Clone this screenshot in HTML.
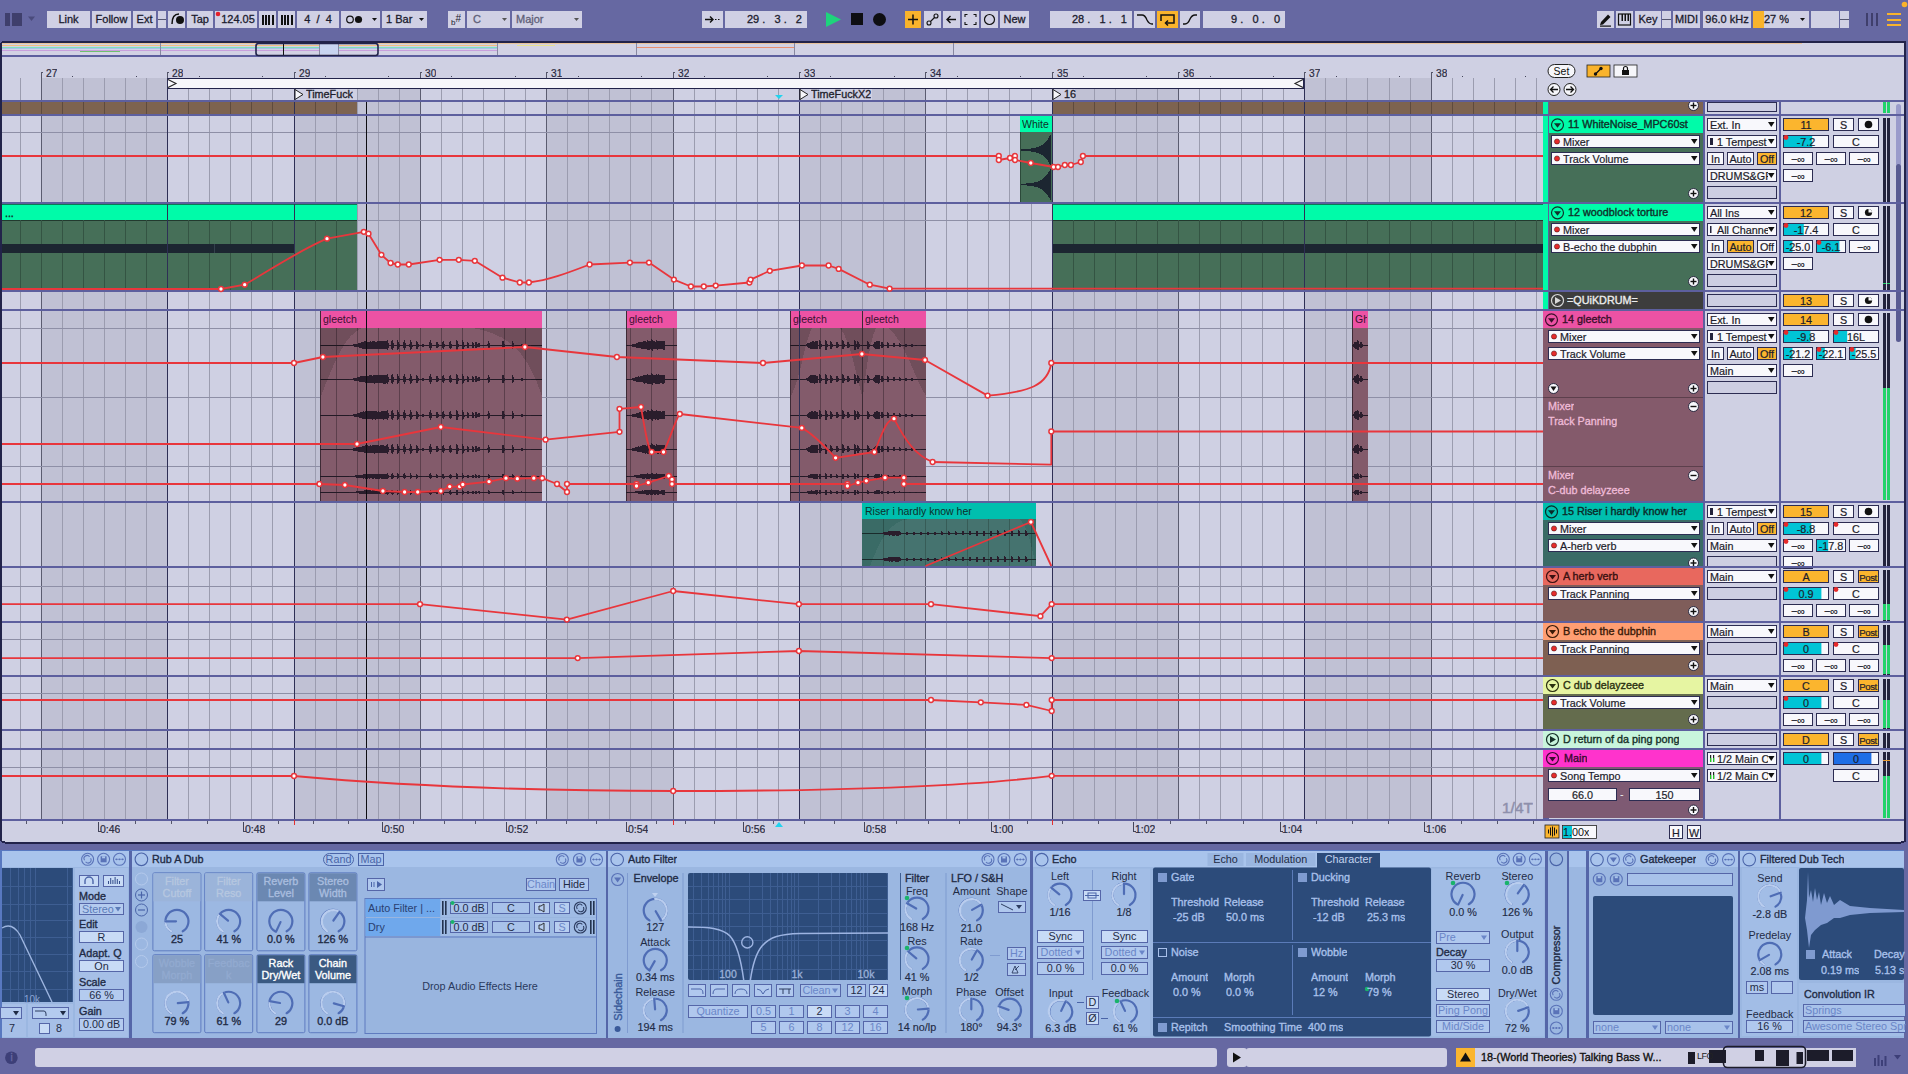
<!DOCTYPE html>
<html><head><meta charset="utf-8"><style>
html,body{margin:0;padding:0;}
body{width:1908px;height:1074px;overflow:hidden;position:relative;background:#6668a2;font-family:"Liberation Sans",sans-serif;}
.a{position:absolute;}
.t{white-space:nowrap;overflow:hidden;}
svg{position:absolute;left:0;top:0;}
</style></head><body>
<svg width="1908" height="1074" viewBox="0 0 1908 1074" shape-rendering="crispEdges">
<rect x="1" y="41.5" width="1904" height="801" rx="4" ry="4" fill="#cfd0e3" stroke="#22234a" stroke-width="2"/>
<rect x="2" y="43" width="1902" height="12" fill="#d2d2e4" />
<rect x="2" y="43" width="1800" height="1" fill="#e8c29a" />
<rect x="2" y="45" width="495" height="1" fill="#f0c080" />
<rect x="2" y="46.5" width="495" height="1" fill="#82e0b8" />
<rect x="2" y="48" width="495" height="1" fill="#a8c0ee" />
<rect x="2" y="50" width="495" height="1" fill="#c8a0dc" />
<rect x="80" y="50.5" width="40" height="1" fill="#70c070" />
<rect x="636" y="47" width="158" height="1" fill="#e89070" />
<rect x="517" y="45" width="38" height="1" fill="#e8e090" />
<rect x="2" y="55" width="1902" height="2" fill="#5d5f9e" />
<rect x="160" y="43" width="1" height="12" fill="#8888a0" />
<rect x="319" y="43" width="1" height="12" fill="#8888a0" />
<rect x="338" y="43" width="1" height="12" fill="#8888a0" />
<rect x="497" y="43" width="1" height="12" fill="#8888a0" />
<rect x="636" y="43" width="1" height="12" fill="#8888a0" />
<rect x="794" y="43" width="1" height="12" fill="#8888a0" />
<rect x="953" y="43" width="1" height="12" fill="#8888a0" />
<rect x="283" y="43" width="1.3" height="12" fill="#111" />
<rect x="320" y="44" width="18" height="10" fill="#c8d4f0" />
<rect x="2" y="57" width="1541" height="21" fill="#cfd0e3" />
<rect x="2" y="78" width="1541" height="741" fill="#cfd0e3" />
<rect x="42" y="78" width="126" height="741" fill="#c0c1d4" />
<rect x="295" y="78" width="126" height="741" fill="#c0c1d4" />
<rect x="547" y="78" width="127" height="741" fill="#c0c1d4" />
<rect x="800" y="78" width="126" height="741" fill="#c0c1d4" />
<rect x="1053" y="78" width="126" height="741" fill="#c0c1d4" />
<rect x="1305" y="78" width="127" height="741" fill="#c0c1d4" />
<rect x="20" y="78" width="1" height="741" fill="#9b9caf" />
<rect x="41" y="78" width="1" height="741" fill="#5b5c70" />
<rect x="62" y="78" width="1" height="741" fill="#9b9caf" />
<rect x="83" y="78" width="1" height="741" fill="#9b9caf" />
<rect x="104" y="78" width="1" height="741" fill="#9b9caf" />
<rect x="125" y="78" width="1" height="741" fill="#9b9caf" />
<rect x="146" y="78" width="1" height="741" fill="#9b9caf" />
<rect x="167" y="78" width="1" height="741" fill="#5b5c70" />
<rect x="188" y="78" width="1" height="741" fill="#9b9caf" />
<rect x="209" y="78" width="1" height="741" fill="#9b9caf" />
<rect x="230" y="78" width="1" height="741" fill="#9b9caf" />
<rect x="251" y="78" width="1" height="741" fill="#9b9caf" />
<rect x="272" y="78" width="1" height="741" fill="#9b9caf" />
<rect x="294" y="78" width="1" height="741" fill="#5b5c70" />
<rect x="315" y="78" width="1" height="741" fill="#9b9caf" />
<rect x="336" y="78" width="1" height="741" fill="#9b9caf" />
<rect x="357" y="78" width="1" height="741" fill="#9b9caf" />
<rect x="378" y="78" width="1" height="741" fill="#9b9caf" />
<rect x="399" y="78" width="1" height="741" fill="#9b9caf" />
<rect x="420" y="78" width="1" height="741" fill="#5b5c70" />
<rect x="441" y="78" width="1" height="741" fill="#9b9caf" />
<rect x="462" y="78" width="1" height="741" fill="#9b9caf" />
<rect x="483" y="78" width="1" height="741" fill="#9b9caf" />
<rect x="504" y="78" width="1" height="741" fill="#9b9caf" />
<rect x="525" y="78" width="1" height="741" fill="#9b9caf" />
<rect x="546" y="78" width="1" height="741" fill="#5b5c70" />
<rect x="567" y="78" width="1" height="741" fill="#9b9caf" />
<rect x="588" y="78" width="1" height="741" fill="#9b9caf" />
<rect x="609" y="78" width="1" height="741" fill="#9b9caf" />
<rect x="630" y="78" width="1" height="741" fill="#9b9caf" />
<rect x="651" y="78" width="1" height="741" fill="#9b9caf" />
<rect x="673" y="78" width="1" height="741" fill="#5b5c70" />
<rect x="694" y="78" width="1" height="741" fill="#9b9caf" />
<rect x="715" y="78" width="1" height="741" fill="#9b9caf" />
<rect x="736" y="78" width="1" height="741" fill="#9b9caf" />
<rect x="757" y="78" width="1" height="741" fill="#9b9caf" />
<rect x="778" y="78" width="1" height="741" fill="#9b9caf" />
<rect x="799" y="78" width="1" height="741" fill="#5b5c70" />
<rect x="820" y="78" width="1" height="741" fill="#9b9caf" />
<rect x="841" y="78" width="1" height="741" fill="#9b9caf" />
<rect x="862" y="78" width="1" height="741" fill="#9b9caf" />
<rect x="883" y="78" width="1" height="741" fill="#9b9caf" />
<rect x="904" y="78" width="1" height="741" fill="#9b9caf" />
<rect x="925" y="78" width="1" height="741" fill="#5b5c70" />
<rect x="946" y="78" width="1" height="741" fill="#9b9caf" />
<rect x="967" y="78" width="1" height="741" fill="#9b9caf" />
<rect x="988" y="78" width="1" height="741" fill="#9b9caf" />
<rect x="1009" y="78" width="1" height="741" fill="#9b9caf" />
<rect x="1031" y="78" width="1" height="741" fill="#9b9caf" />
<rect x="1052" y="78" width="1" height="741" fill="#5b5c70" />
<rect x="1073" y="78" width="1" height="741" fill="#9b9caf" />
<rect x="1094" y="78" width="1" height="741" fill="#9b9caf" />
<rect x="1115" y="78" width="1" height="741" fill="#9b9caf" />
<rect x="1136" y="78" width="1" height="741" fill="#9b9caf" />
<rect x="1157" y="78" width="1" height="741" fill="#9b9caf" />
<rect x="1178" y="78" width="1" height="741" fill="#5b5c70" />
<rect x="1199" y="78" width="1" height="741" fill="#9b9caf" />
<rect x="1220" y="78" width="1" height="741" fill="#9b9caf" />
<rect x="1241" y="78" width="1" height="741" fill="#9b9caf" />
<rect x="1262" y="78" width="1" height="741" fill="#9b9caf" />
<rect x="1283" y="78" width="1" height="741" fill="#9b9caf" />
<rect x="1304" y="78" width="1" height="741" fill="#5b5c70" />
<rect x="1325" y="78" width="1" height="741" fill="#9b9caf" />
<rect x="1346" y="78" width="1" height="741" fill="#9b9caf" />
<rect x="1367" y="78" width="1" height="741" fill="#9b9caf" />
<rect x="1389" y="78" width="1" height="741" fill="#9b9caf" />
<rect x="1410" y="78" width="1" height="741" fill="#9b9caf" />
<rect x="1431" y="78" width="1" height="741" fill="#5b5c70" />
<rect x="1452" y="78" width="1" height="741" fill="#9b9caf" />
<rect x="1473" y="78" width="1" height="741" fill="#9b9caf" />
<rect x="1494" y="78" width="1" height="741" fill="#9b9caf" />
<rect x="1515" y="78" width="1" height="741" fill="#9b9caf" />
<rect x="1536" y="78" width="1" height="741" fill="#9b9caf" />
<rect x="41" y="72" width="1" height="6" fill="#55566a" />
<rect x="41" y="72" width="2" height="1" fill="#55566a" />
<rect x="72" y="76" width="1" height="1" fill="#44455a" />
<rect x="136" y="76" width="1" height="1" fill="#44455a" />
<rect x="167" y="72" width="1" height="6" fill="#55566a" />
<rect x="167" y="72" width="2" height="1" fill="#55566a" />
<rect x="199" y="76" width="1" height="1" fill="#44455a" />
<rect x="262" y="76" width="1" height="1" fill="#44455a" />
<rect x="294" y="72" width="1" height="6" fill="#55566a" />
<rect x="294" y="72" width="2" height="1" fill="#55566a" />
<rect x="325" y="76" width="1" height="1" fill="#44455a" />
<rect x="388" y="76" width="1" height="1" fill="#44455a" />
<rect x="420" y="72" width="1" height="6" fill="#55566a" />
<rect x="420" y="72" width="2" height="1" fill="#55566a" />
<rect x="451" y="76" width="1" height="1" fill="#44455a" />
<rect x="515" y="76" width="1" height="1" fill="#44455a" />
<rect x="546" y="72" width="1" height="6" fill="#55566a" />
<rect x="546" y="72" width="2" height="1" fill="#55566a" />
<rect x="578" y="76" width="1" height="1" fill="#44455a" />
<rect x="641" y="76" width="1" height="1" fill="#44455a" />
<rect x="673" y="72" width="1" height="6" fill="#55566a" />
<rect x="673" y="72" width="2" height="1" fill="#55566a" />
<rect x="704" y="76" width="1" height="1" fill="#44455a" />
<rect x="767" y="76" width="1" height="1" fill="#44455a" />
<rect x="799" y="72" width="1" height="6" fill="#55566a" />
<rect x="799" y="72" width="2" height="1" fill="#55566a" />
<rect x="830" y="76" width="1" height="1" fill="#44455a" />
<rect x="894" y="76" width="1" height="1" fill="#44455a" />
<rect x="925" y="72" width="1" height="6" fill="#55566a" />
<rect x="925" y="72" width="2" height="1" fill="#55566a" />
<rect x="957" y="76" width="1" height="1" fill="#44455a" />
<rect x="1020" y="76" width="1" height="1" fill="#44455a" />
<rect x="1052" y="72" width="1" height="6" fill="#55566a" />
<rect x="1052" y="72" width="2" height="1" fill="#55566a" />
<rect x="1083" y="76" width="1" height="1" fill="#44455a" />
<rect x="1146" y="76" width="1" height="1" fill="#44455a" />
<rect x="1178" y="72" width="1" height="6" fill="#55566a" />
<rect x="1178" y="72" width="2" height="1" fill="#55566a" />
<rect x="1210" y="76" width="1" height="1" fill="#44455a" />
<rect x="1273" y="76" width="1" height="1" fill="#44455a" />
<rect x="1304" y="72" width="1" height="6" fill="#55566a" />
<rect x="1304" y="72" width="2" height="1" fill="#55566a" />
<rect x="1336" y="76" width="1" height="1" fill="#44455a" />
<rect x="1399" y="76" width="1" height="1" fill="#44455a" />
<rect x="1431" y="72" width="1" height="6" fill="#55566a" />
<rect x="1431" y="72" width="2" height="1" fill="#55566a" />
<rect x="1462" y="76" width="1" height="1" fill="#44455a" />
<rect x="1525" y="76" width="1" height="1" fill="#44455a" />
<rect x="167.5" y="78.5" width="1136" height="10" fill="#f6f6fa" stroke="#22234a" stroke-width="1"/>
<rect x="295" y="89" width="62" height="11" fill="#cfd0e3" />
<rect x="800" y="89" width="72" height="11" fill="#cfd0e3" />
<rect x="1053" y="89" width="22" height="11" fill="#cfd0e3" />
<rect x="2" y="132" width="1541" height="1" fill="#8e8fa6" />
<rect x="2" y="220" width="1541" height="1" fill="#8e8fa6" />
<rect x="2" y="328" width="1541" height="1" fill="#8e8fa6" />
<rect x="2" y="586" width="1541" height="1" fill="#8e8fa6" />
<rect x="2" y="639" width="1541" height="1" fill="#8e8fa6" />
<rect x="2" y="693" width="1541" height="1" fill="#8e8fa6" />
<rect x="2" y="767" width="1541" height="1" fill="#8e8fa6" />
<rect x="2" y="397" width="1541" height="1" fill="#8e8fa6" />
<rect x="2" y="466" width="1541" height="1" fill="#8e8fa6" />
<rect x="2" y="102" width="355" height="12" fill="#7d6350" />
<rect x="20" y="102" width="1" height="12" fill="#5e4a3d" />
<rect x="41" y="102" width="1" height="12" fill="#5e4a3d" />
<rect x="62" y="102" width="1" height="12" fill="#5e4a3d" />
<rect x="83" y="102" width="1" height="12" fill="#5e4a3d" />
<rect x="104" y="102" width="1" height="12" fill="#5e4a3d" />
<rect x="125" y="102" width="1" height="12" fill="#5e4a3d" />
<rect x="146" y="102" width="1" height="12" fill="#5e4a3d" />
<rect x="167" y="102" width="1" height="12" fill="#5e4a3d" />
<rect x="188" y="102" width="1" height="12" fill="#5e4a3d" />
<rect x="209" y="102" width="1" height="12" fill="#5e4a3d" />
<rect x="230" y="102" width="1" height="12" fill="#5e4a3d" />
<rect x="251" y="102" width="1" height="12" fill="#5e4a3d" />
<rect x="272" y="102" width="1" height="12" fill="#5e4a3d" />
<rect x="294" y="102" width="1" height="12" fill="#5e4a3d" />
<rect x="315" y="102" width="1" height="12" fill="#5e4a3d" />
<rect x="336" y="102" width="1" height="12" fill="#5e4a3d" />
<rect x="1052" y="102" width="491" height="12" fill="#7d6350" />
<rect x="1073" y="102" width="1" height="12" fill="#5e4a3d" />
<rect x="1094" y="102" width="1" height="12" fill="#5e4a3d" />
<rect x="1115" y="102" width="1" height="12" fill="#5e4a3d" />
<rect x="1136" y="102" width="1" height="12" fill="#5e4a3d" />
<rect x="1157" y="102" width="1" height="12" fill="#5e4a3d" />
<rect x="1178" y="102" width="1" height="12" fill="#5e4a3d" />
<rect x="1199" y="102" width="1" height="12" fill="#5e4a3d" />
<rect x="1220" y="102" width="1" height="12" fill="#5e4a3d" />
<rect x="1241" y="102" width="1" height="12" fill="#5e4a3d" />
<rect x="1262" y="102" width="1" height="12" fill="#5e4a3d" />
<rect x="1283" y="102" width="1" height="12" fill="#5e4a3d" />
<rect x="1304" y="102" width="1" height="12" fill="#5e4a3d" />
<rect x="1325" y="102" width="1" height="12" fill="#5e4a3d" />
<rect x="1346" y="102" width="1" height="12" fill="#5e4a3d" />
<rect x="1367" y="102" width="1" height="12" fill="#5e4a3d" />
<rect x="1389" y="102" width="1" height="12" fill="#5e4a3d" />
<rect x="1410" y="102" width="1" height="12" fill="#5e4a3d" />
<rect x="1431" y="102" width="1" height="12" fill="#5e4a3d" />
<rect x="1452" y="102" width="1" height="12" fill="#5e4a3d" />
<rect x="1473" y="102" width="1" height="12" fill="#5e4a3d" />
<rect x="1494" y="102" width="1" height="12" fill="#5e4a3d" />
<rect x="1515" y="102" width="1" height="12" fill="#5e4a3d" />
<rect x="1536" y="102" width="1" height="12" fill="#5e4a3d" />
<rect x="1020" y="116" width="32" height="16" fill="#00fba9" />
<rect x="1020" y="132" width="32" height="70" fill="#466f58" />
<rect x="1020" y="132" width="1" height="70" fill="#2c4a3a" />
<path d="M1021 149.3 L1030 148.8 C1040 147.5 1046 144 1051 134 L1051 166 C1046 156 1040 152.5 1030 151.2 L1021 150.7 Z" fill="#1c2631"/>
<path d="M1021 183.8 L1030 183.3 C1040 182.0 1046 178.5 1051 168.5 L1051 200.5 C1046 190.5 1040 187.0 1030 185.7 L1021 185.2 Z" fill="#1c2631"/>
<rect x="2" y="204" width="355" height="16" fill="#00fba9" />
<rect x="2" y="204" width="355" height="1" fill="#0b7a52" />
<rect x="2" y="220" width="355" height="70" fill="#466f58" />
<rect x="2" y="220" width="355" height="1" fill="#223a2e" />
<rect x="20" y="220" width="1" height="70" fill="#345443" />
<rect x="41" y="220" width="1" height="70" fill="#345443" />
<rect x="62" y="220" width="1" height="70" fill="#345443" />
<rect x="83" y="220" width="1" height="70" fill="#345443" />
<rect x="104" y="220" width="1" height="70" fill="#345443" />
<rect x="125" y="220" width="1" height="70" fill="#345443" />
<rect x="146" y="220" width="1" height="70" fill="#345443" />
<rect x="167" y="220" width="1" height="70" fill="#345443" />
<rect x="188" y="220" width="1" height="70" fill="#345443" />
<rect x="209" y="220" width="1" height="70" fill="#345443" />
<rect x="230" y="220" width="1" height="70" fill="#345443" />
<rect x="251" y="220" width="1" height="70" fill="#345443" />
<rect x="272" y="220" width="1" height="70" fill="#345443" />
<rect x="294" y="220" width="1" height="70" fill="#345443" />
<rect x="315" y="220" width="1" height="70" fill="#345443" />
<rect x="336" y="220" width="1" height="70" fill="#345443" />
<rect x="1052" y="204" width="491" height="16" fill="#00fba9" />
<rect x="1052" y="204" width="491" height="1" fill="#0b7a52" />
<rect x="1052" y="220" width="491" height="70" fill="#466f58" />
<rect x="1052" y="220" width="491" height="1" fill="#223a2e" />
<rect x="1073" y="220" width="1" height="70" fill="#345443" />
<rect x="1094" y="220" width="1" height="70" fill="#345443" />
<rect x="1115" y="220" width="1" height="70" fill="#345443" />
<rect x="1136" y="220" width="1" height="70" fill="#345443" />
<rect x="1157" y="220" width="1" height="70" fill="#345443" />
<rect x="1178" y="220" width="1" height="70" fill="#345443" />
<rect x="1199" y="220" width="1" height="70" fill="#345443" />
<rect x="1220" y="220" width="1" height="70" fill="#345443" />
<rect x="1241" y="220" width="1" height="70" fill="#345443" />
<rect x="1262" y="220" width="1" height="70" fill="#345443" />
<rect x="1283" y="220" width="1" height="70" fill="#345443" />
<rect x="1304" y="220" width="1" height="70" fill="#345443" />
<rect x="1325" y="220" width="1" height="70" fill="#345443" />
<rect x="1346" y="220" width="1" height="70" fill="#345443" />
<rect x="1367" y="220" width="1" height="70" fill="#345443" />
<rect x="1389" y="220" width="1" height="70" fill="#345443" />
<rect x="1410" y="220" width="1" height="70" fill="#345443" />
<rect x="1431" y="220" width="1" height="70" fill="#345443" />
<rect x="1452" y="220" width="1" height="70" fill="#345443" />
<rect x="1473" y="220" width="1" height="70" fill="#345443" />
<rect x="1494" y="220" width="1" height="70" fill="#345443" />
<rect x="1515" y="220" width="1" height="70" fill="#345443" />
<rect x="1536" y="220" width="1" height="70" fill="#345443" />
<rect x="2" y="244" width="292" height="9" fill="#1c2631" />
<rect x="214" y="244" width="1" height="9" fill="#33404c" />
<rect x="1052" y="244" width="491" height="9" fill="#1c2631" />
<rect x="320" y="311" width="222" height="17" fill="#ec52a4" />
<rect x="320" y="328" width="222" height="173" fill="#835b6b" />
<rect x="336" y="328" width="1" height="173" fill="#5c3f4c" />
<rect x="357" y="328" width="1" height="173" fill="#5c3f4c" />
<rect x="378" y="328" width="1" height="173" fill="#5c3f4c" />
<rect x="399" y="328" width="1" height="173" fill="#5c3f4c" />
<rect x="420" y="328" width="1" height="173" fill="#5c3f4c" />
<rect x="441" y="328" width="1" height="173" fill="#5c3f4c" />
<rect x="462" y="328" width="1" height="173" fill="#5c3f4c" />
<rect x="483" y="328" width="1" height="173" fill="#5c3f4c" />
<rect x="504" y="328" width="1" height="173" fill="#5c3f4c" />
<rect x="525" y="328" width="1" height="173" fill="#5c3f4c" />
<rect x="320" y="311" width="1" height="190" fill="#3d2a35" />
<rect x="320" y="345" width="222" height="1" fill="#231a26" />
<rect x="320" y="379" width="222" height="1" fill="#231a26" />
<rect x="320" y="415" width="222" height="1" fill="#231a26" />
<rect x="320" y="449" width="222" height="1" fill="#231a26" />
<rect x="320" y="476" width="222" height="1" fill="#231a26" />
<rect x="320" y="492" width="222" height="1" fill="#231a26" />
<rect x="626" y="311" width="51" height="17" fill="#ec52a4" />
<rect x="626" y="328" width="51" height="173" fill="#835b6b" />
<rect x="630" y="328" width="1" height="173" fill="#5c3f4c" />
<rect x="651" y="328" width="1" height="173" fill="#5c3f4c" />
<rect x="673" y="328" width="1" height="173" fill="#5c3f4c" />
<rect x="626" y="311" width="1" height="190" fill="#3d2a35" />
<rect x="626" y="345" width="51" height="1" fill="#231a26" />
<rect x="626" y="379" width="51" height="1" fill="#231a26" />
<rect x="626" y="415" width="51" height="1" fill="#231a26" />
<rect x="626" y="449" width="51" height="1" fill="#231a26" />
<rect x="626" y="476" width="51" height="1" fill="#231a26" />
<rect x="626" y="492" width="51" height="1" fill="#231a26" />
<rect x="790" y="311" width="72" height="17" fill="#ec52a4" />
<rect x="790" y="328" width="72" height="173" fill="#835b6b" />
<rect x="799" y="328" width="1" height="173" fill="#5c3f4c" />
<rect x="820" y="328" width="1" height="173" fill="#5c3f4c" />
<rect x="841" y="328" width="1" height="173" fill="#5c3f4c" />
<rect x="790" y="311" width="1" height="190" fill="#3d2a35" />
<rect x="790" y="345" width="72" height="1" fill="#231a26" />
<rect x="790" y="379" width="72" height="1" fill="#231a26" />
<rect x="790" y="415" width="72" height="1" fill="#231a26" />
<rect x="790" y="449" width="72" height="1" fill="#231a26" />
<rect x="790" y="476" width="72" height="1" fill="#231a26" />
<rect x="790" y="492" width="72" height="1" fill="#231a26" />
<rect x="862" y="311" width="64" height="17" fill="#ec52a4" />
<rect x="862" y="328" width="64" height="173" fill="#835b6b" />
<rect x="883" y="328" width="1" height="173" fill="#5c3f4c" />
<rect x="904" y="328" width="1" height="173" fill="#5c3f4c" />
<rect x="862" y="311" width="1" height="190" fill="#3d2a35" />
<rect x="862" y="345" width="64" height="1" fill="#231a26" />
<rect x="862" y="379" width="64" height="1" fill="#231a26" />
<rect x="862" y="415" width="64" height="1" fill="#231a26" />
<rect x="862" y="449" width="64" height="1" fill="#231a26" />
<rect x="862" y="476" width="64" height="1" fill="#231a26" />
<rect x="862" y="492" width="64" height="1" fill="#231a26" />
<rect x="1352" y="311" width="16" height="17" fill="#ec52a4" />
<rect x="1352" y="328" width="16" height="173" fill="#835b6b" />
<rect x="1352" y="311" width="1" height="190" fill="#3d2a35" />
<rect x="1352" y="345" width="16" height="1" fill="#231a26" />
<rect x="1352" y="379" width="16" height="1" fill="#231a26" />
<rect x="1352" y="415" width="16" height="1" fill="#231a26" />
<rect x="1352" y="449" width="16" height="1" fill="#231a26" />
<rect x="1352" y="476" width="16" height="1" fill="#231a26" />
<rect x="1352" y="492" width="16" height="1" fill="#231a26" />
<path d="M321 328 L321 396 C335 360 345 335 362 328 Z M542 328 L542 396 C530 360 515 335 473 328 Z" fill="#000" fill-opacity="0.14"/>
<path d="M791 328 L791 396 C800 380 805 340 812 328 Z M862 328 L862 396 C855 370 850 340 840 328 Z M863 328 L863 396 C866 370 870 340 876 328 Z M926 328 L926 396 C915 380 905 340 888 328 Z" fill="#000" fill-opacity="0.14"/>
<path d="M349.0 345.5 L349.8 345.3 L350.6 345.1 L351.4 345.0 L352.2 344.7 L353.0 344.5 L353.8 344.4 L354.6 344.1 L355.4 344.1 L356.2 343.7 L357.0 343.7 L357.8 343.5 L358.7 343.1 L359.5 342.6 L360.3 342.9 L361.1 342.7 L361.9 342.1 L362.7 341.6 L363.5 341.7 L364.3 341.7 L365.1 340.8 L365.9 341.8 L366.7 340.8 L367.5 341.5 L368.3 341.6 L369.1 341.7 L369.9 341.4 L370.7 340.8 L371.5 341.6 L372.3 341.1 L373.1 341.0 L373.9 341.4 L374.7 341.2 L375.5 341.7 L376.3 341.8 L377.2 341.6 L378.0 341.0 L378.8 341.3 L379.6 341.4 L380.4 341.1 L381.2 341.3 L382.0 341.5 L382.8 340.9 L383.6 341.0 L384.4 341.5 L385.2 341.1 L386.0 341.2 L386.0 349.2 L385.2 349.2 L384.4 348.9 L383.6 349.4 L382.8 349.5 L382.0 348.9 L381.2 349.1 L380.4 349.2 L379.6 349.0 L378.8 349.1 L378.0 349.3 L377.2 348.8 L376.3 348.7 L375.5 348.7 L374.7 349.2 L373.9 349.0 L373.1 349.3 L372.3 349.2 L371.5 348.8 L370.7 349.5 L369.9 348.9 L369.1 348.7 L368.3 348.8 L367.5 348.9 L366.7 349.5 L365.9 348.7 L365.1 349.5 L364.3 348.7 L363.5 348.7 L362.7 348.8 L361.9 348.4 L361.1 347.9 L360.3 347.7 L359.5 348.0 L358.7 347.5 L357.8 347.2 L357.0 347.0 L356.2 347.0 L355.4 346.7 L354.6 346.7 L353.8 346.4 L353.0 346.3 L352.2 346.2 L351.4 346.0 L350.6 345.9 L349.8 345.7 L349.0 345.5 Z M385.9 345.5 L386.8 338.5 L387.7 340.2 L388.6 343.8 L389.8 345.5 L388.6 347.6 L387.7 350.4 L386.8 350.8 Z M390.9 345.5 L391.8 338.5 L392.7 340.2 L393.6 343.8 L394.8 345.5 L393.6 347.6 L392.7 350.4 L391.8 350.8 Z M396.5 345.5 L397.4 339.9 L398.3 341.3 L399.2 344.1 L400.4 345.5 L399.2 347.2 L398.3 349.4 L397.4 349.7 Z M403.0 345.5 L403.9 339.2 L404.8 340.8 L405.7 343.9 L406.9 345.5 L405.7 347.4 L404.8 349.9 L403.9 350.2 Z M409.3 345.5 L410.2 339.2 L411.1 340.8 L412.0 343.9 L413.2 345.5 L412.0 347.4 L411.1 349.9 L410.2 350.2 Z M415.6 345.5 L416.5 340.6 L417.4 341.8 L418.3 344.3 L419.5 345.5 L418.3 347.0 L417.4 348.9 L416.5 349.2 Z M421.9 345.5 L422.8 343.4 L423.7 343.9 L424.6 345.0 L425.8 345.5 L424.6 346.1 L423.7 347.0 L422.8 347.1 Z M429.0 345.5 L429.9 339.2 L430.8 340.8 L431.7 343.9 L432.9 345.5 L431.7 347.4 L430.8 349.9 L429.9 350.2 Z M435.7 345.5 L436.6 341.3 L437.5 342.4 L438.4 344.4 L439.6 345.5 L438.4 346.8 L437.5 348.4 L436.6 348.6 Z M441.9 345.5 L442.8 339.9 L443.7 341.3 L444.6 344.1 L445.8 345.5 L444.6 347.2 L443.7 349.4 L442.8 349.7 Z M449.0 345.5 L449.9 339.9 L450.8 341.3 L451.7 344.1 L452.9 345.5 L451.7 347.2 L450.8 349.4 L449.9 349.7 Z M455.7 345.5 L456.6 339.2 L457.5 340.8 L458.4 343.9 L459.6 345.5 L458.4 347.4 L457.5 349.9 L456.6 350.2 Z M461.4 345.5 L462.3 339.9 L463.2 341.3 L464.1 344.1 L465.3 345.5 L464.1 347.2 L463.2 349.4 L462.3 349.7 Z M466.7 345.5 L467.6 342.0 L468.5 342.9 L469.4 344.6 L470.6 345.5 L469.4 346.6 L468.5 347.9 L467.6 348.1 Z M471.7 345.5 L472.6 342.0 L473.5 342.9 L474.4 344.6 L475.6 345.5 L474.4 346.6 L473.5 347.9 L472.6 348.1 Z M474.7 345.5 L475.6 341.3 L476.5 342.4 L477.4 344.4 L478.6 345.5 L477.4 346.8 L476.5 348.4 L475.6 348.6 Z M477.7 345.5 L478.6 342.7 L479.5 343.4 L480.4 344.8 L481.6 345.5 L480.4 346.3 L479.5 347.5 L478.6 347.6 Z M487.3 345.5 L488.2 340.6 L489.1 341.8 L490.0 344.3 L491.2 345.5 L490.0 347.0 L489.1 348.9 L488.2 349.2 Z M501.8 345.5 L502.7 339.9 L503.6 341.3 L504.5 344.1 L505.7 345.5 L504.5 347.2 L503.6 349.4 L502.7 349.7 Z M511.5 345.5 L512.4 341.3 L513.3 342.4 L514.2 344.4 L515.4 345.5 L514.2 346.8 L513.3 348.4 L512.4 348.6 Z M520.3 345.5 L521.2 343.4 L522.1 343.9 L523.0 345.0 L524.2 345.5 L523.0 346.1 L522.1 347.0 L521.2 347.1 Z M526.7 345.5 L527.6 344.4 L528.5 344.7 L529.4 345.2 L530.6 345.5 L529.4 345.8 L528.5 346.2 L527.6 346.3 Z" fill="#2a1d2c"/>
<path d="M628.0 345.5 L628.8 345.3 L629.6 345.1 L630.4 344.8 L631.2 344.7 L632.0 344.4 L632.8 344.1 L633.6 344.1 L634.4 343.8 L635.2 343.8 L636.0 343.2 L636.8 343.0 L637.7 342.9 L638.5 342.4 L639.3 342.6 L640.1 342.1 L640.9 342.0 L641.7 341.8 L642.5 341.7 L643.3 341.0 L644.1 340.6 L644.9 341.0 L645.7 340.8 L646.5 341.6 L647.3 340.7 L648.1 340.8 L648.9 340.4 L649.7 340.6 L650.5 341.3 L651.3 341.1 L652.1 340.8 L652.9 341.6 L653.7 341.0 L654.5 341.4 L655.3 341.5 L656.2 341.6 L657.0 340.7 L657.8 341.5 L658.6 341.3 L659.4 341.1 L660.2 340.5 L661.0 341.5 L661.8 341.1 L662.6 340.9 L663.4 340.5 L664.2 340.6 L665.0 340.5 L665.0 349.7 L664.2 349.7 L663.4 349.7 L662.6 349.4 L661.8 349.3 L661.0 348.9 L660.2 349.7 L659.4 349.2 L658.6 349.1 L657.8 348.9 L657.0 349.6 L656.2 348.8 L655.3 348.9 L654.5 349.0 L653.7 349.3 L652.9 348.8 L652.1 349.5 L651.3 349.2 L650.5 349.1 L649.7 349.7 L648.9 349.9 L648.1 349.5 L647.3 349.5 L646.5 348.8 L645.7 349.5 L644.9 349.3 L644.1 349.6 L643.3 349.3 L642.5 348.8 L641.7 348.7 L640.9 348.5 L640.1 348.4 L639.3 347.9 L638.5 348.1 L637.7 347.7 L636.8 347.7 L636.0 347.4 L635.2 346.9 L634.4 347.0 L633.6 346.7 L632.8 346.7 L632.0 346.4 L631.2 346.2 L630.4 346.1 L629.6 345.8 L628.8 345.7 L628.0 345.5 Z M646.7 345.5 L647.6 338.9 L648.5 340.5 L649.4 343.8 L650.6 345.5 L649.4 347.5 L648.5 350.1 L647.6 350.5 Z M650.7 345.5 L651.6 338.1 L652.5 340.0 L653.4 343.7 L654.6 345.5 L653.4 347.7 L652.5 350.6 L651.6 351.0 Z M655.7 345.5 L656.6 339.6 L657.5 341.1 L658.4 344.0 L659.6 345.5 L658.4 347.3 L657.5 349.6 L656.6 349.9 Z M659.7 345.5 L660.6 341.8 L661.5 342.7 L662.4 344.6 L663.6 345.5 L662.4 346.6 L661.5 348.1 L660.6 348.3 Z" fill="#2a1d2c"/>
<path d="M805.0 345.5 L805.8 344.9 L806.6 344.4 L807.4 343.5 L808.2 342.8 L809.1 342.8 L809.9 342.3 L810.7 341.7 L811.5 341.5 L812.3 341.2 L813.1 341.1 L813.9 341.5 L814.8 341.8 L815.6 341.3 L816.4 341.4 L817.2 341.1 L818.0 340.7 L818.0 349.6 L817.2 349.2 L816.4 349.0 L815.6 349.1 L814.8 348.6 L813.9 348.9 L813.1 349.2 L812.3 349.1 L811.5 348.9 L810.7 348.7 L809.9 348.2 L809.1 347.8 L808.2 347.8 L807.4 347.2 L806.6 346.5 L805.8 346.0 L805.0 345.5 Z M813.7 345.5 L814.6 342.0 L815.5 342.9 L816.4 344.6 L817.6 345.5 L816.4 346.6 L815.5 347.9 L814.6 348.1 Z M818.7 345.5 L819.6 339.9 L820.5 341.3 L821.4 344.1 L822.6 345.5 L821.4 347.2 L820.5 349.4 L819.6 349.7 Z M824.7 345.5 L825.6 339.2 L826.5 340.8 L827.4 343.9 L828.6 345.5 L827.4 347.4 L826.5 349.9 L825.6 350.2 Z M829.7 345.5 L830.6 340.6 L831.5 341.8 L832.4 344.3 L833.6 345.5 L832.4 347.0 L831.5 348.9 L830.6 349.2 Z M835.7 345.5 L836.6 341.3 L837.5 342.4 L838.4 344.4 L839.6 345.5 L838.4 346.8 L837.5 348.4 L836.6 348.6 Z M841.7 345.5 L842.6 339.9 L843.5 341.3 L844.4 344.1 L845.6 345.5 L844.4 347.2 L843.5 349.4 L842.6 349.7 Z M846.7 345.5 L847.6 341.3 L848.5 342.4 L849.4 344.4 L850.6 345.5 L849.4 346.8 L848.5 348.4 L847.6 348.6 Z M853.7 345.5 L854.6 339.2 L855.5 340.8 L856.4 343.9 L857.6 345.5 L856.4 347.4 L855.5 349.9 L854.6 350.2 Z M856.7 345.5 L857.6 340.6 L858.5 341.8 L859.4 344.3 L860.6 345.5 L859.4 347.0 L858.5 348.9 L857.6 349.2 Z" fill="#2a1d2c"/>
<path d="M872.0 345.5 L872.8 344.6 L873.6 343.6 L874.4 342.5 L875.2 342.2 L876.0 340.7 L876.8 340.9 L877.6 340.8 L878.4 340.8 L879.2 341.3 L880.0 341.3 L880.0 349.0 L879.2 349.0 L878.4 349.5 L877.6 349.5 L876.8 349.4 L876.0 349.6 L875.2 348.3 L874.4 348.0 L873.6 347.2 L872.8 346.3 L872.0 345.5 Z M866.7 345.5 L867.6 340.6 L868.5 341.8 L869.4 344.3 L870.6 345.5 L869.4 347.0 L868.5 348.9 L867.6 349.2 Z M874.7 345.5 L875.6 342.0 L876.5 342.9 L877.4 344.6 L878.6 345.5 L877.4 346.6 L876.5 347.9 L875.6 348.1 Z M880.7 345.5 L881.6 341.3 L882.5 342.4 L883.4 344.4 L884.6 345.5 L883.4 346.8 L882.5 348.4 L881.6 348.6 Z M886.7 345.5 L887.6 342.0 L888.5 342.9 L889.4 344.6 L890.6 345.5 L889.4 346.6 L888.5 347.9 L887.6 348.1 Z M892.7 345.5 L893.6 342.7 L894.5 343.4 L895.4 344.8 L896.6 345.5 L895.4 346.3 L894.5 347.5 L893.6 347.6 Z M898.7 345.5 L899.6 343.1 L900.5 343.7 L901.4 344.9 L902.6 345.5 L901.4 346.2 L900.5 347.2 L899.6 347.3 Z M904.7 345.5 L905.6 343.4 L906.5 343.9 L907.4 345.0 L908.6 345.5 L907.4 346.1 L906.5 347.0 L905.6 347.1 Z M910.7 345.5 L911.6 343.8 L912.5 344.2 L913.4 345.1 L914.6 345.5 L913.4 346.0 L912.5 346.7 L911.6 346.8 Z M916.7 345.5 L917.6 344.4 L918.5 344.7 L919.4 345.2 L920.6 345.5 L919.4 345.8 L918.5 346.2 L917.6 346.3 Z" fill="#2a1d2c"/>
<path d="M1353.0 345.5 L1353.8 343.5 L1354.6 342.2 L1355.4 341.7 L1356.2 341.6 L1357.0 341.6 L1357.0 348.8 L1356.2 348.8 L1355.4 348.7 L1354.6 348.3 L1353.8 347.2 L1353.0 345.5 Z M1356.7 345.5 L1357.6 339.2 L1358.5 340.8 L1359.4 343.9 L1360.6 345.5 L1359.4 347.4 L1358.5 349.9 L1357.6 350.2 Z M1359.7 345.5 L1360.6 341.3 L1361.5 342.4 L1362.4 344.4 L1363.6 345.5 L1362.4 346.8 L1361.5 348.4 L1360.6 348.6 Z" fill="#2a1d2c"/>
<path d="M349.0 379.5 L349.8 379.3 L350.6 379.1 L351.4 378.9 L352.2 378.8 L353.0 378.5 L353.8 378.4 L354.6 377.9 L355.4 377.8 L356.2 377.8 L357.0 377.6 L357.8 377.3 L358.7 377.1 L359.5 377.1 L360.3 376.3 L361.1 376.0 L361.9 376.3 L362.7 376.0 L363.5 376.2 L364.3 376.0 L365.1 375.6 L365.9 375.5 L366.7 374.8 L367.5 375.6 L368.3 375.8 L369.1 374.7 L369.9 375.2 L370.7 375.6 L371.5 375.2 L372.3 375.8 L373.1 375.2 L373.9 374.6 L374.7 374.8 L375.5 375.0 L376.3 375.5 L377.2 375.4 L378.0 375.6 L378.8 374.9 L379.6 375.2 L380.4 374.9 L381.2 375.4 L382.0 375.6 L382.8 374.8 L383.6 374.6 L384.4 374.8 L385.2 374.8 L386.0 374.8 L386.0 383.5 L385.2 383.5 L384.4 383.5 L383.6 383.6 L382.8 383.5 L382.0 382.9 L381.2 383.0 L380.4 383.4 L379.6 383.2 L378.8 383.4 L378.0 382.8 L377.2 383.0 L376.3 382.9 L375.5 383.3 L374.7 383.5 L373.9 383.6 L373.1 383.2 L372.3 382.7 L371.5 383.2 L370.7 382.8 L369.9 383.2 L369.1 383.6 L368.3 382.6 L367.5 382.8 L366.7 383.5 L365.9 382.9 L365.1 382.8 L364.3 382.4 L363.5 382.3 L362.7 382.4 L361.9 382.3 L361.1 382.5 L360.3 382.2 L359.5 381.5 L358.7 381.5 L357.8 381.3 L357.0 381.1 L356.2 380.9 L355.4 380.9 L354.6 380.9 L353.8 380.4 L353.0 380.3 L352.2 380.1 L351.4 380.0 L350.6 379.8 L349.8 379.7 L349.0 379.5 Z M385.9 379.5 L386.8 372.5 L387.7 374.2 L388.6 377.8 L389.8 379.5 L388.6 381.6 L387.7 384.4 L386.8 384.8 Z M390.9 379.5 L391.8 372.5 L392.7 374.2 L393.6 377.8 L394.8 379.5 L393.6 381.6 L392.7 384.4 L391.8 384.8 Z M396.5 379.5 L397.4 373.9 L398.3 375.3 L399.2 378.1 L400.4 379.5 L399.2 381.2 L398.3 383.4 L397.4 383.7 Z M403.0 379.5 L403.9 373.2 L404.8 374.8 L405.7 377.9 L406.9 379.5 L405.7 381.4 L404.8 383.9 L403.9 384.2 Z M409.3 379.5 L410.2 373.2 L411.1 374.8 L412.0 377.9 L413.2 379.5 L412.0 381.4 L411.1 383.9 L410.2 384.2 Z M415.6 379.5 L416.5 374.6 L417.4 375.8 L418.3 378.3 L419.5 379.5 L418.3 381.0 L417.4 382.9 L416.5 383.2 Z M421.9 379.5 L422.8 377.4 L423.7 377.9 L424.6 379.0 L425.8 379.5 L424.6 380.1 L423.7 381.0 L422.8 381.1 Z M429.0 379.5 L429.9 373.2 L430.8 374.8 L431.7 377.9 L432.9 379.5 L431.7 381.4 L430.8 383.9 L429.9 384.2 Z M435.7 379.5 L436.6 375.3 L437.5 376.4 L438.4 378.4 L439.6 379.5 L438.4 380.8 L437.5 382.4 L436.6 382.6 Z M441.9 379.5 L442.8 373.9 L443.7 375.3 L444.6 378.1 L445.8 379.5 L444.6 381.2 L443.7 383.4 L442.8 383.7 Z M449.0 379.5 L449.9 373.9 L450.8 375.3 L451.7 378.1 L452.9 379.5 L451.7 381.2 L450.8 383.4 L449.9 383.7 Z M455.7 379.5 L456.6 373.2 L457.5 374.8 L458.4 377.9 L459.6 379.5 L458.4 381.4 L457.5 383.9 L456.6 384.2 Z M461.4 379.5 L462.3 373.9 L463.2 375.3 L464.1 378.1 L465.3 379.5 L464.1 381.2 L463.2 383.4 L462.3 383.7 Z M466.7 379.5 L467.6 376.0 L468.5 376.9 L469.4 378.6 L470.6 379.5 L469.4 380.6 L468.5 381.9 L467.6 382.1 Z M471.7 379.5 L472.6 376.0 L473.5 376.9 L474.4 378.6 L475.6 379.5 L474.4 380.6 L473.5 381.9 L472.6 382.1 Z M474.7 379.5 L475.6 375.3 L476.5 376.4 L477.4 378.4 L478.6 379.5 L477.4 380.8 L476.5 382.4 L475.6 382.6 Z M477.7 379.5 L478.6 376.7 L479.5 377.4 L480.4 378.8 L481.6 379.5 L480.4 380.3 L479.5 381.5 L478.6 381.6 Z M487.3 379.5 L488.2 374.6 L489.1 375.8 L490.0 378.3 L491.2 379.5 L490.0 381.0 L489.1 382.9 L488.2 383.2 Z M501.8 379.5 L502.7 373.9 L503.6 375.3 L504.5 378.1 L505.7 379.5 L504.5 381.2 L503.6 383.4 L502.7 383.7 Z M511.5 379.5 L512.4 375.3 L513.3 376.4 L514.2 378.4 L515.4 379.5 L514.2 380.8 L513.3 382.4 L512.4 382.6 Z M520.3 379.5 L521.2 377.4 L522.1 377.9 L523.0 379.0 L524.2 379.5 L523.0 380.1 L522.1 381.0 L521.2 381.1 Z M526.7 379.5 L527.6 378.4 L528.5 378.7 L529.4 379.2 L530.6 379.5 L529.4 379.8 L528.5 380.2 L527.6 380.3 Z" fill="#2a1d2c"/>
<path d="M628.0 379.5 L628.8 379.3 L629.6 379.1 L630.4 378.9 L631.2 378.8 L632.0 378.6 L632.8 378.3 L633.6 378.1 L634.4 377.7 L635.2 377.3 L636.0 377.4 L636.8 376.8 L637.7 376.6 L638.5 376.3 L639.3 376.6 L640.1 376.5 L640.9 376.3 L641.7 376.2 L642.5 376.0 L643.3 375.3 L644.1 374.7 L644.9 374.6 L645.7 375.0 L646.5 374.8 L647.3 374.6 L648.1 375.5 L648.9 374.8 L649.7 374.5 L650.5 374.6 L651.3 374.7 L652.1 375.0 L652.9 375.4 L653.7 374.6 L654.5 375.2 L655.3 374.6 L656.2 374.4 L657.0 375.1 L657.8 375.1 L658.6 374.4 L659.4 374.7 L660.2 375.4 L661.0 375.5 L661.8 375.4 L662.6 374.5 L663.4 374.6 L664.2 375.5 L665.0 374.6 L665.0 383.7 L664.2 382.9 L663.4 383.7 L662.6 383.8 L661.8 382.9 L661.0 382.9 L660.2 383.0 L659.4 383.6 L658.6 383.8 L657.8 383.2 L657.0 383.2 L656.2 383.8 L655.3 383.7 L654.5 383.1 L653.7 383.6 L652.9 383.0 L652.1 383.3 L651.3 383.6 L650.5 383.6 L649.7 383.8 L648.9 383.5 L648.1 382.9 L647.3 383.7 L646.5 383.5 L645.7 383.3 L644.9 383.7 L644.1 383.6 L643.3 383.1 L642.5 382.5 L641.7 382.3 L640.9 382.2 L640.1 382.0 L639.3 382.0 L638.5 382.2 L637.7 382.0 L636.8 381.8 L636.0 381.3 L635.2 381.4 L634.4 381.0 L633.6 380.7 L632.8 380.5 L632.0 380.3 L631.2 380.1 L630.4 380.0 L629.6 379.9 L628.8 379.7 L628.0 379.5 Z M646.7 379.5 L647.6 372.9 L648.5 374.5 L649.4 377.8 L650.6 379.5 L649.4 381.5 L648.5 384.1 L647.6 384.5 Z M650.7 379.5 L651.6 372.1 L652.5 374.0 L653.4 377.7 L654.6 379.5 L653.4 381.7 L652.5 384.6 L651.6 385.0 Z M655.7 379.5 L656.6 373.6 L657.5 375.1 L658.4 378.0 L659.6 379.5 L658.4 381.3 L657.5 383.6 L656.6 383.9 Z M659.7 379.5 L660.6 375.8 L661.5 376.7 L662.4 378.6 L663.6 379.5 L662.4 380.6 L661.5 382.1 L660.6 382.3 Z" fill="#2a1d2c"/>
<path d="M805.0 379.5 L805.8 378.9 L806.6 378.4 L807.4 377.7 L808.2 377.4 L809.1 377.0 L809.9 375.5 L810.7 375.2 L811.5 375.2 L812.3 374.7 L813.1 375.3 L813.9 374.8 L814.8 374.8 L815.6 375.6 L816.4 375.5 L817.2 375.5 L818.0 375.5 L818.0 382.9 L817.2 382.9 L816.4 382.9 L815.6 382.8 L814.8 383.5 L813.9 383.5 L813.1 383.1 L812.3 383.6 L811.5 383.2 L810.7 383.2 L809.9 382.9 L809.1 381.7 L808.2 381.3 L807.4 381.0 L806.6 380.5 L805.8 380.0 L805.0 379.5 Z M813.7 379.5 L814.6 376.0 L815.5 376.9 L816.4 378.6 L817.6 379.5 L816.4 380.6 L815.5 381.9 L814.6 382.1 Z M818.7 379.5 L819.6 373.9 L820.5 375.3 L821.4 378.1 L822.6 379.5 L821.4 381.2 L820.5 383.4 L819.6 383.7 Z M824.7 379.5 L825.6 373.2 L826.5 374.8 L827.4 377.9 L828.6 379.5 L827.4 381.4 L826.5 383.9 L825.6 384.2 Z M829.7 379.5 L830.6 374.6 L831.5 375.8 L832.4 378.3 L833.6 379.5 L832.4 381.0 L831.5 382.9 L830.6 383.2 Z M835.7 379.5 L836.6 375.3 L837.5 376.4 L838.4 378.4 L839.6 379.5 L838.4 380.8 L837.5 382.4 L836.6 382.6 Z M841.7 379.5 L842.6 373.9 L843.5 375.3 L844.4 378.1 L845.6 379.5 L844.4 381.2 L843.5 383.4 L842.6 383.7 Z M846.7 379.5 L847.6 375.3 L848.5 376.4 L849.4 378.4 L850.6 379.5 L849.4 380.8 L848.5 382.4 L847.6 382.6 Z M853.7 379.5 L854.6 373.2 L855.5 374.8 L856.4 377.9 L857.6 379.5 L856.4 381.4 L855.5 383.9 L854.6 384.2 Z M856.7 379.5 L857.6 374.6 L858.5 375.8 L859.4 378.3 L860.6 379.5 L859.4 381.0 L858.5 382.9 L857.6 383.2 Z" fill="#2a1d2c"/>
<path d="M872.0 379.5 L872.8 378.6 L873.6 377.7 L874.4 377.0 L875.2 375.3 L876.0 375.4 L876.8 375.3 L877.6 375.1 L878.4 374.7 L879.2 375.3 L880.0 374.7 L880.0 383.6 L879.2 383.1 L878.4 383.6 L877.6 383.2 L876.8 383.1 L876.0 383.0 L875.2 383.1 L874.4 381.7 L873.6 381.1 L872.8 380.2 L872.0 379.5 Z M866.7 379.5 L867.6 374.6 L868.5 375.8 L869.4 378.3 L870.6 379.5 L869.4 381.0 L868.5 382.9 L867.6 383.2 Z M874.7 379.5 L875.6 376.0 L876.5 376.9 L877.4 378.6 L878.6 379.5 L877.4 380.6 L876.5 381.9 L875.6 382.1 Z M880.7 379.5 L881.6 375.3 L882.5 376.4 L883.4 378.4 L884.6 379.5 L883.4 380.8 L882.5 382.4 L881.6 382.6 Z M886.7 379.5 L887.6 376.0 L888.5 376.9 L889.4 378.6 L890.6 379.5 L889.4 380.6 L888.5 381.9 L887.6 382.1 Z M892.7 379.5 L893.6 376.7 L894.5 377.4 L895.4 378.8 L896.6 379.5 L895.4 380.3 L894.5 381.5 L893.6 381.6 Z M898.7 379.5 L899.6 377.1 L900.5 377.7 L901.4 378.9 L902.6 379.5 L901.4 380.2 L900.5 381.2 L899.6 381.3 Z M904.7 379.5 L905.6 377.4 L906.5 377.9 L907.4 379.0 L908.6 379.5 L907.4 380.1 L906.5 381.0 L905.6 381.1 Z M910.7 379.5 L911.6 377.8 L912.5 378.2 L913.4 379.1 L914.6 379.5 L913.4 380.0 L912.5 380.7 L911.6 380.8 Z M916.7 379.5 L917.6 378.4 L918.5 378.7 L919.4 379.2 L920.6 379.5 L919.4 379.8 L918.5 380.2 L917.6 380.3 Z" fill="#2a1d2c"/>
<path d="M1353.0 379.5 L1353.8 377.6 L1354.6 375.7 L1355.4 375.8 L1356.2 375.3 L1357.0 375.6 L1357.0 382.8 L1356.2 383.1 L1355.4 382.6 L1354.6 382.7 L1353.8 381.1 L1353.0 379.5 Z M1356.7 379.5 L1357.6 373.2 L1358.5 374.8 L1359.4 377.9 L1360.6 379.5 L1359.4 381.4 L1358.5 383.9 L1357.6 384.2 Z M1359.7 379.5 L1360.6 375.3 L1361.5 376.4 L1362.4 378.4 L1363.6 379.5 L1362.4 380.8 L1361.5 382.4 L1360.6 382.6 Z" fill="#2a1d2c"/>
<path d="M349.0 415.5 L349.8 415.3 L350.6 415.1 L351.4 414.9 L352.2 414.6 L353.0 414.5 L353.8 414.3 L354.6 414.1 L355.4 413.8 L356.2 413.5 L357.0 413.7 L357.8 413.2 L358.7 413.2 L359.5 413.0 L360.3 412.4 L361.1 412.4 L361.9 412.2 L362.7 411.8 L363.5 411.4 L364.3 411.7 L365.1 411.3 L365.9 411.2 L366.7 411.2 L367.5 411.0 L368.3 411.3 L369.1 411.2 L369.9 411.2 L370.7 410.7 L371.5 411.0 L372.3 410.8 L373.1 410.7 L373.9 411.5 L374.7 411.1 L375.5 410.7 L376.3 410.8 L377.2 411.7 L378.0 411.7 L378.8 411.3 L379.6 411.7 L380.4 411.5 L381.2 411.7 L382.0 411.0 L382.8 410.9 L383.6 410.7 L384.4 411.6 L385.2 410.9 L386.0 411.0 L386.0 419.3 L385.2 419.4 L384.4 418.8 L383.6 419.6 L382.8 419.4 L382.0 419.3 L381.2 418.7 L380.4 418.9 L379.6 418.7 L378.8 419.1 L378.0 418.8 L377.2 418.8 L376.3 419.5 L375.5 419.6 L374.7 419.2 L373.9 418.9 L373.1 419.6 L372.3 419.5 L371.5 419.4 L370.7 419.6 L369.9 419.1 L369.1 419.2 L368.3 419.1 L367.5 419.3 L366.7 419.2 L365.9 419.2 L365.1 419.1 L364.3 418.8 L363.5 419.0 L362.7 418.7 L361.9 418.3 L361.1 418.1 L360.3 418.1 L359.5 417.6 L358.7 417.4 L357.8 417.5 L357.0 417.0 L356.2 417.2 L355.4 416.9 L354.6 416.7 L353.8 416.5 L353.0 416.4 L352.2 416.2 L351.4 416.0 L350.6 415.8 L349.8 415.7 L349.0 415.5 Z M385.9 415.5 L386.8 408.5 L387.7 410.2 L388.6 413.8 L389.8 415.5 L388.6 417.6 L387.7 420.4 L386.8 420.8 Z M390.9 415.5 L391.8 408.5 L392.7 410.2 L393.6 413.8 L394.8 415.5 L393.6 417.6 L392.7 420.4 L391.8 420.8 Z M396.5 415.5 L397.4 409.9 L398.3 411.3 L399.2 414.1 L400.4 415.5 L399.2 417.2 L398.3 419.4 L397.4 419.7 Z M403.0 415.5 L403.9 409.2 L404.8 410.8 L405.7 413.9 L406.9 415.5 L405.7 417.4 L404.8 419.9 L403.9 420.2 Z M409.3 415.5 L410.2 409.2 L411.1 410.8 L412.0 413.9 L413.2 415.5 L412.0 417.4 L411.1 419.9 L410.2 420.2 Z M415.6 415.5 L416.5 410.6 L417.4 411.8 L418.3 414.3 L419.5 415.5 L418.3 417.0 L417.4 418.9 L416.5 419.2 Z M421.9 415.5 L422.8 413.4 L423.7 413.9 L424.6 415.0 L425.8 415.5 L424.6 416.1 L423.7 417.0 L422.8 417.1 Z M429.0 415.5 L429.9 409.2 L430.8 410.8 L431.7 413.9 L432.9 415.5 L431.7 417.4 L430.8 419.9 L429.9 420.2 Z M435.7 415.5 L436.6 411.3 L437.5 412.4 L438.4 414.4 L439.6 415.5 L438.4 416.8 L437.5 418.4 L436.6 418.6 Z M441.9 415.5 L442.8 409.9 L443.7 411.3 L444.6 414.1 L445.8 415.5 L444.6 417.2 L443.7 419.4 L442.8 419.7 Z M449.0 415.5 L449.9 409.9 L450.8 411.3 L451.7 414.1 L452.9 415.5 L451.7 417.2 L450.8 419.4 L449.9 419.7 Z M455.7 415.5 L456.6 409.2 L457.5 410.8 L458.4 413.9 L459.6 415.5 L458.4 417.4 L457.5 419.9 L456.6 420.2 Z M461.4 415.5 L462.3 409.9 L463.2 411.3 L464.1 414.1 L465.3 415.5 L464.1 417.2 L463.2 419.4 L462.3 419.7 Z M466.7 415.5 L467.6 412.0 L468.5 412.9 L469.4 414.6 L470.6 415.5 L469.4 416.6 L468.5 417.9 L467.6 418.1 Z M471.7 415.5 L472.6 412.0 L473.5 412.9 L474.4 414.6 L475.6 415.5 L474.4 416.6 L473.5 417.9 L472.6 418.1 Z M474.7 415.5 L475.6 411.3 L476.5 412.4 L477.4 414.4 L478.6 415.5 L477.4 416.8 L476.5 418.4 L475.6 418.6 Z M477.7 415.5 L478.6 412.7 L479.5 413.4 L480.4 414.8 L481.6 415.5 L480.4 416.3 L479.5 417.5 L478.6 417.6 Z M487.3 415.5 L488.2 410.6 L489.1 411.8 L490.0 414.3 L491.2 415.5 L490.0 417.0 L489.1 418.9 L488.2 419.2 Z M501.8 415.5 L502.7 409.9 L503.6 411.3 L504.5 414.1 L505.7 415.5 L504.5 417.2 L503.6 419.4 L502.7 419.7 Z M511.5 415.5 L512.4 411.3 L513.3 412.4 L514.2 414.4 L515.4 415.5 L514.2 416.8 L513.3 418.4 L512.4 418.6 Z M520.3 415.5 L521.2 413.4 L522.1 413.9 L523.0 415.0 L524.2 415.5 L523.0 416.1 L522.1 417.0 L521.2 417.1 Z M526.7 415.5 L527.6 414.4 L528.5 414.7 L529.4 415.2 L530.6 415.5 L529.4 415.8 L528.5 416.2 L527.6 416.3 Z" fill="#2a1d2c"/>
<path d="M628.0 415.5 L628.8 415.3 L629.6 415.0 L630.4 414.9 L631.2 414.5 L632.0 414.5 L632.8 414.2 L633.6 413.8 L634.4 413.6 L635.2 413.7 L636.0 413.4 L636.8 413.1 L637.7 413.0 L638.5 412.9 L639.3 412.6 L640.1 412.1 L640.9 412.5 L641.7 411.8 L642.5 411.7 L643.3 412.0 L644.1 411.4 L644.9 410.8 L645.7 411.0 L646.5 411.6 L647.3 410.4 L648.1 410.6 L648.9 410.4 L649.7 411.5 L650.5 411.3 L651.3 411.6 L652.1 410.6 L652.9 411.3 L653.7 411.5 L654.5 411.1 L655.3 410.5 L656.2 410.6 L657.0 411.3 L657.8 411.4 L658.6 410.5 L659.4 410.9 L660.2 410.7 L661.0 411.5 L661.8 411.6 L662.6 410.8 L663.4 411.1 L664.2 411.5 L665.0 410.4 L665.0 419.8 L664.2 418.9 L663.4 419.2 L662.6 419.5 L661.8 418.8 L661.0 418.9 L660.2 419.5 L659.4 419.4 L658.6 419.8 L657.8 418.9 L657.0 419.1 L656.2 419.7 L655.3 419.8 L654.5 419.2 L653.7 418.9 L652.9 419.1 L652.1 419.6 L651.3 418.8 L650.5 419.1 L649.7 418.9 L648.9 419.8 L648.1 419.6 L647.3 419.9 L646.5 418.9 L645.7 419.3 L644.9 419.5 L644.1 419.0 L643.3 418.5 L642.5 418.7 L641.7 418.7 L640.9 418.0 L640.1 418.4 L639.3 417.9 L638.5 417.7 L637.7 417.6 L636.8 417.5 L636.0 417.3 L635.2 417.0 L634.4 417.1 L633.6 417.0 L632.8 416.6 L632.0 416.4 L631.2 416.3 L630.4 416.0 L629.6 415.9 L628.8 415.7 L628.0 415.5 Z M646.7 415.5 L647.6 408.9 L648.5 410.5 L649.4 413.8 L650.6 415.5 L649.4 417.5 L648.5 420.1 L647.6 420.5 Z M650.7 415.5 L651.6 408.1 L652.5 410.0 L653.4 413.7 L654.6 415.5 L653.4 417.7 L652.5 420.6 L651.6 421.0 Z M655.7 415.5 L656.6 409.6 L657.5 411.1 L658.4 414.0 L659.6 415.5 L658.4 417.3 L657.5 419.6 L656.6 419.9 Z M659.7 415.5 L660.6 411.8 L661.5 412.7 L662.4 414.6 L663.6 415.5 L662.4 416.6 L661.5 418.1 L660.6 418.3 Z" fill="#2a1d2c"/>
<path d="M805.0 415.5 L805.8 414.9 L806.6 414.5 L807.4 413.6 L808.2 413.4 L809.1 412.2 L809.9 412.0 L810.7 411.6 L811.5 411.1 L812.3 410.7 L813.1 411.5 L813.9 411.7 L814.8 411.2 L815.6 411.5 L816.4 411.7 L817.2 411.6 L818.0 411.8 L818.0 418.7 L817.2 418.8 L816.4 418.7 L815.6 418.9 L814.8 419.2 L813.9 418.8 L813.1 418.9 L812.3 419.6 L811.5 419.2 L810.7 418.8 L809.9 418.5 L809.1 418.3 L808.2 417.3 L807.4 417.2 L806.6 416.4 L805.8 416.0 L805.0 415.5 Z M813.7 415.5 L814.6 412.0 L815.5 412.9 L816.4 414.6 L817.6 415.5 L816.4 416.6 L815.5 417.9 L814.6 418.1 Z M818.7 415.5 L819.6 409.9 L820.5 411.3 L821.4 414.1 L822.6 415.5 L821.4 417.2 L820.5 419.4 L819.6 419.7 Z M824.7 415.5 L825.6 409.2 L826.5 410.8 L827.4 413.9 L828.6 415.5 L827.4 417.4 L826.5 419.9 L825.6 420.2 Z M829.7 415.5 L830.6 410.6 L831.5 411.8 L832.4 414.3 L833.6 415.5 L832.4 417.0 L831.5 418.9 L830.6 419.2 Z M835.7 415.5 L836.6 411.3 L837.5 412.4 L838.4 414.4 L839.6 415.5 L838.4 416.8 L837.5 418.4 L836.6 418.6 Z M841.7 415.5 L842.6 409.9 L843.5 411.3 L844.4 414.1 L845.6 415.5 L844.4 417.2 L843.5 419.4 L842.6 419.7 Z M846.7 415.5 L847.6 411.3 L848.5 412.4 L849.4 414.4 L850.6 415.5 L849.4 416.8 L848.5 418.4 L847.6 418.6 Z M853.7 415.5 L854.6 409.2 L855.5 410.8 L856.4 413.9 L857.6 415.5 L856.4 417.4 L855.5 419.9 L854.6 420.2 Z M856.7 415.5 L857.6 410.6 L858.5 411.8 L859.4 414.3 L860.6 415.5 L859.4 417.0 L858.5 418.9 L857.6 419.2 Z" fill="#2a1d2c"/>
<path d="M872.0 415.5 L872.8 414.6 L873.6 413.7 L874.4 412.5 L875.2 412.0 L876.0 411.2 L876.8 411.6 L877.6 411.4 L878.4 411.8 L879.2 411.5 L880.0 411.8 L880.0 418.6 L879.2 418.9 L878.4 418.6 L877.6 419.0 L876.8 418.8 L876.0 419.1 L875.2 418.5 L874.4 418.1 L873.6 417.0 L872.8 416.3 L872.0 415.5 Z M866.7 415.5 L867.6 410.6 L868.5 411.8 L869.4 414.3 L870.6 415.5 L869.4 417.0 L868.5 418.9 L867.6 419.2 Z M874.7 415.5 L875.6 412.0 L876.5 412.9 L877.4 414.6 L878.6 415.5 L877.4 416.6 L876.5 417.9 L875.6 418.1 Z M880.7 415.5 L881.6 411.3 L882.5 412.4 L883.4 414.4 L884.6 415.5 L883.4 416.8 L882.5 418.4 L881.6 418.6 Z M886.7 415.5 L887.6 412.0 L888.5 412.9 L889.4 414.6 L890.6 415.5 L889.4 416.6 L888.5 417.9 L887.6 418.1 Z M892.7 415.5 L893.6 412.7 L894.5 413.4 L895.4 414.8 L896.6 415.5 L895.4 416.3 L894.5 417.5 L893.6 417.6 Z M898.7 415.5 L899.6 413.1 L900.5 413.7 L901.4 414.9 L902.6 415.5 L901.4 416.2 L900.5 417.2 L899.6 417.3 Z M904.7 415.5 L905.6 413.4 L906.5 413.9 L907.4 415.0 L908.6 415.5 L907.4 416.1 L906.5 417.0 L905.6 417.1 Z M910.7 415.5 L911.6 413.8 L912.5 414.2 L913.4 415.1 L914.6 415.5 L913.4 416.0 L912.5 416.7 L911.6 416.8 Z M916.7 415.5 L917.6 414.4 L918.5 414.7 L919.4 415.2 L920.6 415.5 L919.4 415.8 L918.5 416.2 L917.6 416.3 Z" fill="#2a1d2c"/>
<path d="M1353.0 415.5 L1353.8 413.6 L1354.6 412.1 L1355.4 411.2 L1356.2 410.7 L1357.0 411.7 L1357.0 418.7 L1356.2 419.6 L1355.4 419.1 L1354.6 418.4 L1353.8 417.1 L1353.0 415.5 Z M1356.7 415.5 L1357.6 409.2 L1358.5 410.8 L1359.4 413.9 L1360.6 415.5 L1359.4 417.4 L1358.5 419.9 L1357.6 420.2 Z M1359.7 415.5 L1360.6 411.3 L1361.5 412.4 L1362.4 414.4 L1363.6 415.5 L1362.4 416.8 L1361.5 418.4 L1360.6 418.6 Z" fill="#2a1d2c"/>
<path d="M349.0 449.5 L349.8 449.3 L350.6 449.1 L351.4 448.8 L352.2 448.7 L353.0 448.5 L353.8 448.2 L354.6 447.9 L355.4 447.9 L356.2 447.5 L357.0 447.3 L357.8 447.2 L358.7 447.1 L359.5 447.0 L360.3 447.0 L361.1 446.7 L361.9 446.6 L362.7 445.8 L363.5 446.1 L364.3 446.0 L365.1 445.9 L365.9 444.8 L366.7 444.8 L367.5 445.0 L368.3 445.5 L369.1 445.5 L369.9 445.5 L370.7 445.3 L371.5 445.6 L372.3 445.3 L373.1 445.5 L373.9 444.6 L374.7 444.6 L375.5 445.2 L376.3 445.5 L377.2 444.6 L378.0 445.4 L378.8 445.4 L379.6 445.8 L380.4 445.4 L381.2 445.2 L382.0 445.2 L382.8 445.6 L383.6 445.2 L384.4 445.8 L385.2 445.5 L386.0 445.7 L386.0 452.7 L385.2 452.9 L384.4 452.6 L383.6 453.1 L382.8 452.8 L382.0 453.1 L381.2 453.1 L380.4 453.0 L379.6 452.6 L378.8 453.0 L378.0 452.9 L377.2 453.6 L376.3 452.9 L375.5 453.2 L374.7 453.6 L373.9 453.6 L373.1 452.9 L372.3 453.1 L371.5 452.8 L370.7 453.1 L369.9 452.9 L369.1 452.9 L368.3 452.9 L367.5 453.3 L366.7 453.5 L365.9 453.5 L365.1 452.6 L364.3 452.5 L363.5 452.4 L362.7 452.7 L361.9 451.9 L361.1 451.8 L360.3 451.6 L359.5 451.7 L358.7 451.5 L357.8 451.5 L357.0 451.3 L356.2 451.2 L355.4 450.8 L354.6 450.9 L353.8 450.6 L353.0 450.4 L352.2 450.2 L351.4 450.1 L350.6 449.8 L349.8 449.7 L349.0 449.5 Z M385.9 449.5 L386.8 442.5 L387.7 444.2 L388.6 447.8 L389.8 449.5 L388.6 451.6 L387.7 454.4 L386.8 454.8 Z M390.9 449.5 L391.8 442.5 L392.7 444.2 L393.6 447.8 L394.8 449.5 L393.6 451.6 L392.7 454.4 L391.8 454.8 Z M396.5 449.5 L397.4 443.9 L398.3 445.3 L399.2 448.1 L400.4 449.5 L399.2 451.2 L398.3 453.4 L397.4 453.7 Z M403.0 449.5 L403.9 443.2 L404.8 444.8 L405.7 447.9 L406.9 449.5 L405.7 451.4 L404.8 453.9 L403.9 454.2 Z M409.3 449.5 L410.2 443.2 L411.1 444.8 L412.0 447.9 L413.2 449.5 L412.0 451.4 L411.1 453.9 L410.2 454.2 Z M415.6 449.5 L416.5 444.6 L417.4 445.8 L418.3 448.3 L419.5 449.5 L418.3 451.0 L417.4 452.9 L416.5 453.2 Z M421.9 449.5 L422.8 447.4 L423.7 447.9 L424.6 449.0 L425.8 449.5 L424.6 450.1 L423.7 451.0 L422.8 451.1 Z M429.0 449.5 L429.9 443.2 L430.8 444.8 L431.7 447.9 L432.9 449.5 L431.7 451.4 L430.8 453.9 L429.9 454.2 Z M435.7 449.5 L436.6 445.3 L437.5 446.4 L438.4 448.4 L439.6 449.5 L438.4 450.8 L437.5 452.4 L436.6 452.6 Z M441.9 449.5 L442.8 443.9 L443.7 445.3 L444.6 448.1 L445.8 449.5 L444.6 451.2 L443.7 453.4 L442.8 453.7 Z M449.0 449.5 L449.9 443.9 L450.8 445.3 L451.7 448.1 L452.9 449.5 L451.7 451.2 L450.8 453.4 L449.9 453.7 Z M455.7 449.5 L456.6 443.2 L457.5 444.8 L458.4 447.9 L459.6 449.5 L458.4 451.4 L457.5 453.9 L456.6 454.2 Z M461.4 449.5 L462.3 443.9 L463.2 445.3 L464.1 448.1 L465.3 449.5 L464.1 451.2 L463.2 453.4 L462.3 453.7 Z M466.7 449.5 L467.6 446.0 L468.5 446.9 L469.4 448.6 L470.6 449.5 L469.4 450.6 L468.5 451.9 L467.6 452.1 Z M471.7 449.5 L472.6 446.0 L473.5 446.9 L474.4 448.6 L475.6 449.5 L474.4 450.6 L473.5 451.9 L472.6 452.1 Z M474.7 449.5 L475.6 445.3 L476.5 446.4 L477.4 448.4 L478.6 449.5 L477.4 450.8 L476.5 452.4 L475.6 452.6 Z M477.7 449.5 L478.6 446.7 L479.5 447.4 L480.4 448.8 L481.6 449.5 L480.4 450.3 L479.5 451.5 L478.6 451.6 Z M487.3 449.5 L488.2 444.6 L489.1 445.8 L490.0 448.3 L491.2 449.5 L490.0 451.0 L489.1 452.9 L488.2 453.2 Z M501.8 449.5 L502.7 443.9 L503.6 445.3 L504.5 448.1 L505.7 449.5 L504.5 451.2 L503.6 453.4 L502.7 453.7 Z M511.5 449.5 L512.4 445.3 L513.3 446.4 L514.2 448.4 L515.4 449.5 L514.2 450.8 L513.3 452.4 L512.4 452.6 Z M520.3 449.5 L521.2 447.4 L522.1 447.9 L523.0 449.0 L524.2 449.5 L523.0 450.1 L522.1 451.0 L521.2 451.1 Z M526.7 449.5 L527.6 448.4 L528.5 448.7 L529.4 449.2 L530.6 449.5 L529.4 449.8 L528.5 450.2 L527.6 450.3 Z" fill="#2a1d2c"/>
<path d="M628.0 449.5 L628.8 449.3 L629.6 449.1 L630.4 448.9 L631.2 448.7 L632.0 448.4 L632.8 448.2 L633.6 447.9 L634.4 447.7 L635.2 447.4 L636.0 447.1 L636.8 447.2 L637.7 447.0 L638.5 446.3 L639.3 446.8 L640.1 446.1 L640.9 445.9 L641.7 446.3 L642.5 445.3 L643.3 445.0 L644.1 445.0 L644.9 444.7 L645.7 444.6 L646.5 445.5 L647.3 445.0 L648.1 445.0 L648.9 444.6 L649.7 444.6 L650.5 444.6 L651.3 444.9 L652.1 444.5 L652.9 444.8 L653.7 444.7 L654.5 445.3 L655.3 445.6 L656.2 445.5 L657.0 445.2 L657.8 445.5 L658.6 444.6 L659.4 444.9 L660.2 444.8 L661.0 444.8 L661.8 444.8 L662.6 445.0 L663.4 445.6 L664.2 444.6 L665.0 444.7 L665.0 453.6 L664.2 453.7 L663.4 452.8 L662.6 453.3 L661.8 453.5 L661.0 453.5 L660.2 453.5 L659.4 453.4 L658.6 453.7 L657.8 452.9 L657.0 453.2 L656.2 452.9 L655.3 452.8 L654.5 453.0 L653.7 453.5 L652.9 453.5 L652.1 453.8 L651.3 453.4 L650.5 453.7 L649.7 453.7 L648.9 453.7 L648.1 453.3 L647.3 453.4 L646.5 452.9 L645.7 453.7 L644.9 453.6 L644.1 453.3 L643.3 453.4 L642.5 453.1 L641.7 452.2 L640.9 452.5 L640.1 452.4 L639.3 451.8 L638.5 452.2 L637.7 451.6 L636.8 451.4 L636.0 451.5 L635.2 451.2 L634.4 451.0 L633.6 450.9 L632.8 450.6 L632.0 450.4 L631.2 450.2 L630.4 450.0 L629.6 449.8 L628.8 449.7 L628.0 449.5 Z M646.7 449.5 L647.6 442.9 L648.5 444.5 L649.4 447.8 L650.6 449.5 L649.4 451.5 L648.5 454.1 L647.6 454.5 Z M650.7 449.5 L651.6 442.1 L652.5 444.0 L653.4 447.7 L654.6 449.5 L653.4 451.7 L652.5 454.6 L651.6 455.0 Z M655.7 449.5 L656.6 443.6 L657.5 445.1 L658.4 448.0 L659.6 449.5 L658.4 451.3 L657.5 453.6 L656.6 453.9 Z M659.7 449.5 L660.6 445.8 L661.5 446.7 L662.4 448.6 L663.6 449.5 L662.4 450.6 L661.5 452.1 L660.6 452.3 Z" fill="#2a1d2c"/>
<path d="M805.0 449.5 L805.8 448.9 L806.6 448.3 L807.4 448.0 L808.2 447.0 L809.1 446.8 L809.9 446.4 L810.7 445.6 L811.5 444.9 L812.3 445.6 L813.1 444.9 L813.9 444.6 L814.8 445.2 L815.6 445.4 L816.4 445.2 L817.2 445.0 L818.0 444.9 L818.0 453.4 L817.2 453.3 L816.4 453.1 L815.6 453.0 L814.8 453.1 L813.9 453.6 L813.1 453.4 L812.3 452.8 L811.5 453.4 L810.7 452.8 L809.9 452.1 L809.1 451.8 L808.2 451.6 L807.4 450.8 L806.6 450.5 L805.8 450.0 L805.0 449.5 Z M813.7 449.5 L814.6 446.0 L815.5 446.9 L816.4 448.6 L817.6 449.5 L816.4 450.6 L815.5 451.9 L814.6 452.1 Z M818.7 449.5 L819.6 443.9 L820.5 445.3 L821.4 448.1 L822.6 449.5 L821.4 451.2 L820.5 453.4 L819.6 453.7 Z M824.7 449.5 L825.6 443.2 L826.5 444.8 L827.4 447.9 L828.6 449.5 L827.4 451.4 L826.5 453.9 L825.6 454.2 Z M829.7 449.5 L830.6 444.6 L831.5 445.8 L832.4 448.3 L833.6 449.5 L832.4 451.0 L831.5 452.9 L830.6 453.2 Z M835.7 449.5 L836.6 445.3 L837.5 446.4 L838.4 448.4 L839.6 449.5 L838.4 450.8 L837.5 452.4 L836.6 452.6 Z M841.7 449.5 L842.6 443.9 L843.5 445.3 L844.4 448.1 L845.6 449.5 L844.4 451.2 L843.5 453.4 L842.6 453.7 Z M846.7 449.5 L847.6 445.3 L848.5 446.4 L849.4 448.4 L850.6 449.5 L849.4 450.8 L848.5 452.4 L847.6 452.6 Z M853.7 449.5 L854.6 443.2 L855.5 444.8 L856.4 447.9 L857.6 449.5 L856.4 451.4 L855.5 453.9 L854.6 454.2 Z M856.7 449.5 L857.6 444.6 L858.5 445.8 L859.4 448.3 L860.6 449.5 L859.4 451.0 L858.5 452.9 L857.6 453.2 Z" fill="#2a1d2c"/>
<path d="M872.0 449.5 L872.8 448.5 L873.6 447.8 L874.4 447.0 L875.2 446.0 L876.0 444.9 L876.8 445.5 L877.6 445.1 L878.4 445.8 L879.2 445.8 L880.0 445.5 L880.0 452.9 L879.2 452.7 L878.4 452.6 L877.6 453.2 L876.8 452.9 L876.0 453.4 L875.2 452.5 L874.4 451.7 L873.6 450.9 L872.8 450.3 L872.0 449.5 Z M866.7 449.5 L867.6 444.6 L868.5 445.8 L869.4 448.3 L870.6 449.5 L869.4 451.0 L868.5 452.9 L867.6 453.2 Z M874.7 449.5 L875.6 446.0 L876.5 446.9 L877.4 448.6 L878.6 449.5 L877.4 450.6 L876.5 451.9 L875.6 452.1 Z M880.7 449.5 L881.6 445.3 L882.5 446.4 L883.4 448.4 L884.6 449.5 L883.4 450.8 L882.5 452.4 L881.6 452.6 Z M886.7 449.5 L887.6 446.0 L888.5 446.9 L889.4 448.6 L890.6 449.5 L889.4 450.6 L888.5 451.9 L887.6 452.1 Z M892.7 449.5 L893.6 446.7 L894.5 447.4 L895.4 448.8 L896.6 449.5 L895.4 450.3 L894.5 451.5 L893.6 451.6 Z M898.7 449.5 L899.6 447.1 L900.5 447.7 L901.4 448.9 L902.6 449.5 L901.4 450.2 L900.5 451.2 L899.6 451.3 Z M904.7 449.5 L905.6 447.4 L906.5 447.9 L907.4 449.0 L908.6 449.5 L907.4 450.1 L906.5 451.0 L905.6 451.1 Z M910.7 449.5 L911.6 447.8 L912.5 448.2 L913.4 449.1 L914.6 449.5 L913.4 450.0 L912.5 450.7 L911.6 450.8 Z M916.7 449.5 L917.6 448.4 L918.5 448.7 L919.4 449.2 L920.6 449.5 L919.4 449.8 L918.5 450.2 L917.6 450.3 Z" fill="#2a1d2c"/>
<path d="M1353.0 449.5 L1353.8 447.5 L1354.6 445.5 L1355.4 445.5 L1356.2 445.2 L1357.0 445.3 L1357.0 453.1 L1356.2 453.2 L1355.4 452.9 L1354.6 452.9 L1353.8 451.2 L1353.0 449.5 Z M1356.7 449.5 L1357.6 443.2 L1358.5 444.8 L1359.4 447.9 L1360.6 449.5 L1359.4 451.4 L1358.5 453.9 L1357.6 454.2 Z M1359.7 449.5 L1360.6 445.3 L1361.5 446.4 L1362.4 448.4 L1363.6 449.5 L1362.4 450.8 L1361.5 452.4 L1360.6 452.6 Z" fill="#2a1d2c"/>
<path d="M349.0 476.5 L349.8 476.4 L350.6 476.2 L351.4 476.2 L352.2 476.0 L353.0 475.8 L353.8 475.9 L354.6 475.7 L355.4 475.5 L356.2 475.3 L357.0 475.3 L357.8 475.3 L358.7 475.2 L359.5 474.8 L360.3 475.0 L361.1 474.7 L361.9 474.8 L362.7 474.5 L363.5 474.1 L364.3 474.5 L365.1 473.9 L365.9 474.0 L366.7 473.8 L367.5 473.9 L368.3 474.2 L369.1 473.8 L369.9 474.1 L370.7 474.4 L371.5 474.4 L372.3 474.1 L373.1 474.1 L373.9 474.2 L374.7 474.3 L375.5 474.2 L376.3 474.2 L377.2 473.8 L378.0 474.4 L378.8 473.9 L379.6 473.8 L380.4 474.3 L381.2 473.8 L382.0 473.9 L382.8 473.8 L383.6 474.2 L384.4 474.1 L385.2 474.1 L386.0 473.7 L386.0 478.9 L385.2 478.5 L384.4 478.5 L383.6 478.5 L382.8 478.8 L382.0 478.7 L381.2 478.8 L380.4 478.4 L379.6 478.8 L378.8 478.7 L378.0 478.3 L377.2 478.8 L376.3 478.5 L375.5 478.5 L374.7 478.4 L373.9 478.5 L373.1 478.6 L372.3 478.6 L371.5 478.3 L370.7 478.3 L369.9 478.6 L369.1 478.8 L368.3 478.4 L367.5 478.7 L366.7 478.8 L365.9 478.6 L365.1 478.7 L364.3 478.2 L363.5 478.5 L362.7 478.2 L361.9 477.9 L361.1 478.0 L360.3 477.8 L359.5 478.0 L358.7 477.6 L357.8 477.5 L357.0 477.5 L356.2 477.5 L355.4 477.4 L354.6 477.2 L353.8 477.0 L353.0 477.1 L352.2 477.0 L351.4 476.8 L350.6 476.7 L349.8 476.6 L349.0 476.5 Z M385.9 476.5 L386.8 472.5 L387.7 473.5 L388.6 475.5 L389.8 476.5 L388.6 477.7 L387.7 479.3 L386.8 479.5 Z M390.9 476.5 L391.8 472.5 L392.7 473.5 L393.6 475.5 L394.8 476.5 L393.6 477.7 L392.7 479.3 L391.8 479.5 Z M396.5 476.5 L397.4 473.3 L398.3 474.1 L399.2 475.7 L400.4 476.5 L399.2 477.5 L398.3 478.7 L397.4 478.9 Z M403.0 476.5 L403.9 472.9 L404.8 473.8 L405.7 475.6 L406.9 476.5 L405.7 477.6 L404.8 479.0 L403.9 479.2 Z M409.3 476.5 L410.2 472.9 L411.1 473.8 L412.0 475.6 L413.2 476.5 L412.0 477.6 L411.1 479.0 L410.2 479.2 Z M415.6 476.5 L416.5 473.7 L417.4 474.4 L418.3 475.8 L419.5 476.5 L418.3 477.3 L417.4 478.5 L416.5 478.6 Z M421.9 476.5 L422.8 475.3 L423.7 475.6 L424.6 476.2 L425.8 476.5 L424.6 476.9 L423.7 477.3 L422.8 477.4 Z M429.0 476.5 L429.9 472.9 L430.8 473.8 L431.7 475.6 L432.9 476.5 L431.7 477.6 L430.8 479.0 L429.9 479.2 Z M435.7 476.5 L436.6 474.1 L437.5 474.7 L438.4 475.9 L439.6 476.5 L438.4 477.2 L437.5 478.2 L436.6 478.3 Z M441.9 476.5 L442.8 473.3 L443.7 474.1 L444.6 475.7 L445.8 476.5 L444.6 477.5 L443.7 478.7 L442.8 478.9 Z M449.0 476.5 L449.9 473.3 L450.8 474.1 L451.7 475.7 L452.9 476.5 L451.7 477.5 L450.8 478.7 L449.9 478.9 Z M455.7 476.5 L456.6 472.9 L457.5 473.8 L458.4 475.6 L459.6 476.5 L458.4 477.6 L457.5 479.0 L456.6 479.2 Z M461.4 476.5 L462.3 473.3 L463.2 474.1 L464.1 475.7 L465.3 476.5 L464.1 477.5 L463.2 478.7 L462.3 478.9 Z M466.7 476.5 L467.6 474.5 L468.5 475.0 L469.4 476.0 L470.6 476.5 L469.4 477.1 L468.5 477.9 L467.6 478.0 Z M471.7 476.5 L472.6 474.5 L473.5 475.0 L474.4 476.0 L475.6 476.5 L474.4 477.1 L473.5 477.9 L472.6 478.0 Z M474.7 476.5 L475.6 474.1 L476.5 474.7 L477.4 475.9 L478.6 476.5 L477.4 477.2 L476.5 478.2 L475.6 478.3 Z M477.7 476.5 L478.6 474.9 L479.5 475.3 L480.4 476.1 L481.6 476.5 L480.4 477.0 L479.5 477.6 L478.6 477.7 Z M487.3 476.5 L488.2 473.7 L489.1 474.4 L490.0 475.8 L491.2 476.5 L490.0 477.3 L489.1 478.5 L488.2 478.6 Z M501.8 476.5 L502.7 473.3 L503.6 474.1 L504.5 475.7 L505.7 476.5 L504.5 477.5 L503.6 478.7 L502.7 478.9 Z M511.5 476.5 L512.4 474.1 L513.3 474.7 L514.2 475.9 L515.4 476.5 L514.2 477.2 L513.3 478.2 L512.4 478.3 Z M520.3 476.5 L521.2 475.3 L522.1 475.6 L523.0 476.2 L524.2 476.5 L523.0 476.9 L522.1 477.3 L521.2 477.4 Z M526.7 476.5 L527.6 475.9 L528.5 476.1 L529.4 476.4 L530.6 476.5 L529.4 476.7 L528.5 476.9 L527.6 476.9 Z" fill="#2a1d2c"/>
<path d="M628.0 476.5 L628.8 476.4 L629.6 476.3 L630.4 476.2 L631.2 476.1 L632.0 476.0 L632.8 475.7 L633.6 475.7 L634.4 475.4 L635.2 475.5 L636.0 475.4 L636.8 475.1 L637.7 475.2 L638.5 475.0 L639.3 474.6 L640.1 474.5 L640.9 474.4 L641.7 474.3 L642.5 474.0 L643.3 473.9 L644.1 474.0 L644.9 473.8 L645.7 474.3 L646.5 473.8 L647.3 474.0 L648.1 473.7 L648.9 473.8 L649.7 474.1 L650.5 474.3 L651.3 473.6 L652.1 474.2 L652.9 473.9 L653.7 474.0 L654.5 474.1 L655.3 473.8 L656.2 473.6 L657.0 474.1 L657.8 473.8 L658.6 474.1 L659.4 473.9 L660.2 474.0 L661.0 474.2 L661.8 474.2 L662.6 474.1 L663.4 473.6 L664.2 473.9 L665.0 474.1 L665.0 478.5 L664.2 478.7 L663.4 478.9 L662.6 478.5 L661.8 478.5 L661.0 478.5 L660.2 478.6 L659.4 478.7 L658.6 478.6 L657.8 478.8 L657.0 478.5 L656.2 479.0 L655.3 478.8 L654.5 478.6 L653.7 478.6 L652.9 478.7 L652.1 478.5 L651.3 479.0 L650.5 478.4 L649.7 478.6 L648.9 478.8 L648.1 478.8 L647.3 478.7 L646.5 478.8 L645.7 478.4 L644.9 478.8 L644.1 478.6 L643.3 478.7 L642.5 478.6 L641.7 478.3 L640.9 478.3 L640.1 478.2 L639.3 478.2 L638.5 477.8 L637.7 477.6 L636.8 477.7 L636.0 477.5 L635.2 477.4 L634.4 477.4 L633.6 477.2 L632.8 477.2 L632.0 477.0 L631.2 476.9 L630.4 476.8 L629.6 476.7 L628.8 476.6 L628.0 476.5 Z M646.7 476.5 L647.6 472.7 L648.5 473.7 L649.4 475.6 L650.6 476.5 L649.4 477.6 L648.5 479.1 L647.6 479.3 Z M650.7 476.5 L651.6 472.3 L652.5 473.4 L653.4 475.4 L654.6 476.5 L653.4 477.8 L652.5 479.4 L651.6 479.6 Z M655.7 476.5 L656.6 473.1 L657.5 474.0 L658.4 475.7 L659.6 476.5 L658.4 477.5 L657.5 478.9 L656.6 479.0 Z M659.7 476.5 L660.6 474.4 L661.5 474.9 L662.4 476.0 L663.6 476.5 L662.4 477.1 L661.5 478.0 L660.6 478.1 Z" fill="#2a1d2c"/>
<path d="M805.0 476.5 L805.8 476.1 L806.6 475.8 L807.4 475.6 L808.2 475.3 L809.1 475.0 L809.9 474.6 L810.7 474.4 L811.5 474.2 L812.3 474.2 L813.1 474.0 L813.9 473.8 L814.8 473.9 L815.6 474.1 L816.4 474.1 L817.2 474.0 L818.0 474.1 L818.0 478.5 L817.2 478.6 L816.4 478.5 L815.6 478.5 L814.8 478.7 L813.9 478.8 L813.1 478.6 L812.3 478.4 L811.5 478.4 L810.7 478.3 L809.9 478.1 L809.1 477.8 L808.2 477.5 L807.4 477.3 L806.6 477.1 L805.8 476.8 L805.0 476.5 Z M813.7 476.5 L814.6 474.5 L815.5 475.0 L816.4 476.0 L817.6 476.5 L816.4 477.1 L815.5 477.9 L814.6 478.0 Z M818.7 476.5 L819.6 473.3 L820.5 474.1 L821.4 475.7 L822.6 476.5 L821.4 477.5 L820.5 478.7 L819.6 478.9 Z M824.7 476.5 L825.6 472.9 L826.5 473.8 L827.4 475.6 L828.6 476.5 L827.4 477.6 L826.5 479.0 L825.6 479.2 Z M829.7 476.5 L830.6 473.7 L831.5 474.4 L832.4 475.8 L833.6 476.5 L832.4 477.3 L831.5 478.5 L830.6 478.6 Z M835.7 476.5 L836.6 474.1 L837.5 474.7 L838.4 475.9 L839.6 476.5 L838.4 477.2 L837.5 478.2 L836.6 478.3 Z M841.7 476.5 L842.6 473.3 L843.5 474.1 L844.4 475.7 L845.6 476.5 L844.4 477.5 L843.5 478.7 L842.6 478.9 Z M846.7 476.5 L847.6 474.1 L848.5 474.7 L849.4 475.9 L850.6 476.5 L849.4 477.2 L848.5 478.2 L847.6 478.3 Z M853.7 476.5 L854.6 472.9 L855.5 473.8 L856.4 475.6 L857.6 476.5 L856.4 477.6 L855.5 479.0 L854.6 479.2 Z M856.7 476.5 L857.6 473.7 L858.5 474.4 L859.4 475.8 L860.6 476.5 L859.4 477.3 L858.5 478.5 L857.6 478.6 Z" fill="#2a1d2c"/>
<path d="M872.0 476.5 L872.8 476.0 L873.6 475.5 L874.4 474.7 L875.2 474.6 L876.0 474.0 L876.8 474.0 L877.6 473.8 L878.4 474.2 L879.2 474.2 L880.0 474.2 L880.0 478.4 L879.2 478.4 L878.4 478.4 L877.6 478.8 L876.8 478.7 L876.0 478.6 L875.2 478.1 L874.4 478.1 L873.6 477.4 L872.8 476.9 L872.0 476.5 Z M866.7 476.5 L867.6 473.7 L868.5 474.4 L869.4 475.8 L870.6 476.5 L869.4 477.3 L868.5 478.5 L867.6 478.6 Z M874.7 476.5 L875.6 474.5 L876.5 475.0 L877.4 476.0 L878.6 476.5 L877.4 477.1 L876.5 477.9 L875.6 478.0 Z M880.7 476.5 L881.6 474.1 L882.5 474.7 L883.4 475.9 L884.6 476.5 L883.4 477.2 L882.5 478.2 L881.6 478.3 Z M886.7 476.5 L887.6 474.5 L888.5 475.0 L889.4 476.0 L890.6 476.5 L889.4 477.1 L888.5 477.9 L887.6 478.0 Z M892.7 476.5 L893.6 474.9 L894.5 475.3 L895.4 476.1 L896.6 476.5 L895.4 477.0 L894.5 477.6 L893.6 477.7 Z M898.7 476.5 L899.6 475.1 L900.5 475.4 L901.4 476.1 L902.6 476.5 L901.4 476.9 L900.5 477.5 L899.6 477.6 Z M904.7 476.5 L905.6 475.3 L906.5 475.6 L907.4 476.2 L908.6 476.5 L907.4 476.9 L906.5 477.3 L905.6 477.4 Z M910.7 476.5 L911.6 475.5 L912.5 475.8 L913.4 476.2 L914.6 476.5 L913.4 476.8 L912.5 477.2 L911.6 477.2 Z M916.7 476.5 L917.6 475.9 L918.5 476.1 L919.4 476.4 L920.6 476.5 L919.4 476.7 L918.5 476.9 L917.6 476.9 Z" fill="#2a1d2c"/>
<path d="M1353.0 476.5 L1353.8 475.4 L1354.6 474.1 L1355.4 473.8 L1356.2 473.8 L1357.0 474.4 L1357.0 478.3 L1356.2 478.8 L1355.4 478.8 L1354.6 478.6 L1353.8 477.4 L1353.0 476.5 Z M1356.7 476.5 L1357.6 472.9 L1358.5 473.8 L1359.4 475.6 L1360.6 476.5 L1359.4 477.6 L1358.5 479.0 L1357.6 479.2 Z M1359.7 476.5 L1360.6 474.1 L1361.5 474.7 L1362.4 475.9 L1363.6 476.5 L1362.4 477.2 L1361.5 478.2 L1360.6 478.3 Z" fill="#2a1d2c"/>
<path d="M349.0 492.5 L349.8 492.4 L350.6 492.3 L351.4 492.2 L352.2 492.1 L353.0 492.1 L353.8 491.9 L354.6 491.7 L355.4 491.6 L356.2 491.5 L357.0 491.3 L357.8 491.5 L358.7 491.4 L359.5 491.3 L360.3 491.1 L361.1 490.9 L361.9 490.7 L362.7 490.6 L363.5 490.6 L364.3 490.4 L365.1 490.5 L365.9 490.3 L366.7 490.6 L367.5 490.2 L368.3 490.5 L369.1 490.1 L369.9 490.3 L370.7 490.5 L371.5 490.6 L372.3 490.5 L373.1 490.3 L373.9 490.2 L374.7 490.6 L375.5 490.6 L376.3 490.3 L377.2 490.3 L378.0 490.4 L378.8 490.5 L379.6 490.3 L380.4 490.7 L381.2 490.5 L382.0 490.4 L382.8 490.1 L383.6 490.3 L384.4 490.1 L385.2 490.4 L386.0 490.5 L386.0 494.2 L385.2 494.3 L384.4 494.5 L383.6 494.4 L382.8 494.6 L382.0 494.3 L381.2 494.2 L380.4 494.1 L379.6 494.4 L378.8 494.2 L378.0 494.3 L377.2 494.4 L376.3 494.3 L375.5 494.1 L374.7 494.1 L373.9 494.4 L373.1 494.4 L372.3 494.2 L371.5 494.1 L370.7 494.2 L369.9 494.4 L369.1 494.5 L368.3 494.2 L367.5 494.5 L366.7 494.1 L365.9 494.3 L365.1 494.2 L364.3 494.3 L363.5 494.1 L362.7 494.1 L361.9 494.1 L361.1 493.9 L360.3 493.7 L359.5 493.5 L358.7 493.4 L357.8 493.4 L357.0 493.5 L356.2 493.4 L355.4 493.3 L354.6 493.2 L353.8 493.0 L353.0 492.9 L352.2 492.9 L351.4 492.8 L350.6 492.7 L349.8 492.6 L349.0 492.5 Z M385.9 492.5 L386.8 489.0 L387.7 489.9 L388.6 491.6 L389.8 492.5 L388.6 493.6 L387.7 494.9 L386.8 495.1 Z M390.9 492.5 L391.8 489.0 L392.7 489.9 L393.6 491.6 L394.8 492.5 L393.6 493.6 L392.7 494.9 L391.8 495.1 Z M396.5 492.5 L397.4 489.7 L398.3 490.4 L399.2 491.8 L400.4 492.5 L399.2 493.3 L398.3 494.5 L397.4 494.6 Z M403.0 492.5 L403.9 489.4 L404.8 490.1 L405.7 491.7 L406.9 492.5 L405.7 493.4 L404.8 494.7 L403.9 494.9 Z M409.3 492.5 L410.2 489.4 L411.1 490.1 L412.0 491.7 L413.2 492.5 L412.0 493.4 L411.1 494.7 L410.2 494.9 Z M415.6 492.5 L416.5 490.1 L417.4 490.7 L418.3 491.9 L419.5 492.5 L418.3 493.2 L417.4 494.2 L416.5 494.3 Z M421.9 492.5 L422.8 491.4 L423.7 491.7 L424.6 492.2 L425.8 492.5 L424.6 492.8 L423.7 493.2 L422.8 493.3 Z M429.0 492.5 L429.9 489.4 L430.8 490.1 L431.7 491.7 L432.9 492.5 L431.7 493.4 L430.8 494.7 L429.9 494.9 Z M435.7 492.5 L436.6 490.4 L437.5 490.9 L438.4 492.0 L439.6 492.5 L438.4 493.1 L437.5 494.0 L436.6 494.1 Z M441.9 492.5 L442.8 489.7 L443.7 490.4 L444.6 491.8 L445.8 492.5 L444.6 493.3 L443.7 494.5 L442.8 494.6 Z M449.0 492.5 L449.9 489.7 L450.8 490.4 L451.7 491.8 L452.9 492.5 L451.7 493.3 L450.8 494.5 L449.9 494.6 Z M455.7 492.5 L456.6 489.4 L457.5 490.1 L458.4 491.7 L459.6 492.5 L458.4 493.4 L457.5 494.7 L456.6 494.9 Z M461.4 492.5 L462.3 489.7 L463.2 490.4 L464.1 491.8 L465.3 492.5 L464.1 493.3 L463.2 494.5 L462.3 494.6 Z M466.7 492.5 L467.6 490.8 L468.5 491.2 L469.4 492.1 L470.6 492.5 L469.4 493.0 L468.5 493.7 L467.6 493.8 Z M471.7 492.5 L472.6 490.8 L473.5 491.2 L474.4 492.1 L475.6 492.5 L474.4 493.0 L473.5 493.7 L472.6 493.8 Z M474.7 492.5 L475.6 490.4 L476.5 490.9 L477.4 492.0 L478.6 492.5 L477.4 493.1 L476.5 494.0 L475.6 494.1 Z M477.7 492.5 L478.6 491.1 L479.5 491.4 L480.4 492.1 L481.6 492.5 L480.4 492.9 L479.5 493.5 L478.6 493.6 Z M487.3 492.5 L488.2 490.1 L489.1 490.7 L490.0 491.9 L491.2 492.5 L490.0 493.2 L489.1 494.2 L488.2 494.3 Z M501.8 492.5 L502.7 489.7 L503.6 490.4 L504.5 491.8 L505.7 492.5 L504.5 493.3 L503.6 494.5 L502.7 494.6 Z M511.5 492.5 L512.4 490.4 L513.3 490.9 L514.2 492.0 L515.4 492.5 L514.2 493.1 L513.3 494.0 L512.4 494.1 Z M520.3 492.5 L521.2 491.4 L522.1 491.7 L523.0 492.2 L524.2 492.5 L523.0 492.8 L522.1 493.2 L521.2 493.3 Z M526.7 492.5 L527.6 492.0 L528.5 492.1 L529.4 492.4 L530.6 492.5 L529.4 492.7 L528.5 492.9 L527.6 492.9 Z" fill="#2a1d2c"/>
<path d="M628.0 492.5 L628.8 492.4 L629.6 492.3 L630.4 492.2 L631.2 492.1 L632.0 492.0 L632.8 491.8 L633.6 491.8 L634.4 491.7 L635.2 491.5 L636.0 491.3 L636.8 491.4 L637.7 491.4 L638.5 491.2 L639.3 491.0 L640.1 490.8 L640.9 490.9 L641.7 490.5 L642.5 490.4 L643.3 490.5 L644.1 490.5 L644.9 489.9 L645.7 490.4 L646.5 490.0 L647.3 490.4 L648.1 490.4 L648.9 490.1 L649.7 490.4 L650.5 490.0 L651.3 490.3 L652.1 490.5 L652.9 490.4 L653.7 490.3 L654.5 490.1 L655.3 490.0 L656.2 490.5 L657.0 490.3 L657.8 490.4 L658.6 489.9 L659.4 490.5 L660.2 490.5 L661.0 490.5 L661.8 490.3 L662.6 490.0 L663.4 490.0 L664.2 490.1 L665.0 489.9 L665.0 494.7 L664.2 494.5 L663.4 494.6 L662.6 494.6 L661.8 494.4 L661.0 494.2 L660.2 494.2 L659.4 494.2 L658.6 494.7 L657.8 494.3 L657.0 494.4 L656.2 494.2 L655.3 494.7 L654.5 494.5 L653.7 494.4 L652.9 494.3 L652.1 494.2 L651.3 494.4 L650.5 494.7 L649.7 494.3 L648.9 494.6 L648.1 494.3 L647.3 494.3 L646.5 494.6 L645.7 494.3 L644.9 494.7 L644.1 494.2 L643.3 494.2 L642.5 494.3 L641.7 494.2 L640.9 493.8 L640.1 493.9 L639.3 493.8 L638.5 493.6 L637.7 493.5 L636.8 493.4 L636.0 493.5 L635.2 493.4 L634.4 493.2 L633.6 493.1 L632.8 493.1 L632.0 493.0 L631.2 492.8 L630.4 492.8 L629.6 492.7 L628.8 492.6 L628.0 492.5 Z M646.7 492.5 L647.6 489.2 L648.5 490.0 L649.4 491.7 L650.6 492.5 L649.4 493.5 L648.5 494.8 L647.6 495.0 Z M650.7 492.5 L651.6 488.8 L652.5 489.7 L653.4 491.6 L654.6 492.5 L653.4 493.6 L652.5 495.1 L651.6 495.3 Z M655.7 492.5 L656.6 489.6 L657.5 490.3 L658.4 491.8 L659.6 492.5 L658.4 493.4 L657.5 494.6 L656.6 494.7 Z M659.7 492.5 L660.6 490.7 L661.5 491.1 L662.4 492.0 L663.6 492.5 L662.4 493.1 L661.5 493.8 L660.6 493.9 Z" fill="#2a1d2c"/>
<path d="M805.0 492.5 L805.8 492.2 L806.6 492.0 L807.4 491.5 L808.2 491.2 L809.1 491.2 L809.9 490.6 L810.7 490.5 L811.5 490.4 L812.3 490.5 L813.1 490.6 L813.9 490.7 L814.8 490.5 L815.6 490.4 L816.4 490.1 L817.2 490.6 L818.0 490.1 L818.0 494.6 L817.2 494.1 L816.4 494.6 L815.6 494.2 L814.8 494.2 L813.9 494.1 L813.1 494.1 L812.3 494.2 L811.5 494.3 L810.7 494.2 L809.9 494.1 L809.1 493.6 L808.2 493.6 L807.4 493.3 L806.6 493.0 L805.8 492.7 L805.0 492.5 Z M813.7 492.5 L814.6 490.8 L815.5 491.2 L816.4 492.1 L817.6 492.5 L816.4 493.0 L815.5 493.7 L814.6 493.8 Z M818.7 492.5 L819.6 489.7 L820.5 490.4 L821.4 491.8 L822.6 492.5 L821.4 493.3 L820.5 494.5 L819.6 494.6 Z M824.7 492.5 L825.6 489.4 L826.5 490.1 L827.4 491.7 L828.6 492.5 L827.4 493.4 L826.5 494.7 L825.6 494.9 Z M829.7 492.5 L830.6 490.1 L831.5 490.7 L832.4 491.9 L833.6 492.5 L832.4 493.2 L831.5 494.2 L830.6 494.3 Z M835.7 492.5 L836.6 490.4 L837.5 490.9 L838.4 492.0 L839.6 492.5 L838.4 493.1 L837.5 494.0 L836.6 494.1 Z M841.7 492.5 L842.6 489.7 L843.5 490.4 L844.4 491.8 L845.6 492.5 L844.4 493.3 L843.5 494.5 L842.6 494.6 Z M846.7 492.5 L847.6 490.4 L848.5 490.9 L849.4 492.0 L850.6 492.5 L849.4 493.1 L848.5 494.0 L847.6 494.1 Z M853.7 492.5 L854.6 489.4 L855.5 490.1 L856.4 491.7 L857.6 492.5 L856.4 493.4 L855.5 494.7 L854.6 494.9 Z M856.7 492.5 L857.6 490.1 L858.5 490.7 L859.4 491.9 L860.6 492.5 L859.4 493.2 L858.5 494.2 L857.6 494.3 Z" fill="#2a1d2c"/>
<path d="M872.0 492.5 L872.8 492.0 L873.6 491.5 L874.4 491.0 L875.2 490.6 L876.0 490.6 L876.8 490.4 L877.6 490.4 L878.4 490.1 L879.2 490.5 L880.0 490.4 L880.0 494.3 L879.2 494.2 L878.4 494.5 L877.6 494.3 L876.8 494.3 L876.0 494.1 L875.2 494.1 L874.4 493.8 L873.6 493.4 L872.8 492.9 L872.0 492.5 Z M866.7 492.5 L867.6 490.1 L868.5 490.7 L869.4 491.9 L870.6 492.5 L869.4 493.2 L868.5 494.2 L867.6 494.3 Z M874.7 492.5 L875.6 490.8 L876.5 491.2 L877.4 492.1 L878.6 492.5 L877.4 493.0 L876.5 493.7 L875.6 493.8 Z M880.7 492.5 L881.6 490.4 L882.5 490.9 L883.4 492.0 L884.6 492.5 L883.4 493.1 L882.5 494.0 L881.6 494.1 Z M886.7 492.5 L887.6 490.8 L888.5 491.2 L889.4 492.1 L890.6 492.5 L889.4 493.0 L888.5 493.7 L887.6 493.8 Z M892.7 492.5 L893.6 491.1 L894.5 491.4 L895.4 492.1 L896.6 492.5 L895.4 492.9 L894.5 493.5 L893.6 493.6 Z M898.7 492.5 L899.6 491.3 L900.5 491.6 L901.4 492.2 L902.6 492.5 L901.4 492.9 L900.5 493.4 L899.6 493.4 Z M904.7 492.5 L905.6 491.4 L906.5 491.7 L907.4 492.2 L908.6 492.5 L907.4 492.8 L906.5 493.2 L905.6 493.3 Z M910.7 492.5 L911.6 491.6 L912.5 491.8 L913.4 492.3 L914.6 492.5 L913.4 492.8 L912.5 493.1 L911.6 493.2 Z M916.7 492.5 L917.6 492.0 L918.5 492.1 L919.4 492.4 L920.6 492.5 L919.4 492.7 L918.5 492.9 L917.6 492.9 Z" fill="#2a1d2c"/>
<path d="M1353.0 492.5 L1353.8 491.7 L1354.6 490.7 L1355.4 490.2 L1356.2 490.2 L1357.0 490.6 L1357.0 494.1 L1356.2 494.5 L1355.4 494.5 L1354.6 494.1 L1353.8 493.2 L1353.0 492.5 Z M1356.7 492.5 L1357.6 489.4 L1358.5 490.1 L1359.4 491.7 L1360.6 492.5 L1359.4 493.4 L1358.5 494.7 L1357.6 494.9 Z M1359.7 492.5 L1360.6 490.4 L1361.5 490.9 L1362.4 492.0 L1363.6 492.5 L1362.4 493.1 L1361.5 494.0 L1360.6 494.1 Z" fill="#2a1d2c"/>
<rect x="862" y="503" width="174" height="16" fill="#00bfae" />
<rect x="862" y="519" width="174" height="47" fill="#3a6b66" />
<rect x="883" y="519" width="1" height="47" fill="#2b524d" />
<rect x="904" y="519" width="1" height="47" fill="#2b524d" />
<rect x="925" y="519" width="1" height="47" fill="#2b524d" />
<rect x="946" y="519" width="1" height="47" fill="#2b524d" />
<rect x="967" y="519" width="1" height="47" fill="#2b524d" />
<rect x="988" y="519" width="1" height="47" fill="#2b524d" />
<rect x="1009" y="519" width="1" height="47" fill="#2b524d" />
<rect x="1031" y="519" width="1" height="47" fill="#2b524d" />
<path d="M870 566 C880 540 890 520 910 519 L1020 519 C1030 530 1034 560 1036 566 Z" fill="#ffffff" fill-opacity="0.06"/>
<rect x="862" y="533" width="174" height="1" fill="#1a2b2b" />
<rect x="862" y="559" width="174" height="1" fill="#1a2b2b" />
<path d="M880.0 533.5 L880.8 533.3 L881.6 533.0 L882.4 532.9 L883.2 532.6 L884.0 532.3 L884.8 532.3 L885.6 532.1 L886.4 531.5 L887.2 531.5 L888.0 531.5 L888.8 531.0 L889.6 531.2 L890.4 531.2 L891.2 531.4 L892.0 530.9 L892.8 530.8 L893.6 531.0 L894.4 530.7 L895.2 531.4 L896.0 531.2 L896.8 531.1 L897.6 530.7 L898.4 530.7 L899.2 531.1 L900.0 531.2 L900.0 535.4 L899.2 535.5 L898.4 535.9 L897.6 535.9 L896.8 535.6 L896.0 535.4 L895.2 535.3 L894.4 535.8 L893.6 535.7 L892.8 535.8 L892.0 535.7 L891.2 535.3 L890.4 535.4 L889.6 535.5 L888.8 535.6 L888.0 535.2 L887.2 535.2 L886.4 535.2 L885.6 534.7 L884.8 534.5 L884.0 534.5 L883.2 534.3 L882.4 534.0 L881.6 533.9 L880.8 533.7 L880.0 533.5 Z M898.7 533.5 L899.6 531.9 L900.5 532.3 L901.4 533.1 L902.6 533.5 L901.4 534.0 L900.5 534.6 L899.6 534.7 Z M905.7 533.5 L906.6 531.8 L907.5 532.2 L908.4 533.1 L909.6 533.5 L908.4 534.0 L907.5 534.7 L906.6 534.8 Z M912.7 533.5 L913.6 531.7 L914.5 532.1 L915.4 533.0 L916.6 533.5 L915.4 534.1 L914.5 534.8 L913.6 534.9 Z M919.7 533.5 L920.6 531.5 L921.5 532.0 L922.4 533.0 L923.6 533.5 L922.4 534.1 L921.5 534.9 L920.6 535.0 Z M926.7 533.5 L927.6 531.4 L928.5 531.9 L929.4 533.0 L930.6 533.5 L929.4 534.1 L928.5 535.0 L927.6 535.1 Z M933.7 533.5 L934.6 531.3 L935.5 531.8 L936.4 532.9 L937.6 533.5 L936.4 534.2 L935.5 535.1 L934.6 535.2 Z M940.7 533.5 L941.6 531.1 L942.5 531.7 L943.4 532.9 L944.6 533.5 L943.4 534.2 L942.5 535.2 L941.6 535.3 Z M947.7 533.5 L948.6 531.0 L949.5 531.6 L950.4 532.9 L951.6 533.5 L950.4 534.2 L949.5 535.2 L948.6 535.4 Z M954.7 533.5 L955.6 530.9 L956.5 531.5 L957.4 532.8 L958.6 533.5 L957.4 534.3 L956.5 535.3 L955.6 535.5 Z M961.7 533.5 L962.6 530.8 L963.5 531.4 L964.4 532.8 L965.6 533.5 L964.4 534.3 L963.5 535.4 L962.6 535.6 Z M968.7 533.5 L969.6 530.6 L970.5 531.3 L971.4 532.8 L972.6 533.5 L971.4 534.4 L970.5 535.5 L969.6 535.7 Z M975.7 533.5 L976.6 530.5 L977.5 531.2 L978.4 532.7 L979.6 533.5 L978.4 534.4 L977.5 535.6 L976.6 535.8 Z M982.7 533.5 L983.6 530.4 L984.5 531.1 L985.4 532.7 L986.6 533.5 L985.4 534.4 L984.5 535.7 L983.6 535.9 Z M989.7 533.5 L990.6 530.2 L991.5 531.0 L992.4 532.7 L993.6 533.5 L992.4 534.5 L991.5 535.8 L990.6 536.0 Z M996.7 533.5 L997.6 530.1 L998.5 530.9 L999.4 532.6 L1000.6 533.5 L999.4 534.5 L998.5 535.9 L997.6 536.1 Z M1003.7 533.5 L1004.6 530.0 L1005.5 530.9 L1006.4 532.6 L1007.6 533.5 L1006.4 534.6 L1005.5 536.0 L1004.6 536.1 Z M1010.7 533.5 L1011.6 529.8 L1012.5 530.8 L1013.4 532.6 L1014.6 533.5 L1013.4 534.6 L1012.5 536.1 L1011.6 536.2 Z M1017.7 533.5 L1018.6 529.7 L1019.5 530.7 L1020.4 532.6 L1021.6 533.5 L1020.4 534.6 L1019.5 536.2 L1018.6 536.3 Z M1024.7 533.5 L1025.6 529.6 L1026.5 530.6 L1027.4 532.5 L1028.6 533.5 L1027.4 534.7 L1026.5 536.2 L1025.6 536.4 Z" fill="#2a1d2c"/>
<path d="M880.0 559.5 L880.8 559.3 L881.6 559.0 L882.4 558.9 L883.2 558.6 L884.0 558.3 L884.8 558.1 L885.6 557.9 L886.4 557.7 L887.2 557.7 L888.0 557.5 L888.8 557.2 L889.6 556.9 L890.4 557.3 L891.2 557.3 L892.0 556.9 L892.8 557.2 L893.6 557.4 L894.4 557.4 L895.2 557.0 L896.0 557.2 L896.8 556.7 L897.6 556.8 L898.4 556.7 L899.2 557.2 L900.0 557.3 L900.0 561.3 L899.2 561.4 L898.4 561.9 L897.6 561.8 L896.8 561.9 L896.0 561.5 L895.2 561.6 L894.4 561.3 L893.6 561.3 L892.8 561.4 L892.0 561.7 L891.2 561.4 L890.4 561.3 L889.6 561.8 L888.8 561.4 L888.0 561.2 L887.2 561.1 L886.4 561.0 L885.6 560.9 L884.8 560.7 L884.0 560.5 L883.2 560.3 L882.4 560.0 L881.6 559.9 L880.8 559.7 L880.0 559.5 Z M898.7 559.5 L899.6 557.9 L900.5 558.3 L901.4 559.1 L902.6 559.5 L901.4 560.0 L900.5 560.6 L899.6 560.7 Z M905.7 559.5 L906.6 557.8 L907.5 558.2 L908.4 559.1 L909.6 559.5 L908.4 560.0 L907.5 560.7 L906.6 560.8 Z M912.7 559.5 L913.6 557.7 L914.5 558.1 L915.4 559.0 L916.6 559.5 L915.4 560.1 L914.5 560.8 L913.6 560.9 Z M919.7 559.5 L920.6 557.5 L921.5 558.0 L922.4 559.0 L923.6 559.5 L922.4 560.1 L921.5 560.9 L920.6 561.0 Z M926.7 559.5 L927.6 557.4 L928.5 557.9 L929.4 559.0 L930.6 559.5 L929.4 560.1 L928.5 561.0 L927.6 561.1 Z M933.7 559.5 L934.6 557.3 L935.5 557.8 L936.4 558.9 L937.6 559.5 L936.4 560.2 L935.5 561.1 L934.6 561.2 Z M940.7 559.5 L941.6 557.1 L942.5 557.7 L943.4 558.9 L944.6 559.5 L943.4 560.2 L942.5 561.2 L941.6 561.3 Z M947.7 559.5 L948.6 557.0 L949.5 557.6 L950.4 558.9 L951.6 559.5 L950.4 560.2 L949.5 561.2 L948.6 561.4 Z M954.7 559.5 L955.6 556.9 L956.5 557.5 L957.4 558.8 L958.6 559.5 L957.4 560.3 L956.5 561.3 L955.6 561.5 Z M961.7 559.5 L962.6 556.8 L963.5 557.4 L964.4 558.8 L965.6 559.5 L964.4 560.3 L963.5 561.4 L962.6 561.6 Z M968.7 559.5 L969.6 556.6 L970.5 557.3 L971.4 558.8 L972.6 559.5 L971.4 560.4 L970.5 561.5 L969.6 561.7 Z M975.7 559.5 L976.6 556.5 L977.5 557.2 L978.4 558.7 L979.6 559.5 L978.4 560.4 L977.5 561.6 L976.6 561.8 Z M982.7 559.5 L983.6 556.4 L984.5 557.1 L985.4 558.7 L986.6 559.5 L985.4 560.4 L984.5 561.7 L983.6 561.9 Z M989.7 559.5 L990.6 556.2 L991.5 557.0 L992.4 558.7 L993.6 559.5 L992.4 560.5 L991.5 561.8 L990.6 562.0 Z M996.7 559.5 L997.6 556.1 L998.5 556.9 L999.4 558.6 L1000.6 559.5 L999.4 560.5 L998.5 561.9 L997.6 562.1 Z M1003.7 559.5 L1004.6 556.0 L1005.5 556.9 L1006.4 558.6 L1007.6 559.5 L1006.4 560.6 L1005.5 562.0 L1004.6 562.1 Z M1010.7 559.5 L1011.6 555.8 L1012.5 556.8 L1013.4 558.6 L1014.6 559.5 L1013.4 560.6 L1012.5 562.1 L1011.6 562.2 Z M1017.7 559.5 L1018.6 555.7 L1019.5 556.7 L1020.4 558.6 L1021.6 559.5 L1020.4 560.6 L1019.5 562.2 L1018.6 562.3 Z M1024.7 559.5 L1025.6 555.6 L1026.5 556.6 L1027.4 558.5 L1028.6 559.5 L1027.4 560.7 L1026.5 562.2 L1025.6 562.4 Z" fill="#2a1d2c"/>
<rect x="167" y="78" width="1.3" height="741" fill="#2e2f55" />
<rect x="1304" y="78" width="1.3" height="741" fill="#2e2f55" />
<rect x="294" y="88" width="1.3" height="731" fill="#2e2f55" />
<rect x="799" y="88" width="1.3" height="731" fill="#2e2f55" />
<rect x="1052" y="88" width="1.3" height="731" fill="#2e2f55" />
<rect x="366" y="100" width="1.3" height="719" fill="#0d0d12" />
<rect x="2" y="100" width="1541" height="2" fill="#5d5f9e" />
<rect x="2" y="114" width="1541" height="2" fill="#5d5f9e" />
<rect x="2" y="202" width="1541" height="2" fill="#5d5f9e" />
<rect x="2" y="290" width="1541" height="2" fill="#5d5f9e" />
<rect x="2" y="309" width="1541" height="2" fill="#5d5f9e" />
<rect x="2" y="501" width="1541" height="2" fill="#5d5f9e" />
<rect x="2" y="566" width="1541" height="2" fill="#5d5f9e" />
<rect x="2" y="621" width="1541" height="2" fill="#5d5f9e" />
<rect x="2" y="675" width="1541" height="2" fill="#5d5f9e" />
<rect x="2" y="729" width="1541" height="2" fill="#5d5f9e" />
<rect x="2" y="748" width="1541" height="2" fill="#5d5f9e" />
<rect x="2" y="819" width="1541" height="2" fill="#5d5f9e" />
<rect x="2" y="78" width="1541" height="0" fill="#5d5f9e" />
<rect x="2" y="821" width="1541" height="20" fill="#cfd0e3" />
<rect x="98" y="822" width="1" height="10" fill="#44455a" />
<rect x="98" y="831" width="3" height="1" fill="#44455a" />
<rect x="243" y="822" width="1" height="10" fill="#44455a" />
<rect x="243" y="831" width="3" height="1" fill="#44455a" />
<rect x="382" y="822" width="1" height="10" fill="#44455a" />
<rect x="382" y="831" width="3" height="1" fill="#44455a" />
<rect x="506" y="822" width="1" height="10" fill="#44455a" />
<rect x="506" y="831" width="3" height="1" fill="#44455a" />
<rect x="626" y="822" width="1" height="10" fill="#44455a" />
<rect x="626" y="831" width="3" height="1" fill="#44455a" />
<rect x="743" y="822" width="1" height="10" fill="#44455a" />
<rect x="743" y="831" width="3" height="1" fill="#44455a" />
<rect x="864" y="822" width="1" height="10" fill="#44455a" />
<rect x="864" y="831" width="3" height="1" fill="#44455a" />
<rect x="991" y="822" width="1" height="10" fill="#44455a" />
<rect x="991" y="831" width="3" height="1" fill="#44455a" />
<rect x="1133" y="822" width="1" height="10" fill="#44455a" />
<rect x="1133" y="831" width="3" height="1" fill="#44455a" />
<rect x="1280" y="822" width="1" height="10" fill="#44455a" />
<rect x="1280" y="831" width="3" height="1" fill="#44455a" />
<rect x="1424" y="822" width="1" height="10" fill="#44455a" />
<rect x="1424" y="831" width="3" height="1" fill="#44455a" />
<rect x="26" y="821" width="1" height="3" fill="#55566a" />
<rect x="62" y="821" width="1" height="3" fill="#55566a" />
<rect x="135" y="821" width="1" height="3" fill="#55566a" />
<rect x="171" y="821" width="1" height="3" fill="#55566a" />
<rect x="207" y="821" width="1" height="3" fill="#55566a" />
<rect x="278" y="821" width="1" height="3" fill="#55566a" />
<rect x="313" y="821" width="1" height="3" fill="#55566a" />
<rect x="348" y="821" width="1" height="3" fill="#55566a" />
<rect x="413" y="821" width="1" height="3" fill="#55566a" />
<rect x="444" y="821" width="1" height="3" fill="#55566a" />
<rect x="475" y="821" width="1" height="3" fill="#55566a" />
<rect x="536" y="821" width="1" height="3" fill="#55566a" />
<rect x="566" y="821" width="1" height="3" fill="#55566a" />
<rect x="596" y="821" width="1" height="3" fill="#55566a" />
<rect x="656" y="821" width="1" height="3" fill="#55566a" />
<rect x="685" y="821" width="1" height="3" fill="#55566a" />
<rect x="714" y="821" width="1" height="3" fill="#55566a" />
<rect x="773" y="821" width="1" height="3" fill="#55566a" />
<rect x="804" y="821" width="1" height="3" fill="#55566a" />
<rect x="834" y="821" width="1" height="3" fill="#55566a" />
<rect x="896" y="821" width="1" height="3" fill="#55566a" />
<rect x="928" y="821" width="1" height="3" fill="#55566a" />
<rect x="959" y="821" width="1" height="3" fill="#55566a" />
<rect x="1027" y="821" width="1" height="3" fill="#55566a" />
<rect x="1062" y="821" width="1" height="3" fill="#55566a" />
<rect x="1098" y="821" width="1" height="3" fill="#55566a" />
<rect x="1170" y="821" width="1" height="3" fill="#55566a" />
<rect x="1206" y="821" width="1" height="3" fill="#55566a" />
<rect x="1243" y="821" width="1" height="3" fill="#55566a" />
<rect x="1316" y="821" width="1" height="3" fill="#55566a" />
<rect x="1352" y="821" width="1" height="3" fill="#55566a" />
<rect x="1388" y="821" width="1" height="3" fill="#55566a" />
<rect x="1461" y="821" width="1" height="3" fill="#55566a" />
<rect x="1497" y="821" width="1" height="3" fill="#55566a" />
<rect x="1533" y="821" width="1" height="3" fill="#55566a" />
<rect x="1543" y="100" width="6" height="719" fill="#5d5f9e" />
<rect x="1703" y="100" width="2" height="719" fill="#5d5f9e" />
<rect x="1705" y="100" width="74" height="719" fill="#cfd0e3" />
<rect x="1779" y="100" width="2" height="719" fill="#5d5f9e" />
<rect x="1781" y="100" width="113" height="719" fill="#cfd0e3" />
<rect x="1894" y="57" width="10" height="762" fill="#cfd0e3" />
<rect x="1904" y="41" width="2" height="801" fill="#22234a" />
<rect x="1549" y="102" width="154" height="12" fill="#7d6350" />
<rect x="1543" y="100" width="5" height="210" fill="#00fba9" />
<rect x="1548" y="100" width="1" height="210" fill="#5d5f9e" />
<rect x="1883" y="101" width="3" height="12" fill="#22d36a" />
<rect x="1887" y="101" width="3" height="12" fill="#22d36a" />
<rect x="1549" y="116" width="154" height="17" fill="#00fba9" />
<rect x="1549" y="133" width="154" height="69" fill="#466f58" />
<rect x="1883" y="118" width="3" height="84" fill="#23233c" />
<rect x="1887" y="118" width="3" height="84" fill="#23233c" />
<rect x="1549" y="204" width="154" height="17" fill="#00fba9" />
<rect x="1549" y="221" width="154" height="69" fill="#466f58" />
<rect x="1883" y="206" width="3" height="84" fill="#23233c" />
<rect x="1887" y="206" width="3" height="84" fill="#23233c" />
<rect x="1883" y="283" width="3" height="1" fill="#22d36a" />
<rect x="1887" y="283" width="3" height="1" fill="#22d36a" />
<rect x="1549" y="292" width="154" height="17" fill="#3d3d3d" />
<rect x="1883" y="294" width="3" height="15" fill="#23233c" />
<rect x="1887" y="294" width="3" height="15" fill="#23233c" />
<rect x="1543" y="311" width="160" height="17" fill="#ec52a4" />
<rect x="1543" y="328" width="160" height="173" fill="#845a6b" />
<rect x="1543" y="397" width="160" height="1" fill="#5c3f4c" />
<rect x="1543" y="466" width="160" height="1" fill="#5c3f4c" />
<rect x="1883" y="313" width="3" height="187" fill="#23233c" />
<rect x="1887" y="313" width="3" height="187" fill="#23233c" />
<rect x="1883" y="388" width="3" height="112" fill="#22d36a" />
<rect x="1887" y="388" width="3" height="112" fill="#22d36a" />
<rect x="1543" y="503" width="160" height="17" fill="#00bfae" />
<rect x="1543" y="520" width="160" height="46" fill="#3a6b66" />
<rect x="1883" y="505" width="3" height="61" fill="#23233c" />
<rect x="1887" y="505" width="3" height="61" fill="#23233c" />
<rect x="1543" y="568" width="160" height="17" fill="#e8685e" />
<rect x="1543" y="585" width="160" height="36" fill="#7f5d5a" />
<rect x="1883" y="570" width="3" height="51" fill="#23233c" />
<rect x="1887" y="570" width="3" height="51" fill="#23233c" />
<rect x="1883" y="604" width="3" height="16" fill="#22d36a" />
<rect x="1887" y="604" width="3" height="16" fill="#22d36a" />
<rect x="1543" y="623" width="160" height="17" fill="#ff9e72" />
<rect x="1543" y="640" width="160" height="35" fill="#7e6052" />
<rect x="1883" y="625" width="3" height="50" fill="#23233c" />
<rect x="1887" y="625" width="3" height="50" fill="#23233c" />
<rect x="1883" y="645" width="3" height="29" fill="#22d36a" />
<rect x="1887" y="645" width="3" height="29" fill="#22d36a" />
<rect x="1543" y="677" width="160" height="17" fill="#e6f5a2" />
<rect x="1543" y="694" width="160" height="35" fill="#646c4d" />
<rect x="1883" y="679" width="3" height="50" fill="#23233c" />
<rect x="1887" y="679" width="3" height="50" fill="#23233c" />
<rect x="1883" y="700" width="3" height="28" fill="#22d36a" />
<rect x="1887" y="700" width="3" height="28" fill="#22d36a" />
<rect x="1543" y="731" width="160" height="17" fill="#c8f5dc" />
<rect x="1883" y="733" width="3" height="15" fill="#23233c" />
<rect x="1887" y="733" width="3" height="15" fill="#23233c" />
<rect x="1543" y="750" width="160" height="17" fill="#ff33cc" />
<rect x="1543" y="767" width="160" height="51" fill="#7e5a73" />
<rect x="1883" y="752" width="3" height="66" fill="#23233c" />
<rect x="1887" y="752" width="3" height="66" fill="#23233c" />
<rect x="1883" y="776" width="3" height="42" fill="#22d36a" />
<rect x="1887" y="776" width="3" height="42" fill="#22d36a" />
<rect x="1883" y="760" width="7" height="1" fill="#e89a30" />
<rect x="1543" y="821" width="361" height="20" fill="#cfd0e3" />
<rect x="0" y="845" width="1908" height="229" fill="#6668a2" />
<rect x="2" y="851" width="1902" height="187" fill="#9bb7e1" />
<rect x="0" y="850" width="1906" height="1" fill="#5878c0" />
<rect x="0" y="850" width="2" height="188" fill="#5878c0" />
<rect x="2" y="851" width="128" height="16" fill="#a9c4ec" />
<rect x="2" y="868" width="71" height="134" fill="#2c4b7a" />

<rect x="75" y="868" width="53" height="169" fill="#a6bfe7" />
<rect x="2" y="1004" width="24" height="33" fill="#a6bfe7" />
<rect x="28" y="1004" width="45" height="33" fill="#a6bfe7" />
<rect x="129" y="851" width="2.5" height="187" fill="#5566a8" />
<rect x="132" y="851" width="474" height="16" fill="#a9c4ec" />
<rect x="606" y="851" width="2" height="187" fill="#5566a8" />
<rect x="608" y="851" width="422" height="16" fill="#a9c4ec" />
<rect x="1030" y="851" width="3" height="187" fill="#5566a8" />
<rect x="1033" y="851" width="512" height="16" fill="#a9c4ec" />
<rect x="1545" y="851" width="2.5" height="187" fill="#5566a8" />
<rect x="1566.5" y="851" width="2" height="187" fill="#5566a8" />
<rect x="1568.5" y="851" width="17.5" height="16" fill="#a9c4ec" />
<rect x="1586" y="851" width="2.5" height="187" fill="#5566a8" />
<rect x="1588.5" y="851" width="150" height="16" fill="#a9c4ec" />
<rect x="1738" y="851" width="2" height="187" fill="#5566a8" />
<rect x="1740" y="851" width="164" height="16" fill="#a9c4ec" />
<rect x="1904" y="845" width="4" height="200" fill="#6668a2" />
</svg>
<div class="a" style="left:5px;top:13px;width:5px;height:13px;background:#3f3f6c;"></div>
<div class="a" style="left:12px;top:13px;width:10px;height:13px;background:#3f3f6c;"></div>
<div class="a t" style="left:47px;top:11px;width:43px;height:17px;line-height:17px;background:#d0d0e4;color:#1b1b2e;font-size:11px;text-align:center;-webkit-text-stroke:0.3px;">Link</div>
<div class="a t" style="left:92px;top:11px;width:39px;height:17px;line-height:17px;background:#d0d0e4;color:#1b1b2e;font-size:11px;text-align:center;-webkit-text-stroke:0.3px;">Follow</div>
<div class="a t" style="left:133px;top:11px;width:23px;height:17px;line-height:17px;background:#d0d0e4;color:#1b1b2e;font-size:11px;text-align:center;-webkit-text-stroke:0.3px;">Ext</div>
<div class="a t" style="left:158px;top:11px;width:8px;height:17px;line-height:17px;background:#d0d0e4;color:#1d1d2b;font-size:11px;text-align:center;-webkit-text-stroke:0.3px;"></div>
<div class="a" style="left:158px;top:19px;width:8px;height:1px;background:#555670;"></div>
<div class="a t" style="left:168px;top:11px;width:17px;height:17px;line-height:17px;background:#d0d0e4;color:#1d1d2b;font-size:11px;text-align:center;-webkit-text-stroke:0.3px;"></div>
<div class="a t" style="left:187px;top:11px;width:26px;height:17px;line-height:17px;background:#d0d0e4;color:#1b1b2e;font-size:11px;text-align:center;-webkit-text-stroke:0.3px;">Tap</div>
<div class="a t" style="left:215px;top:11px;width:42px;height:17px;line-height:17px;background:#d0d0e4;color:#1b1b2e;font-size:11px;text-align:center;-webkit-text-stroke:0.3px;padding-left:4px;box-sizing:border-box;">124.05</div>
<div class="a t" style="left:259px;top:11px;width:17px;height:17px;line-height:17px;background:#d0d0e4;color:#1d1d2b;font-size:11px;text-align:center;-webkit-text-stroke:0.3px;"></div>
<div class="a t" style="left:278px;top:11px;width:17px;height:17px;line-height:17px;background:#d0d0e4;color:#1d1d2b;font-size:11px;text-align:center;-webkit-text-stroke:0.3px;"></div>
<div class="a" style="left:262px;top:15px;width:1.6px;height:10px;background:#111;"></div>
<div class="a" style="left:265px;top:15px;width:1.6px;height:10px;background:#111;"></div>
<div class="a" style="left:268px;top:15px;width:1.6px;height:10px;background:#111;"></div>
<div class="a" style="left:272px;top:15px;width:1.6px;height:10px;background:#111;"></div>
<div class="a" style="left:281px;top:15px;width:1.6px;height:10px;background:#111;"></div>
<div class="a" style="left:284px;top:15px;width:1.6px;height:10px;background:#111;"></div>
<div class="a" style="left:287px;top:15px;width:1.6px;height:10px;background:#111;"></div>
<div class="a" style="left:291px;top:15px;width:1.6px;height:10px;background:#111;"></div>
<div class="a t" style="left:297px;top:11px;width:42px;height:17px;line-height:17px;background:#d0d0e4;color:#1b1b2e;font-size:11px;text-align:center;-webkit-text-stroke:0.3px;">4&nbsp;&nbsp;/&nbsp;&nbsp;4</div>
<div class="a t" style="left:341px;top:11px;width:39px;height:17px;line-height:17px;background:#d0d0e4;color:#1d1d2b;font-size:11px;text-align:center;-webkit-text-stroke:0.3px;"></div>
<div class="a t" style="left:382px;top:11px;width:45px;height:17px;line-height:17px;background:#d0d0e4;color:#1b1b2e;font-size:11px;text-align:left;padding-left:4px;box-sizing:border-box;-webkit-text-stroke:0.3px;">1 Bar</div>
<div class="a t" style="left:448px;top:11px;width:17px;height:17px;line-height:17px;background:#d0d0e4;color:#1d1d2b;font-size:11px;text-align:center;-webkit-text-stroke:0.3px;"></div>
<div class="a t" style="left:451px;top:13px;font-size:10px;color:#1b1b2e;"><sub style="font-size:8px">b</sub>#</div>
<div class="a t" style="left:467px;top:11px;width:43px;height:17px;line-height:17px;background:#d0d0e4;color:#5f5f78;font-size:11px;text-align:left;padding-left:6px;box-sizing:border-box;-webkit-text-stroke:0.3px;">C</div>
<div class="a t" style="left:512px;top:11px;width:70px;height:17px;line-height:17px;background:#d0d0e4;color:#5f5f78;font-size:11px;text-align:left;padding-left:4px;box-sizing:border-box;-webkit-text-stroke:0.3px;">Major</div>
<div class="a t" style="left:702px;top:11px;width:21px;height:17px;line-height:17px;background:#d0d0e4;color:#1d1d2b;font-size:11px;text-align:center;-webkit-text-stroke:0.3px;"></div>
<div class="a t" style="left:725px;top:11px;width:82px;height:17px;line-height:17px;background:#d0d0e4;color:#1b1b2e;font-size:11px;text-align:right;-webkit-text-stroke:0.3px;padding-right:5px;box-sizing:border-box;">29&nbsp;.&nbsp;&nbsp;&nbsp;3&nbsp;.&nbsp;&nbsp;&nbsp;2</div>
<div class="a" style="left:851px;top:13px;width:12px;height:12px;background:#0e0e12;"></div>
<div class="a t" style="left:905px;top:11px;width:16px;height:17px;line-height:17px;background:#f9b32c;color:#1d1d2b;font-size:11px;text-align:center;-webkit-text-stroke:0.3px;"></div>
<div class="a t" style="left:924px;top:11px;width:17px;height:17px;line-height:17px;background:#d0d0e4;color:#1d1d2b;font-size:11px;text-align:center;-webkit-text-stroke:0.3px;"></div>
<div class="a t" style="left:943px;top:11px;width:17px;height:17px;line-height:17px;background:#d0d0e4;color:#1d1d2b;font-size:11px;text-align:center;-webkit-text-stroke:0.3px;"></div>
<div class="a t" style="left:962px;top:11px;width:17px;height:17px;line-height:17px;background:#d0d0e4;color:#1d1d2b;font-size:11px;text-align:center;-webkit-text-stroke:0.3px;"></div>
<div class="a t" style="left:981px;top:11px;width:17px;height:17px;line-height:17px;background:#d0d0e4;color:#1d1d2b;font-size:11px;text-align:center;-webkit-text-stroke:0.3px;"></div>
<div class="a t" style="left:1000px;top:11px;width:29px;height:17px;line-height:17px;background:#d0d0e4;color:#1b1b2e;font-size:11px;text-align:center;-webkit-text-stroke:0.3px;">New</div>
<div class="a t" style="left:1050px;top:11px;width:82px;height:17px;line-height:17px;background:#d0d0e4;color:#1b1b2e;font-size:11px;text-align:right;-webkit-text-stroke:0.3px;padding-right:5px;box-sizing:border-box;">28&nbsp;.&nbsp;&nbsp;&nbsp;1&nbsp;.&nbsp;&nbsp;&nbsp;1</div>
<div class="a t" style="left:1134px;top:11px;width:21px;height:17px;line-height:17px;background:#d0d0e4;color:#1d1d2b;font-size:11px;text-align:center;-webkit-text-stroke:0.3px;"></div>
<div class="a t" style="left:1157px;top:11px;width:21px;height:17px;line-height:17px;background:#f9b32c;color:#1d1d2b;font-size:11px;text-align:center;-webkit-text-stroke:0.3px;"></div>
<div class="a t" style="left:1180px;top:11px;width:20px;height:17px;line-height:17px;background:#d0d0e4;color:#1d1d2b;font-size:11px;text-align:center;-webkit-text-stroke:0.3px;"></div>
<div class="a t" style="left:1203px;top:11px;width:82px;height:17px;line-height:17px;background:#d0d0e4;color:#1b1b2e;font-size:11px;text-align:right;-webkit-text-stroke:0.3px;padding-right:5px;box-sizing:border-box;">9&nbsp;.&nbsp;&nbsp;&nbsp;0&nbsp;.&nbsp;&nbsp;&nbsp;0</div>
<div class="a t" style="left:1597px;top:11px;width:17px;height:17px;line-height:17px;background:#d0d0e4;color:#1d1d2b;font-size:11px;text-align:center;-webkit-text-stroke:0.3px;"></div>
<div class="a t" style="left:1616px;top:11px;width:17px;height:17px;line-height:17px;background:#d0d0e4;color:#1d1d2b;font-size:11px;text-align:center;-webkit-text-stroke:0.3px;"></div>
<div class="a t" style="left:1635px;top:11px;width:26px;height:17px;line-height:17px;background:#d0d0e4;color:#1b1b2e;font-size:11px;text-align:center;-webkit-text-stroke:0.3px;">Key</div>
<div class="a t" style="left:1662px;top:11px;width:9px;height:17px;line-height:17px;background:#d0d0e4;color:#1d1d2b;font-size:11px;text-align:center;-webkit-text-stroke:0.3px;"></div>
<div class="a" style="left:1662px;top:19px;width:9px;height:1px;background:#555670;"></div>
<div class="a t" style="left:1673px;top:11px;width:27px;height:17px;line-height:17px;background:#d0d0e4;color:#1b1b2e;font-size:11px;text-align:center;-webkit-text-stroke:0.3px;">MIDI</div>
<div class="a t" style="left:1703px;top:11px;width:48px;height:17px;line-height:17px;background:#d0d0e4;color:#1b1b2e;font-size:11px;text-align:center;-webkit-text-stroke:0.3px;">96.0 kHz</div>
<div class="a t" style="left:1753px;top:11px;width:56px;height:17px;line-height:17px;background:#d0d0e4;color:#1d1d2b;font-size:11px;text-align:center;-webkit-text-stroke:0.3px;"></div>
<div class="a" style="left:1753px;top:11px;width:11px;height:17px;background:#f9b32c;"></div>
<div class="a t" style="left:1811px;top:11px;width:28px;height:17px;line-height:17px;background:#d0d0e4;color:#1d1d2b;font-size:11px;text-align:center;-webkit-text-stroke:0.3px;"></div>
<div class="a t" style="left:1840px;top:11px;width:9px;height:17px;line-height:17px;background:#d0d0e4;color:#1d1d2b;font-size:11px;text-align:center;-webkit-text-stroke:0.3px;"></div>
<div class="a" style="left:1840px;top:19px;width:9px;height:1px;background:#555670;"></div>
<div class="a" style="left:1866px;top:13px;width:2px;height:13px;background:#3f3f6c;"></div>
<div class="a" style="left:1871px;top:13px;width:2px;height:13px;background:#3f3f6c;"></div>
<div class="a" style="left:1876px;top:13px;width:2px;height:13px;background:#3f3f6c;"></div>
<div class="a" style="left:1887px;top:13px;width:14px;height:2.2px;background:#f9b32c;"></div>
<div class="a" style="left:1887px;top:18.5px;width:14px;height:2.2px;background:#f9b32c;"></div>
<div class="a" style="left:1887px;top:24px;width:14px;height:2.2px;background:#f9b32c;"></div>
<div class="a t" style="left:1022px;top:117px;font-size:10.5px;color:#10302a;width:30px;height:15px;line-height:15px;">White</div>
<div class="a t" style="left:323px;top:312px;font-size:10.5px;color:#3a1030;width:218px;height:15px;line-height:15px;">gleetch</div>
<div class="a t" style="left:629px;top:312px;font-size:10.5px;color:#3a1030;width:47px;height:15px;line-height:15px;">gleetch</div>
<div class="a t" style="left:793px;top:312px;font-size:10.5px;color:#3a1030;width:68px;height:15px;line-height:15px;">gleetch</div>
<div class="a t" style="left:865px;top:312px;font-size:10.5px;color:#3a1030;width:60px;height:15px;line-height:15px;">gleetch</div>
<div class="a t" style="left:1355px;top:312px;font-size:10.5px;color:#3a1030;width:12px;height:15px;line-height:15px;">Gh</div>
<div class="a t" style="left:865px;top:504px;font-size:10.5px;color:#0d2e2a;height:15px;line-height:15px;">Riser i hardly know her</div>
<svg width="1908" height="1074" viewBox="0 0 1908 1074" style="pointer-events:none">
<polygon points="28,16.5 35,16.5 31.5,21" fill="#4a4b7c"/>
<circle cx="180" cy="20" r="4" fill="#111"/><path d="M172 24 Q172 14 179 14" stroke="#111" stroke-width="1.5" fill="none"/>
<circle cx="218" cy="14" r="2.3" fill="#e51f2a"/>
<circle cx="350" cy="19.5" r="3.3" fill="none" stroke="#111" stroke-width="1.2"/><circle cx="358.5" cy="19.5" r="3.6" fill="#111"/><polygon points="372,18 377,18 374.5,21" fill="#111"/>
<polygon points="419,18 424,18 421.5,21" fill="#111"/>
<polygon points="502,18 507,18 504.5,21" fill="#555"/>
<polygon points="574,18 579,18 576.5,21" fill="#555"/>
<path d="M705 19.5 H713 M710 16.5 L713 19.5 L710 22.5" stroke="#111" stroke-width="1.4" fill="none"/><path d="M715 19.5 H721" stroke="#111" stroke-width="1" stroke-dasharray="1.5,1.5"/>
<polygon points="826,12 826,27 841,19.5" fill="#1ed37c"/>
<circle cx="879.5" cy="19.5" r="6.5" fill="#0e0e12"/>
<path d="M913 14.5 V24.5 M908 19.5 H918" stroke="#111" stroke-width="1.5"/>
<circle cx="929" cy="23" r="2" fill="none" stroke="#111" stroke-width="1.1"/><circle cx="936" cy="16" r="2" fill="none" stroke="#111" stroke-width="1.1"/><path d="M930.5 21.5 L934.5 17.5" stroke="#111" stroke-width="1.1"/>
<path d="M947 19.5 H956 M950.5 16 L947 19.5 L950.5 23" stroke="#111" stroke-width="1.4" fill="none"/>
<path d="M965 17 V14.5 H967.5 M973.5 14.5 H976 V17 M976 22 V24.5 H973.5 M967.5 24.5 H965 V22" stroke="#111" stroke-width="1.1" fill="none"/>
<circle cx="989.5" cy="19.5" r="5" fill="none" stroke="#111" stroke-width="1.2"/>
<path d="M1137 15 H1142 Q1145 15 1147 20 Q1149 24 1152 24 H1153" stroke="#111" stroke-width="1.4" fill="none"/>
<path d="M1161 21 V15 H1174 V23 H1166" stroke="#111" stroke-width="1.5" fill="none"/><path d="M1168 20.5 L1165.5 23 L1168 25.5" stroke="#111" stroke-width="1.5" fill="none"/>
<path d="M1183 24 H1185 Q1188 24 1190 19 Q1192 15 1195 15 H1197" stroke="#111" stroke-width="1.4" fill="none"/>
<path d="M1600 25 L1601 22 L1608 14.5 L1610.5 17 L1603 24.5 Z" fill="#111"/><rect x="1600" y="25.5" width="11" height="1.2" fill="#111"/>
<rect x="1618.5" y="14" width="12" height="11" fill="none" stroke="#111" stroke-width="1.2"/><rect x="1621.5" y="14" width="1.5" height="7" fill="#111"/><rect x="1624.5" y="14" width="1.5" height="7" fill="#111"/><rect x="1627.5" y="14" width="1.5" height="7" fill="#111"/>
<polygon points="1800,18 1805,18 1802.5,21" fill="#111"/>
<circle cx="1904.5" cy="4.5" r="2.8" fill="#f9b32c"/>
<rect x="256" y="43.5" width="122" height="12" rx="2.5" fill="none" stroke="#22234a" stroke-width="1.6"/>
<path d="M168 79.5 L176 83.5 L168 87.5" fill="none" stroke="#222" stroke-width="1.1"/>
<path d="M1303 79.5 L1295 83.5 L1303 87.5" fill="none" stroke="#222" stroke-width="1.1"/>
<path d="M295 89.5 L303 94.5 L295 99.5 Z" fill="#f6f6fa" stroke="#222" stroke-width="1"/>
<path d="M800 89.5 L808 94.5 L800 99.5 Z" fill="#f6f6fa" stroke="#222" stroke-width="1"/>
<path d="M1053 89.5 L1061 94.5 L1053 99.5 Z" fill="#f6f6fa" stroke="#222" stroke-width="1"/>
<polygon points="775,95 783,95 779,99" fill="#22d3ee"/>
<path d="M2.0 156.0 L998.8 156.0 L998.8 160.0 L1010.0 158.0 L1015.0 156.0 L1015.0 160.0 L1030.8 163.0 L1053.6 167.0 L1058.0 167.0 L1064.8 165.0 L1070.9 165.0 L1080.8 162.0 L1082.9 156.0 L1543.0 156.0" fill="none" stroke="#e8363c" stroke-width="1.8" stroke-linejoin="round"/>
<circle cx="998.8" cy="156.0" r="2.4" fill="#fff" stroke="#e8363c" stroke-width="1.5"/>
<circle cx="998.8" cy="160.0" r="2.4" fill="#fff" stroke="#e8363c" stroke-width="1.5"/>
<circle cx="1010.0" cy="158.0" r="2.4" fill="#fff" stroke="#e8363c" stroke-width="1.5"/>
<circle cx="1015.0" cy="156.0" r="2.4" fill="#fff" stroke="#e8363c" stroke-width="1.5"/>
<circle cx="1015.0" cy="160.0" r="2.4" fill="#fff" stroke="#e8363c" stroke-width="1.5"/>
<circle cx="1030.8" cy="163.0" r="2.4" fill="#fff" stroke="#e8363c" stroke-width="1.5"/>
<circle cx="1053.6" cy="167.0" r="2.4" fill="#fff" stroke="#e8363c" stroke-width="1.5"/>
<circle cx="1058.0" cy="167.0" r="2.4" fill="#fff" stroke="#e8363c" stroke-width="1.5"/>
<circle cx="1064.8" cy="165.0" r="2.4" fill="#fff" stroke="#e8363c" stroke-width="1.5"/>
<circle cx="1070.9" cy="165.0" r="2.4" fill="#fff" stroke="#e8363c" stroke-width="1.5"/>
<circle cx="1080.8" cy="162.0" r="2.4" fill="#fff" stroke="#e8363c" stroke-width="1.5"/>
<circle cx="1082.9" cy="156.0" r="2.4" fill="#fff" stroke="#e8363c" stroke-width="1.5"/>
<path d="M2 289 L221 289 L244.7 284.7 C270 270 300 250 327 238.7 L363.8 231.8 L368.5 233.7 L381.4 254.8 L390.6 263 L397.8 264.5 L408.8 264.5 L439.6 259.8 L458.8 259.8 L474.8 260.8 L502.5 277.7 L519.8 282.5 L528.9 282.5 C550 280 570 272 589.6 264.5 L629.9 262.6 L649 262.6 L673.9 279.6 L690.9 286.5 L703.8 286.5 L715.7 285.6 L749.4 282.5 L750.6 279.6 L769.8 270.8 L801.9 265.5 L828.6 265.5 L838.7 268.9 L869.8 284.7 L889.6 288.7 L1543 288.7" fill="none" stroke="#e8363c" stroke-width="1.8" stroke-linejoin="round"/>
<circle cx="221.0" cy="289.0" r="2.4" fill="#fff" stroke="#e8363c" stroke-width="1.5"/>
<circle cx="244.7" cy="284.7" r="2.4" fill="#fff" stroke="#e8363c" stroke-width="1.5"/>
<circle cx="327.0" cy="238.7" r="2.4" fill="#fff" stroke="#e8363c" stroke-width="1.5"/>
<circle cx="363.8" cy="231.8" r="2.4" fill="#fff" stroke="#e8363c" stroke-width="1.5"/>
<circle cx="368.5" cy="233.7" r="2.4" fill="#fff" stroke="#e8363c" stroke-width="1.5"/>
<circle cx="381.4" cy="254.8" r="2.4" fill="#fff" stroke="#e8363c" stroke-width="1.5"/>
<circle cx="390.6" cy="263.0" r="2.4" fill="#fff" stroke="#e8363c" stroke-width="1.5"/>
<circle cx="397.8" cy="264.5" r="2.4" fill="#fff" stroke="#e8363c" stroke-width="1.5"/>
<circle cx="408.8" cy="264.5" r="2.4" fill="#fff" stroke="#e8363c" stroke-width="1.5"/>
<circle cx="439.6" cy="259.8" r="2.4" fill="#fff" stroke="#e8363c" stroke-width="1.5"/>
<circle cx="458.8" cy="259.8" r="2.4" fill="#fff" stroke="#e8363c" stroke-width="1.5"/>
<circle cx="474.8" cy="260.8" r="2.4" fill="#fff" stroke="#e8363c" stroke-width="1.5"/>
<circle cx="502.5" cy="277.7" r="2.4" fill="#fff" stroke="#e8363c" stroke-width="1.5"/>
<circle cx="519.8" cy="282.5" r="2.4" fill="#fff" stroke="#e8363c" stroke-width="1.5"/>
<circle cx="528.9" cy="282.5" r="2.4" fill="#fff" stroke="#e8363c" stroke-width="1.5"/>
<circle cx="589.6" cy="264.5" r="2.4" fill="#fff" stroke="#e8363c" stroke-width="1.5"/>
<circle cx="629.9" cy="262.6" r="2.4" fill="#fff" stroke="#e8363c" stroke-width="1.5"/>
<circle cx="649.0" cy="262.6" r="2.4" fill="#fff" stroke="#e8363c" stroke-width="1.5"/>
<circle cx="673.9" cy="279.6" r="2.4" fill="#fff" stroke="#e8363c" stroke-width="1.5"/>
<circle cx="690.9" cy="286.5" r="2.4" fill="#fff" stroke="#e8363c" stroke-width="1.5"/>
<circle cx="703.8" cy="286.5" r="2.4" fill="#fff" stroke="#e8363c" stroke-width="1.5"/>
<circle cx="715.7" cy="285.6" r="2.4" fill="#fff" stroke="#e8363c" stroke-width="1.5"/>
<circle cx="749.4" cy="282.5" r="2.4" fill="#fff" stroke="#e8363c" stroke-width="1.5"/>
<circle cx="750.6" cy="279.6" r="2.4" fill="#fff" stroke="#e8363c" stroke-width="1.5"/>
<circle cx="769.8" cy="270.8" r="2.4" fill="#fff" stroke="#e8363c" stroke-width="1.5"/>
<circle cx="801.9" cy="265.5" r="2.4" fill="#fff" stroke="#e8363c" stroke-width="1.5"/>
<circle cx="828.6" cy="265.5" r="2.4" fill="#fff" stroke="#e8363c" stroke-width="1.5"/>
<circle cx="838.7" cy="268.9" r="2.4" fill="#fff" stroke="#e8363c" stroke-width="1.5"/>
<circle cx="869.8" cy="284.7" r="2.4" fill="#fff" stroke="#e8363c" stroke-width="1.5"/>
<circle cx="889.6" cy="288.7" r="2.4" fill="#fff" stroke="#e8363c" stroke-width="1.5"/>
<path d="M2 363 L294 363 L322.9 357 L524.9 347 L616.9 357 L763 363 L861.9 354 L925 360 L987.6 395.6 C1030 392 1048 385 1051.3 363 L1543 363" fill="none" stroke="#e8363c" stroke-width="1.8" stroke-linejoin="round"/>
<circle cx="294.0" cy="363.0" r="2.4" fill="#fff" stroke="#e8363c" stroke-width="1.5"/>
<circle cx="322.9" cy="357.0" r="2.4" fill="#fff" stroke="#e8363c" stroke-width="1.5"/>
<circle cx="524.9" cy="347.0" r="2.4" fill="#fff" stroke="#e8363c" stroke-width="1.5"/>
<circle cx="616.9" cy="357.0" r="2.4" fill="#fff" stroke="#e8363c" stroke-width="1.5"/>
<circle cx="763.0" cy="363.0" r="2.4" fill="#fff" stroke="#e8363c" stroke-width="1.5"/>
<circle cx="861.9" cy="354.0" r="2.4" fill="#fff" stroke="#e8363c" stroke-width="1.5"/>
<circle cx="925.0" cy="360.0" r="2.4" fill="#fff" stroke="#e8363c" stroke-width="1.5"/>
<circle cx="987.6" cy="395.6" r="2.4" fill="#fff" stroke="#e8363c" stroke-width="1.5"/>
<circle cx="1051.3" cy="363.0" r="2.4" fill="#fff" stroke="#e8363c" stroke-width="1.5"/>
<path d="M2 444 L357 444 L440.8 427 L545.6 439.7 L619.5 431.8 L619.5 408.8 L641 407 C645 430 648 450 651.7 452 L663.5 452 C670 440 675 420 679.8 414 L801.8 427.9 C815 435 828 450 835.6 457.8 L874.4 452 C880 440 885 420 894 418.7 C905 440 915 455 932.6 462 L1051.3 464.6 L1051.3 431.5 L1543 431.5" fill="none" stroke="#e8363c" stroke-width="1.8" stroke-linejoin="round"/>
<circle cx="357.0" cy="444.0" r="2.4" fill="#fff" stroke="#e8363c" stroke-width="1.5"/>
<circle cx="440.8" cy="427.0" r="2.4" fill="#fff" stroke="#e8363c" stroke-width="1.5"/>
<circle cx="545.6" cy="439.7" r="2.4" fill="#fff" stroke="#e8363c" stroke-width="1.5"/>
<circle cx="619.5" cy="431.8" r="2.4" fill="#fff" stroke="#e8363c" stroke-width="1.5"/>
<circle cx="619.5" cy="408.8" r="2.4" fill="#fff" stroke="#e8363c" stroke-width="1.5"/>
<circle cx="641.0" cy="407.0" r="2.4" fill="#fff" stroke="#e8363c" stroke-width="1.5"/>
<circle cx="651.7" cy="452.0" r="2.4" fill="#fff" stroke="#e8363c" stroke-width="1.5"/>
<circle cx="663.5" cy="452.0" r="2.4" fill="#fff" stroke="#e8363c" stroke-width="1.5"/>
<circle cx="679.8" cy="414.0" r="2.4" fill="#fff" stroke="#e8363c" stroke-width="1.5"/>
<circle cx="801.8" cy="427.9" r="2.4" fill="#fff" stroke="#e8363c" stroke-width="1.5"/>
<circle cx="835.6" cy="457.8" r="2.4" fill="#fff" stroke="#e8363c" stroke-width="1.5"/>
<circle cx="874.4" cy="452.0" r="2.4" fill="#fff" stroke="#e8363c" stroke-width="1.5"/>
<circle cx="894.0" cy="418.7" r="2.4" fill="#fff" stroke="#e8363c" stroke-width="1.5"/>
<circle cx="932.6" cy="462.0" r="2.4" fill="#fff" stroke="#e8363c" stroke-width="1.5"/>
<circle cx="1051.3" cy="431.5" r="2.4" fill="#fff" stroke="#e8363c" stroke-width="1.5"/>
<path d="M2.0 484.0 L319.4 484.0 L344.9 485.0 L382.9 491.0 L404.6 492.0 L417.7 492.0 L440.8 491.0 L449.7 486.6 L459.6 486.6 L462.8 484.5 L489.0 481.6 L506.0 478.2 L517.3 478.7 L533.8 478.2 L542.2 478.2 L557.0 484.0 L567.0 492.0 L567.0 484.0 L636.5 484.0 L636.5 486.0 L648.3 482.6 L668.8 476.0 L672.0 479.5 L672.0 484.0 L847.4 484.0 L847.4 486.0 L858.0 482.6 L866.3 480.8 L885.0 477.7 L903.8 477.7 L903.8 484.0 L1543.0 484.0" fill="none" stroke="#e8363c" stroke-width="1.8" stroke-linejoin="round"/>
<circle cx="319.4" cy="484.0" r="2.4" fill="#fff" stroke="#e8363c" stroke-width="1.5"/>
<circle cx="344.9" cy="485.0" r="2.4" fill="#fff" stroke="#e8363c" stroke-width="1.5"/>
<circle cx="382.9" cy="491.0" r="2.4" fill="#fff" stroke="#e8363c" stroke-width="1.5"/>
<circle cx="404.6" cy="492.0" r="2.4" fill="#fff" stroke="#e8363c" stroke-width="1.5"/>
<circle cx="417.7" cy="492.0" r="2.4" fill="#fff" stroke="#e8363c" stroke-width="1.5"/>
<circle cx="440.8" cy="491.0" r="2.4" fill="#fff" stroke="#e8363c" stroke-width="1.5"/>
<circle cx="449.7" cy="486.6" r="2.4" fill="#fff" stroke="#e8363c" stroke-width="1.5"/>
<circle cx="459.6" cy="486.6" r="2.4" fill="#fff" stroke="#e8363c" stroke-width="1.5"/>
<circle cx="462.8" cy="484.5" r="2.4" fill="#fff" stroke="#e8363c" stroke-width="1.5"/>
<circle cx="489.0" cy="481.6" r="2.4" fill="#fff" stroke="#e8363c" stroke-width="1.5"/>
<circle cx="506.0" cy="478.2" r="2.4" fill="#fff" stroke="#e8363c" stroke-width="1.5"/>
<circle cx="517.3" cy="478.7" r="2.4" fill="#fff" stroke="#e8363c" stroke-width="1.5"/>
<circle cx="533.8" cy="478.2" r="2.4" fill="#fff" stroke="#e8363c" stroke-width="1.5"/>
<circle cx="542.2" cy="478.2" r="2.4" fill="#fff" stroke="#e8363c" stroke-width="1.5"/>
<circle cx="557.0" cy="484.0" r="2.4" fill="#fff" stroke="#e8363c" stroke-width="1.5"/>
<circle cx="567.0" cy="492.0" r="2.4" fill="#fff" stroke="#e8363c" stroke-width="1.5"/>
<circle cx="567.0" cy="484.0" r="2.4" fill="#fff" stroke="#e8363c" stroke-width="1.5"/>
<circle cx="636.5" cy="484.0" r="2.4" fill="#fff" stroke="#e8363c" stroke-width="1.5"/>
<circle cx="636.5" cy="486.0" r="2.4" fill="#fff" stroke="#e8363c" stroke-width="1.5"/>
<circle cx="648.3" cy="482.6" r="2.4" fill="#fff" stroke="#e8363c" stroke-width="1.5"/>
<circle cx="668.8" cy="476.0" r="2.4" fill="#fff" stroke="#e8363c" stroke-width="1.5"/>
<circle cx="672.0" cy="479.5" r="2.4" fill="#fff" stroke="#e8363c" stroke-width="1.5"/>
<circle cx="672.0" cy="484.0" r="2.4" fill="#fff" stroke="#e8363c" stroke-width="1.5"/>
<circle cx="847.4" cy="484.0" r="2.4" fill="#fff" stroke="#e8363c" stroke-width="1.5"/>
<circle cx="847.4" cy="486.0" r="2.4" fill="#fff" stroke="#e8363c" stroke-width="1.5"/>
<circle cx="858.0" cy="482.6" r="2.4" fill="#fff" stroke="#e8363c" stroke-width="1.5"/>
<circle cx="866.3" cy="480.8" r="2.4" fill="#fff" stroke="#e8363c" stroke-width="1.5"/>
<circle cx="885.0" cy="477.7" r="2.4" fill="#fff" stroke="#e8363c" stroke-width="1.5"/>
<circle cx="903.8" cy="477.7" r="2.4" fill="#fff" stroke="#e8363c" stroke-width="1.5"/>
<circle cx="903.8" cy="484.0" r="2.4" fill="#fff" stroke="#e8363c" stroke-width="1.5"/>
<path d="M925.5 566.0 L1030.9 522.0 L1051.3 566.0" fill="none" stroke="#e8363c" stroke-width="1.8" stroke-linejoin="round"/>
<circle cx="1030.9" cy="522.0" r="2.4" fill="#fff" stroke="#e8363c" stroke-width="1.5"/>
<path d="M2.0 604.2 L420.0 604.2 L566.8 619.6 L673.2 591.0 L798.9 604.2 L931.0 604.2 L1040.4 616.2 L1051.7 604.2 L1543.0 604.2" fill="none" stroke="#e8363c" stroke-width="1.8" stroke-linejoin="round"/>
<circle cx="420.0" cy="604.2" r="2.4" fill="#fff" stroke="#e8363c" stroke-width="1.5"/>
<circle cx="566.8" cy="619.6" r="2.4" fill="#fff" stroke="#e8363c" stroke-width="1.5"/>
<circle cx="673.2" cy="591.0" r="2.4" fill="#fff" stroke="#e8363c" stroke-width="1.5"/>
<circle cx="798.9" cy="604.2" r="2.4" fill="#fff" stroke="#e8363c" stroke-width="1.5"/>
<circle cx="931.0" cy="604.2" r="2.4" fill="#fff" stroke="#e8363c" stroke-width="1.5"/>
<circle cx="1040.4" cy="616.2" r="2.4" fill="#fff" stroke="#e8363c" stroke-width="1.5"/>
<circle cx="1051.7" cy="604.2" r="2.4" fill="#fff" stroke="#e8363c" stroke-width="1.5"/>
<path d="M2.0 658.1 L577.7 658.1 L798.9 651.0 L1051.7 658.1 L1543.0 658.1" fill="none" stroke="#e8363c" stroke-width="1.8" stroke-linejoin="round"/>
<circle cx="577.7" cy="658.1" r="2.4" fill="#fff" stroke="#e8363c" stroke-width="1.5"/>
<circle cx="798.9" cy="651.0" r="2.4" fill="#fff" stroke="#e8363c" stroke-width="1.5"/>
<circle cx="1051.7" cy="658.1" r="2.4" fill="#fff" stroke="#e8363c" stroke-width="1.5"/>
<path d="M2.0 700.0 L931.0 700.0 L980.8 702.3 L1026.4 704.9 L1051.7 711.0 L1051.7 700.0 L1543.0 700.0" fill="none" stroke="#e8363c" stroke-width="1.8" stroke-linejoin="round"/>
<circle cx="931.0" cy="700.0" r="2.4" fill="#fff" stroke="#e8363c" stroke-width="1.5"/>
<circle cx="980.8" cy="702.3" r="2.4" fill="#fff" stroke="#e8363c" stroke-width="1.5"/>
<circle cx="1026.4" cy="704.9" r="2.4" fill="#fff" stroke="#e8363c" stroke-width="1.5"/>
<circle cx="1051.7" cy="711.0" r="2.4" fill="#fff" stroke="#e8363c" stroke-width="1.5"/>
<circle cx="1051.7" cy="700.0" r="2.4" fill="#fff" stroke="#e8363c" stroke-width="1.5"/>
<path d="M2 776 L294 776 C450 790 600 791 673.2 791 C850 791 980 785 1051.7 775.8 L1543 775.8" fill="none" stroke="#e8363c" stroke-width="1.8" stroke-linejoin="round"/>
<circle cx="294.0" cy="776.0" r="2.4" fill="#fff" stroke="#e8363c" stroke-width="1.5"/>
<circle cx="673.2" cy="791.0" r="2.4" fill="#fff" stroke="#e8363c" stroke-width="1.5"/>
<circle cx="1051.7" cy="775.8" r="2.4" fill="#fff" stroke="#e8363c" stroke-width="1.5"/>
<polygon points="775,827 783,827 779,822" fill="#22d3ee"/>
<rect x="294" y="820" width="1" height="5" fill="#e03030" />
<rect x="673" y="820" width="1" height="5" fill="#e03030" />
<rect x="1052" y="820" width="1" height="5" fill="#e03030" />
<rect x="1548" y="64.5" width="27" height="13" rx="6.5" fill="#f6f6fa" stroke="#222" stroke-width="1"/>
<rect x="1587" y="65" width="23" height="12" fill="#f9b32c" stroke="#222" stroke-width="0.8"/>
<path d="M1595.5 74 L1601 68.5" stroke="#111" stroke-width="1.3"/><circle cx="1595.5" cy="74" r="1.7" fill="#111"/><circle cx="1601" cy="68.5" r="1.7" fill="#111"/>
<rect x="1614" y="65" width="23" height="12" fill="#f6f6fa" stroke="#222" stroke-width="0.8"/>
<rect x="1622" y="70" width="7" height="5" fill="#111"/><path d="M1623.5 70 V68.5 A2 2 0 0 1 1627.5 68.5 V70" fill="none" stroke="#111" stroke-width="1.2"/>
<circle cx="1554" cy="89.5" r="6" fill="#f6f6fa" stroke="#222" stroke-width="1"/>
<circle cx="1570" cy="89.5" r="6" fill="#f6f6fa" stroke="#222" stroke-width="1"/>
<path d="M1558 89.5 H1550.5 M1553.5 86.5 L1550.5 89.5 L1553.5 92.5" stroke="#111" stroke-width="1.3" fill="none"/>
<path d="M1566 89.5 H1573.5 M1570.5 86.5 L1573.5 89.5 L1570.5 92.5" stroke="#111" stroke-width="1.3" fill="none"/>
<circle cx="1693.5" cy="105.5" r="5" fill="#f8f8fc" stroke="#2a2a40" stroke-width="1"/>
<path d="M1690.5 105.5 H1696.5" stroke="#111" stroke-width="1.4"/>
<path d="M1693.5 102.5 V108.5" stroke="#111" stroke-width="1.4"/>
<rect x="1707.5" y="102.5" width="69" height="9" fill="#cdcee2" stroke="#2c2c52" stroke-width="1"/>
<circle cx="1557.5" cy="124.8" r="6" fill="none" stroke="#10302a" stroke-width="1.2"/>
<polygon points="1554.0,123.3 1561.0,123.3 1557.5,127.8" fill="#10302a"/>
<rect x="1551.5" y="135.5" width="148" height="12" fill="#f8f8fc" stroke="#2c2c52" stroke-width="1"/>
<circle cx="1557" cy="141.5" r="2.6" fill="#e52b2b" stroke="#3a0a0a" stroke-width="0.5"/>
<polygon points="1691,139 1697.5,139 1694.25,144" fill="#111"/>
<rect x="1551.5" y="152.5" width="148" height="12" fill="#f8f8fc" stroke="#2c2c52" stroke-width="1"/>
<circle cx="1557" cy="158.5" r="2.6" fill="#e52b2b" stroke="#3a0a0a" stroke-width="0.5"/>
<polygon points="1691,156 1697.5,156 1694.25,161" fill="#111"/>
<circle cx="1693.5" cy="193.5" r="5" fill="#f8f8fc" stroke="#2a2a40" stroke-width="1"/>
<path d="M1690.5 193.5 H1696.5" stroke="#111" stroke-width="1.4"/>
<path d="M1693.5 190.5 V196.5" stroke="#111" stroke-width="1.4"/>
<rect x="1707.5" y="118.5" width="69" height="12" fill="#f8f8fc" stroke="#2c2c52" stroke-width="1"/>
<polygon points="1768,122 1774.5,122 1771.25,127" fill="#111"/>
<rect x="1707.5" y="135.5" width="69" height="12" fill="#f8f8fc" stroke="#2c2c52" stroke-width="1"/>
<rect x="1710" y="138" width="3" height="7" fill="#23233c"/>
<polygon points="1768,139 1774.5,139 1771.25,144" fill="#111"/>
<rect x="1707.5" y="152.5" width="16" height="12" fill="#f8f8fc" stroke="#2c2c52" stroke-width="1"/>
<rect x="1727.5" y="152.5" width="26" height="12" fill="#f8f8fc" stroke="#2c2c52" stroke-width="1"/>
<rect x="1757.5" y="152.5" width="19" height="12" fill="#fbb52e" stroke="#2c2c52" stroke-width="1"/>
<rect x="1707.5" y="169.5" width="69" height="12" fill="#f8f8fc" stroke="#2c2c52" stroke-width="1"/>
<polygon points="1768,173 1774.5,173 1771.25,178" fill="#111"/>
<rect x="1707.5" y="186.5" width="69" height="12" fill="#cdcee2" stroke="#2c2c52" stroke-width="1"/>
<rect x="1783.5" y="118.5" width="45" height="12" fill="#fbb52e" stroke="#2c2c52" stroke-width="1"/>
<rect x="1833.5" y="118.5" width="20" height="12" fill="#f8f8fc" stroke="#2c2c52" stroke-width="1"/>
<rect x="1858.5" y="118.5" width="20" height="12" fill="#f8f8fc" stroke="#2c2c52" stroke-width="1"/>
<circle cx="1868.5" cy="124.5" r="3.8" fill="#111"/>
<rect x="1783.5" y="135.5" width="45" height="12" fill="#f8f8fc" stroke="#2c2c52" stroke-width="1"/>
<rect x="1784" y="136" width="28.2" height="11" fill="#00c4d6"/>
<circle cx="1786" cy="137.5" r="2.4" fill="#e52b2b"/>
<rect x="1833.5" y="135.5" width="45" height="12" fill="#f8f8fc" stroke="#2c2c52" stroke-width="1"/>
<rect x="1783.5" y="152.5" width="29" height="12" fill="#f8f8fc" stroke="#2c2c52" stroke-width="1"/>
<rect x="1816.5" y="152.5" width="29" height="12" fill="#f8f8fc" stroke="#2c2c52" stroke-width="1"/>
<rect x="1849.5" y="152.5" width="29" height="12" fill="#f8f8fc" stroke="#2c2c52" stroke-width="1"/>
<rect x="1783.5" y="169.5" width="29" height="12" fill="#f8f8fc" stroke="#2c2c52" stroke-width="1"/>
<circle cx="1557.5" cy="212.8" r="6" fill="none" stroke="#10302a" stroke-width="1.2"/>
<polygon points="1554.0,211.3 1561.0,211.3 1557.5,215.8" fill="#10302a"/>
<rect x="1551.5" y="223.5" width="148" height="12" fill="#f8f8fc" stroke="#2c2c52" stroke-width="1"/>
<circle cx="1557" cy="229.5" r="2.6" fill="#e52b2b" stroke="#3a0a0a" stroke-width="0.5"/>
<polygon points="1691,227 1697.5,227 1694.25,232" fill="#111"/>
<rect x="1551.5" y="240.5" width="148" height="12" fill="#f8f8fc" stroke="#2c2c52" stroke-width="1"/>
<circle cx="1557" cy="246.5" r="2.6" fill="#e52b2b" stroke="#3a0a0a" stroke-width="0.5"/>
<polygon points="1691,244 1697.5,244 1694.25,249" fill="#111"/>
<circle cx="1693.5" cy="281.5" r="5" fill="#f8f8fc" stroke="#2a2a40" stroke-width="1"/>
<path d="M1690.5 281.5 H1696.5" stroke="#111" stroke-width="1.4"/>
<path d="M1693.5 278.5 V284.5" stroke="#111" stroke-width="1.4"/>
<rect x="1707.5" y="206.5" width="69" height="12" fill="#f8f8fc" stroke="#2c2c52" stroke-width="1"/>
<polygon points="1768,210 1774.5,210 1771.25,215" fill="#111"/>
<rect x="1707.5" y="223.5" width="69" height="12" fill="#f8f8fc" stroke="#2c2c52" stroke-width="1"/>
<rect x="1710" y="226" width="1.5" height="7" fill="#23233c"/>
<polygon points="1768,227 1774.5,227 1771.25,232" fill="#111"/>
<rect x="1707.5" y="240.5" width="16" height="12" fill="#f8f8fc" stroke="#2c2c52" stroke-width="1"/>
<rect x="1727.5" y="240.5" width="26" height="12" fill="#fbb52e" stroke="#2c2c52" stroke-width="1"/>
<rect x="1757.5" y="240.5" width="19" height="12" fill="#f8f8fc" stroke="#2c2c52" stroke-width="1"/>
<rect x="1707.5" y="257.5" width="69" height="12" fill="#f8f8fc" stroke="#2c2c52" stroke-width="1"/>
<polygon points="1768,261 1774.5,261 1771.25,266" fill="#111"/>
<rect x="1707.5" y="274.5" width="69" height="12" fill="#cdcee2" stroke="#2c2c52" stroke-width="1"/>
<rect x="1783.5" y="206.5" width="45" height="12" fill="#fbb52e" stroke="#2c2c52" stroke-width="1"/>
<rect x="1833.5" y="206.5" width="20" height="12" fill="#f8f8fc" stroke="#2c2c52" stroke-width="1"/>
<rect x="1858.5" y="206.5" width="20" height="12" fill="#f8f8fc" stroke="#2c2c52" stroke-width="1"/>
<circle cx="1868.5" cy="212.5" r="3.6" fill="#111"/><path d="M1868.5 212.5 V209 A3.5 3.5 0 0 1 1872 212.5 Z" fill="#f8f8fc"/>
<rect x="1783.5" y="223.5" width="45" height="12" fill="#f8f8fc" stroke="#2c2c52" stroke-width="1"/>
<rect x="1784" y="224" width="19.8" height="11" fill="#00c4d6"/>
<circle cx="1786" cy="225.5" r="2.4" fill="#e52b2b"/>
<rect x="1833.5" y="223.5" width="45" height="12" fill="#f8f8fc" stroke="#2c2c52" stroke-width="1"/>
<rect x="1783.5" y="240.5" width="29" height="12" fill="#f8f8fc" stroke="#2c2c52" stroke-width="1"/>
<rect x="1784" y="241" width="8.4" height="11" fill="#00c4d6"/>
<rect x="1816.5" y="240.5" width="29" height="12" fill="#f8f8fc" stroke="#2c2c52" stroke-width="1"/>
<rect x="1817" y="241" width="22.4" height="11" fill="#00c4d6"/>
<circle cx="1819" cy="242.5" r="2.4" fill="#e52b2b"/>
<rect x="1849.5" y="240.5" width="29" height="12" fill="#f8f8fc" stroke="#2c2c52" stroke-width="1"/>
<rect x="1783.5" y="257.5" width="29" height="12" fill="#f8f8fc" stroke="#2c2c52" stroke-width="1"/>
<circle cx="1557.5" cy="300.5" r="6" fill="none" stroke="#d8d8d8" stroke-width="1.2"/>
<polygon points="1555.0,297.0 1555.0,304.0 1561.0,300.5" fill="#d8d8d8"/>
<rect x="1707.5" y="294.5" width="69" height="12" fill="#cdcee2" stroke="#2c2c52" stroke-width="1"/>
<rect x="1783.5" y="294.5" width="45" height="12" fill="#fbb52e" stroke="#2c2c52" stroke-width="1"/>
<rect x="1833.5" y="294.5" width="20" height="12" fill="#f8f8fc" stroke="#2c2c52" stroke-width="1"/>
<rect x="1858.5" y="294.5" width="20" height="12" fill="#f8f8fc" stroke="#2c2c52" stroke-width="1"/>
<circle cx="1868.5" cy="300.5" r="3.6" fill="#111"/><path d="M1868.5 300.5 V297 A3.5 3.5 0 0 1 1872 300.5 Z" fill="#f8f8fc"/>
<circle cx="1551.5" cy="319.8" r="6" fill="none" stroke="#3a0f2a" stroke-width="1.2"/>
<polygon points="1548.0,318.3 1555.0,318.3 1551.5,322.8" fill="#3a0f2a"/>
<rect x="1548.5" y="330.5" width="151" height="12" fill="#f8f8fc" stroke="#2c2c52" stroke-width="1"/>
<circle cx="1554" cy="336.5" r="2.6" fill="#e52b2b" stroke="#3a0a0a" stroke-width="0.5"/>
<polygon points="1691,334 1697.5,334 1694.25,339" fill="#111"/>
<rect x="1548.5" y="347.5" width="151" height="12" fill="#f8f8fc" stroke="#2c2c52" stroke-width="1"/>
<circle cx="1554" cy="353.5" r="2.6" fill="#e52b2b" stroke="#3a0a0a" stroke-width="0.5"/>
<polygon points="1691,351 1697.5,351 1694.25,356" fill="#111"/>
<circle cx="1553.5" cy="388.5" r="5" fill="#f8f8fc" stroke="#2a2a40" stroke-width="1"/><polygon points="1550.5,386.5 1556.5,386.5 1553.5,391" fill="#111"/>
<circle cx="1693.5" cy="388.5" r="5" fill="#f8f8fc" stroke="#2a2a40" stroke-width="1"/>
<path d="M1690.5 388.5 H1696.5" stroke="#111" stroke-width="1.4"/>
<path d="M1693.5 385.5 V391.5" stroke="#111" stroke-width="1.4"/>
<circle cx="1693.5" cy="406.5" r="5" fill="#f8f8fc" stroke="#2a2a40" stroke-width="1"/>
<path d="M1690.5 406.5 H1696.5" stroke="#111" stroke-width="1.4"/>
<circle cx="1693.5" cy="475.5" r="5" fill="#f8f8fc" stroke="#2a2a40" stroke-width="1"/>
<path d="M1690.5 475.5 H1696.5" stroke="#111" stroke-width="1.4"/>
<rect x="1707.5" y="313.5" width="69" height="12" fill="#f8f8fc" stroke="#2c2c52" stroke-width="1"/>
<polygon points="1768,317 1774.5,317 1771.25,322" fill="#111"/>
<rect x="1707.5" y="330.5" width="69" height="12" fill="#f8f8fc" stroke="#2c2c52" stroke-width="1"/>
<rect x="1710" y="333" width="3" height="7" fill="#23233c"/>
<polygon points="1768,334 1774.5,334 1771.25,339" fill="#111"/>
<rect x="1707.5" y="347.5" width="16" height="12" fill="#f8f8fc" stroke="#2c2c52" stroke-width="1"/>
<rect x="1727.5" y="347.5" width="26" height="12" fill="#f8f8fc" stroke="#2c2c52" stroke-width="1"/>
<rect x="1757.5" y="347.5" width="19" height="12" fill="#fbb52e" stroke="#2c2c52" stroke-width="1"/>
<rect x="1707.5" y="364.5" width="69" height="12" fill="#f8f8fc" stroke="#2c2c52" stroke-width="1"/>
<polygon points="1768,368 1774.5,368 1771.25,373" fill="#111"/>
<rect x="1707.5" y="381.5" width="69" height="12" fill="#cdcee2" stroke="#2c2c52" stroke-width="1"/>
<rect x="1783.5" y="313.5" width="45" height="12" fill="#fbb52e" stroke="#2c2c52" stroke-width="1"/>
<rect x="1833.5" y="313.5" width="20" height="12" fill="#f8f8fc" stroke="#2c2c52" stroke-width="1"/>
<rect x="1858.5" y="313.5" width="20" height="12" fill="#f8f8fc" stroke="#2c2c52" stroke-width="1"/>
<circle cx="1868.5" cy="319.5" r="3.8" fill="#111"/>
<rect x="1783.5" y="330.5" width="45" height="12" fill="#f8f8fc" stroke="#2c2c52" stroke-width="1"/>
<rect x="1784" y="331" width="26.4" height="11" fill="#00c4d6"/>
<circle cx="1786" cy="332.5" r="2.4" fill="#e52b2b"/>
<rect x="1833.5" y="330.5" width="45" height="12" fill="#f8f8fc" stroke="#2c2c52" stroke-width="1"/>
<rect x="1834" y="331" width="13.2" height="11" fill="#00c4d6"/>
<circle cx="1836" cy="332.5" r="2.4" fill="#e52b2b"/>
<rect x="1783.5" y="347.5" width="29" height="12" fill="#f8f8fc" stroke="#2c2c52" stroke-width="1"/>
<rect x="1784" y="348" width="8.4" height="11" fill="#00c4d6"/>
<rect x="1816.5" y="347.5" width="29" height="12" fill="#f8f8fc" stroke="#2c2c52" stroke-width="1"/>
<rect x="1817" y="348" width="7.8" height="11" fill="#00c4d6"/>
<circle cx="1819" cy="349.5" r="2.4" fill="#e52b2b"/>
<rect x="1849.5" y="347.5" width="29" height="12" fill="#f8f8fc" stroke="#2c2c52" stroke-width="1"/>
<rect x="1850" y="348" width="5.6" height="11" fill="#00c4d6"/>
<circle cx="1852" cy="349.5" r="2.4" fill="#e52b2b"/>
<rect x="1783.5" y="364.5" width="29" height="12" fill="#f8f8fc" stroke="#2c2c52" stroke-width="1"/>
<circle cx="1551.5" cy="511.8" r="6" fill="none" stroke="#0b2a28" stroke-width="1.2"/>
<polygon points="1548.0,510.3 1555.0,510.3 1551.5,514.8" fill="#0b2a28"/>
<rect x="1548.5" y="522.5" width="151" height="12" fill="#f8f8fc" stroke="#2c2c52" stroke-width="1"/>
<circle cx="1554" cy="528.5" r="2.6" fill="#e52b2b" stroke="#3a0a0a" stroke-width="0.5"/>
<polygon points="1691,526 1697.5,526 1694.25,531" fill="#111"/>
<rect x="1548.5" y="539.5" width="151" height="12" fill="#f8f8fc" stroke="#2c2c52" stroke-width="1"/>
<circle cx="1554" cy="545.5" r="2.6" fill="#e52b2b" stroke="#3a0a0a" stroke-width="0.5"/>
<polygon points="1691,543 1697.5,543 1694.25,548" fill="#111"/>
<circle cx="1693.5" cy="563" r="5" fill="#f8f8fc" stroke="#2a2a40" stroke-width="1"/>
<path d="M1690.5 563 H1696.5" stroke="#111" stroke-width="1.4"/>
<path d="M1693.5 560 V566" stroke="#111" stroke-width="1.4"/>
<rect x="1707.5" y="505.5" width="69" height="12" fill="#f8f8fc" stroke="#2c2c52" stroke-width="1"/>
<rect x="1710" y="508" width="3" height="7" fill="#23233c"/>
<polygon points="1768,509 1774.5,509 1771.25,514" fill="#111"/>
<rect x="1707.5" y="522.5" width="16" height="12" fill="#f8f8fc" stroke="#2c2c52" stroke-width="1"/>
<rect x="1727.5" y="522.5" width="26" height="12" fill="#f8f8fc" stroke="#2c2c52" stroke-width="1"/>
<rect x="1757.5" y="522.5" width="19" height="12" fill="#fbb52e" stroke="#2c2c52" stroke-width="1"/>
<rect x="1707.5" y="539.5" width="69" height="12" fill="#f8f8fc" stroke="#2c2c52" stroke-width="1"/>
<polygon points="1768,543 1774.5,543 1771.25,548" fill="#111"/>
<rect x="1707.5" y="556.5" width="69" height="10" fill="#cdcee2" stroke="#2c2c52" stroke-width="1"/>
<rect x="1783.5" y="505.5" width="45" height="12" fill="#fbb52e" stroke="#2c2c52" stroke-width="1"/>
<rect x="1833.5" y="505.5" width="20" height="12" fill="#f8f8fc" stroke="#2c2c52" stroke-width="1"/>
<rect x="1858.5" y="505.5" width="20" height="12" fill="#f8f8fc" stroke="#2c2c52" stroke-width="1"/>
<circle cx="1868.5" cy="511.5" r="3.8" fill="#111"/>
<rect x="1783.5" y="522.5" width="45" height="12" fill="#f8f8fc" stroke="#2c2c52" stroke-width="1"/>
<rect x="1784" y="523" width="27.3" height="11" fill="#00c4d6"/>
<circle cx="1786" cy="524.5" r="2.4" fill="#e52b2b"/>
<rect x="1833.5" y="522.5" width="45" height="12" fill="#f8f8fc" stroke="#2c2c52" stroke-width="1"/>
<circle cx="1836" cy="524.5" r="2.4" fill="#e52b2b"/>
<rect x="1783.5" y="539.5" width="29" height="12" fill="#f8f8fc" stroke="#2c2c52" stroke-width="1"/>
<circle cx="1786" cy="541.5" r="2.4" fill="#e52b2b"/>
<rect x="1816.5" y="539.5" width="29" height="12" fill="#f8f8fc" stroke="#2c2c52" stroke-width="1"/>
<rect x="1817" y="540" width="11.2" height="11" fill="#00c4d6"/>
<rect x="1849.5" y="539.5" width="29" height="12" fill="#f8f8fc" stroke="#2c2c52" stroke-width="1"/>
<rect x="1783.5" y="556.5" width="29" height="12" fill="#f8f8fc" stroke="#2c2c52" stroke-width="1"/>
<circle cx="1552.5" cy="576.5" r="6" fill="none" stroke="#3a1010" stroke-width="1.2"/>
<polygon points="1549.0,575.0 1556.0,575.0 1552.5,579.5" fill="#3a1010"/>
<rect x="1548.5" y="587.5" width="151" height="12" fill="#f8f8fc" stroke="#2c2c52" stroke-width="1"/>
<circle cx="1554" cy="593.5" r="2.6" fill="#e52b2b" stroke="#3a0a0a" stroke-width="0.5"/>
<polygon points="1691,591 1697.5,591 1694.25,596" fill="#111"/>
<circle cx="1693.5" cy="611.5" r="5" fill="#f8f8fc" stroke="#2a2a40" stroke-width="1"/>
<path d="M1690.5 611.5 H1696.5" stroke="#111" stroke-width="1.4"/>
<path d="M1693.5 608.5 V614.5" stroke="#111" stroke-width="1.4"/>
<rect x="1707.5" y="570.5" width="69" height="12" fill="#f8f8fc" stroke="#2c2c52" stroke-width="1"/>
<polygon points="1768,574 1774.5,574 1771.25,579" fill="#111"/>
<rect x="1707.5" y="587.5" width="69" height="12" fill="#cdcee2" stroke="#2c2c52" stroke-width="1"/>
<rect x="1783.5" y="570.5" width="45" height="12" fill="#fbb52e" stroke="#2c2c52" stroke-width="1"/>
<rect x="1833.5" y="570.5" width="20" height="12" fill="#f8f8fc" stroke="#2c2c52" stroke-width="1"/>
<rect x="1858.5" y="570.5" width="20" height="12" fill="#fbb52e" stroke="#2c2c52" stroke-width="1"/>
<rect x="1783.5" y="587.5" width="45" height="12" fill="#f8f8fc" stroke="#2c2c52" stroke-width="1"/>
<rect x="1784" y="588" width="37.4" height="11" fill="#00c4d6"/>
<circle cx="1786" cy="589.5" r="2.4" fill="#e52b2b"/>
<rect x="1833.5" y="587.5" width="45" height="12" fill="#f8f8fc" stroke="#2c2c52" stroke-width="1"/>
<circle cx="1836" cy="589.5" r="2.4" fill="#e52b2b"/>
<rect x="1783.5" y="604.5" width="29" height="12" fill="#f8f8fc" stroke="#2c2c52" stroke-width="1"/>
<rect x="1816.5" y="604.5" width="29" height="12" fill="#f8f8fc" stroke="#2c2c52" stroke-width="1"/>
<rect x="1849.5" y="604.5" width="29" height="12" fill="#f8f8fc" stroke="#2c2c52" stroke-width="1"/>
<circle cx="1552.5" cy="631.5" r="6" fill="none" stroke="#3a1a08" stroke-width="1.2"/>
<polygon points="1549.0,630.0 1556.0,630.0 1552.5,634.5" fill="#3a1a08"/>
<rect x="1548.5" y="642.5" width="151" height="12" fill="#f8f8fc" stroke="#2c2c52" stroke-width="1"/>
<circle cx="1554" cy="648.5" r="2.6" fill="#e52b2b" stroke="#3a0a0a" stroke-width="0.5"/>
<polygon points="1691,646 1697.5,646 1694.25,651" fill="#111"/>
<circle cx="1693.5" cy="665.5" r="5" fill="#f8f8fc" stroke="#2a2a40" stroke-width="1"/>
<path d="M1690.5 665.5 H1696.5" stroke="#111" stroke-width="1.4"/>
<path d="M1693.5 662.5 V668.5" stroke="#111" stroke-width="1.4"/>
<rect x="1707.5" y="625.5" width="69" height="12" fill="#f8f8fc" stroke="#2c2c52" stroke-width="1"/>
<polygon points="1768,629 1774.5,629 1771.25,634" fill="#111"/>
<rect x="1707.5" y="642.5" width="69" height="12" fill="#cdcee2" stroke="#2c2c52" stroke-width="1"/>
<rect x="1783.5" y="625.5" width="45" height="12" fill="#fbb52e" stroke="#2c2c52" stroke-width="1"/>
<rect x="1833.5" y="625.5" width="20" height="12" fill="#f8f8fc" stroke="#2c2c52" stroke-width="1"/>
<rect x="1858.5" y="625.5" width="20" height="12" fill="#fbb52e" stroke="#2c2c52" stroke-width="1"/>
<rect x="1783.5" y="642.5" width="45" height="12" fill="#f8f8fc" stroke="#2c2c52" stroke-width="1"/>
<rect x="1784" y="643" width="37.4" height="11" fill="#00c4d6"/>
<circle cx="1786" cy="644.5" r="2.4" fill="#e52b2b"/>
<rect x="1833.5" y="642.5" width="45" height="12" fill="#f8f8fc" stroke="#2c2c52" stroke-width="1"/>
<circle cx="1836" cy="644.5" r="2.4" fill="#e52b2b"/>
<rect x="1783.5" y="659.5" width="29" height="12" fill="#f8f8fc" stroke="#2c2c52" stroke-width="1"/>
<rect x="1816.5" y="659.5" width="29" height="12" fill="#f8f8fc" stroke="#2c2c52" stroke-width="1"/>
<rect x="1849.5" y="659.5" width="29" height="12" fill="#f8f8fc" stroke="#2c2c52" stroke-width="1"/>
<circle cx="1552.5" cy="685.5" r="6" fill="none" stroke="#2a3010" stroke-width="1.2"/>
<polygon points="1549.0,684.0 1556.0,684.0 1552.5,688.5" fill="#2a3010"/>
<rect x="1548.5" y="696.5" width="151" height="12" fill="#f8f8fc" stroke="#2c2c52" stroke-width="1"/>
<circle cx="1554" cy="702.5" r="2.6" fill="#e52b2b" stroke="#3a0a0a" stroke-width="0.5"/>
<polygon points="1691,700 1697.5,700 1694.25,705" fill="#111"/>
<circle cx="1693.5" cy="719.5" r="5" fill="#f8f8fc" stroke="#2a2a40" stroke-width="1"/>
<path d="M1690.5 719.5 H1696.5" stroke="#111" stroke-width="1.4"/>
<path d="M1693.5 716.5 V722.5" stroke="#111" stroke-width="1.4"/>
<rect x="1707.5" y="679.5" width="69" height="12" fill="#f8f8fc" stroke="#2c2c52" stroke-width="1"/>
<polygon points="1768,683 1774.5,683 1771.25,688" fill="#111"/>
<rect x="1707.5" y="696.5" width="69" height="12" fill="#cdcee2" stroke="#2c2c52" stroke-width="1"/>
<rect x="1783.5" y="679.5" width="45" height="12" fill="#fbb52e" stroke="#2c2c52" stroke-width="1"/>
<rect x="1833.5" y="679.5" width="20" height="12" fill="#f8f8fc" stroke="#2c2c52" stroke-width="1"/>
<rect x="1858.5" y="679.5" width="20" height="12" fill="#fbb52e" stroke="#2c2c52" stroke-width="1"/>
<rect x="1783.5" y="696.5" width="45" height="12" fill="#f8f8fc" stroke="#2c2c52" stroke-width="1"/>
<rect x="1784" y="697" width="37.4" height="11" fill="#00c4d6"/>
<circle cx="1786" cy="698.5" r="2.4" fill="#e52b2b"/>
<rect x="1833.5" y="696.5" width="45" height="12" fill="#f8f8fc" stroke="#2c2c52" stroke-width="1"/>
<rect x="1783.5" y="713.5" width="29" height="12" fill="#f8f8fc" stroke="#2c2c52" stroke-width="1"/>
<rect x="1816.5" y="713.5" width="29" height="12" fill="#f8f8fc" stroke="#2c2c52" stroke-width="1"/>
<rect x="1849.5" y="713.5" width="29" height="12" fill="#f8f8fc" stroke="#2c2c52" stroke-width="1"/>
<circle cx="1552.5" cy="739.5" r="6" fill="none" stroke="#153028" stroke-width="1.2"/>
<polygon points="1550.0,736.0 1550.0,743.0 1556.0,739.5" fill="#153028"/>
<rect x="1707.5" y="733.5" width="69" height="12" fill="#cdcee2" stroke="#2c2c52" stroke-width="1"/>
<rect x="1783.5" y="733.5" width="45" height="12" fill="#fbb52e" stroke="#2c2c52" stroke-width="1"/>
<rect x="1833.5" y="733.5" width="20" height="12" fill="#f8f8fc" stroke="#2c2c52" stroke-width="1"/>
<rect x="1858.5" y="733.5" width="20" height="12" fill="#fbb52e" stroke="#2c2c52" stroke-width="1"/>
<circle cx="1552.5" cy="758.5" r="6" fill="none" stroke="#3a0a30" stroke-width="1.2"/>
<polygon points="1549.0,757.0 1556.0,757.0 1552.5,761.5" fill="#3a0a30"/>
<rect x="1548.5" y="769.5" width="151" height="12" fill="#f8f8fc" stroke="#2c2c52" stroke-width="1"/>
<circle cx="1554" cy="775.5" r="2.6" fill="#e52b2b" stroke="#3a0a0a" stroke-width="0.5"/>
<polygon points="1691,773 1697.5,773 1694.25,778" fill="#111"/>
<rect x="1548.5" y="788.5" width="68" height="12" fill="#f8f8fc" stroke="#2c2c52" stroke-width="1"/>
<rect x="1629.5" y="788.5" width="70" height="12" fill="#f8f8fc" stroke="#2c2c52" stroke-width="1"/>
<circle cx="1693.5" cy="810" r="5" fill="#f8f8fc" stroke="#2a2a40" stroke-width="1"/>
<path d="M1690.5 810 H1696.5" stroke="#111" stroke-width="1.4"/>
<path d="M1693.5 807 V813" stroke="#111" stroke-width="1.4"/>
<rect x="1707.5" y="752.5" width="69" height="12" fill="#f8f8fc" stroke="#2c2c52" stroke-width="1"/>
<rect x="1710" y="755" width="1.2" height="7" fill="#222"/><rect x="1713" y="755" width="1.2" height="7" fill="#222"/><rect x="1710" y="758" width="1.2" height="4" fill="#2c2"/><rect x="1713" y="758" width="1.2" height="4" fill="#2c2"/>
<polygon points="1768,756 1774.5,756 1771.25,761" fill="#111"/>
<rect x="1707.5" y="769.5" width="69" height="12" fill="#f8f8fc" stroke="#2c2c52" stroke-width="1"/>
<rect x="1710" y="772" width="1.2" height="7" fill="#222"/><rect x="1713" y="772" width="1.2" height="7" fill="#222"/><rect x="1710" y="775" width="1.2" height="4" fill="#2c2"/><rect x="1713" y="775" width="1.2" height="4" fill="#2c2"/>
<polygon points="1768,773 1774.5,773 1771.25,778" fill="#111"/>
<rect x="1783.5" y="752.5" width="45" height="12" fill="#f8f8fc" stroke="#2c2c52" stroke-width="1"/>
<rect x="1784" y="753" width="37.4" height="11" fill="#00c4d6"/>
<rect x="1833.5" y="752.5" width="45" height="12" fill="#f8f8fc" stroke="#2c2c52" stroke-width="1"/>
<rect x="1834" y="753" width="37.4" height="11" fill="#1e6ee6"/>
<rect x="1833.5" y="769.5" width="45" height="12" fill="#f8f8fc" stroke="#2c2c52" stroke-width="1"/>
<rect x="1896" y="104" width="5" height="62" rx="2.5" fill="#9a9bcb"/>
<rect x="1896" y="164" width="5" height="178" rx="2.5" fill="#595b92"/>
<rect x="1543" y="100" width="361" height="2" fill="#5d5f9e" />
<rect x="1543" y="114" width="361" height="2" fill="#5d5f9e" />
<rect x="1543" y="202" width="361" height="2" fill="#5d5f9e" />
<rect x="1543" y="290" width="361" height="2" fill="#5d5f9e" />
<rect x="1543" y="309" width="361" height="2" fill="#5d5f9e" />
<rect x="1543" y="501" width="361" height="2" fill="#5d5f9e" />
<rect x="1543" y="566" width="361" height="2" fill="#5d5f9e" />
<rect x="1543" y="621" width="361" height="2" fill="#5d5f9e" />
<rect x="1543" y="675" width="361" height="2" fill="#5d5f9e" />
<rect x="1543" y="729" width="361" height="2" fill="#5d5f9e" />
<rect x="1543" y="748" width="361" height="2" fill="#5d5f9e" />
<rect x="1543" y="819" width="361" height="2" fill="#5d5f9e" />
<rect x="1545" y="825" width="14" height="13" fill="#fbb52e" stroke="#222" stroke-width="0.8"/>
<rect x="1548" y="829.5" width="1" height="4" fill="#111" />
<rect x="1550" y="827.5" width="1" height="8" fill="#111" />
<rect x="1552" y="826.5" width="1" height="10" fill="#111" />
<rect x="1554" y="827.5" width="1" height="8" fill="#111" />
<rect x="1556" y="829.5" width="1" height="4" fill="#111" />
<rect x="1562.5" y="825.5" width="34" height="13" fill="#f8f8fc" stroke="#222" stroke-width="0.8"/><rect x="1563" y="826" width="9" height="12" fill="#00c4d6"/>
<rect x="1669.5" y="825.5" width="13" height="13" fill="#f8f8fc" stroke="#2c2c52" stroke-width="1"/>
<rect x="1687.5" y="825.5" width="13" height="13" fill="#f8f8fc" stroke="#2c2c52" stroke-width="1"/>
<circle cx="87.6" cy="859.3" r="6" fill="none" stroke="#5a73b8" stroke-width="1.1"/>
<path d="M84.6 860.3 A3 3 0 0 1 89.6 856.8 M90.6 858.3 A3 3 0 0 1 85.6 861.8" fill="none" stroke="#5a73b8" stroke-width="1.1"/>
<circle cx="103.6" cy="859.3" r="6" fill="none" stroke="#5a73b8" stroke-width="1.1"/>
<rect x="100.6" y="856.3" width="6" height="6" fill="#5a73b8"/><rect x="102.1" y="856.3" width="3" height="2" fill="#a9c4ec"/>
<circle cx="119.5" cy="859.3" r="6" fill="none" stroke="#5a73b8" stroke-width="1.1"/>
<circle cx="116.5" cy="859.3" r="0.9" fill="#5a73b8"/>
<circle cx="119.5" cy="859.3" r="0.9" fill="#5a73b8"/>
<circle cx="122.5" cy="859.3" r="0.9" fill="#5a73b8"/>
<path d="M115.0 859.3 H124.0" stroke="#5a73b8" stroke-width="0.6"/>
<rect x="10" y="868" width="1" height="134" fill="#3e5e92" />
<rect x="18" y="868" width="1" height="134" fill="#3e5e92" />
<rect x="24" y="868" width="1" height="134" fill="#3e5e92" />
<rect x="30" y="868" width="1" height="134" fill="#3e5e92" />
<rect x="35" y="868" width="1" height="134" fill="#3e5e92" />
<rect x="67" y="868" width="1" height="134" fill="#3e5e92" />
<rect x="72" y="868" width="1" height="134" fill="#3e5e92" />
<rect x="2" y="886" width="71" height="1" fill="#3e5e92" />
<rect x="2" y="904" width="71" height="1" fill="#3e5e92" />
<rect x="2" y="920" width="71" height="1" fill="#3e5e92" />
<rect x="2" y="937" width="71" height="1" fill="#3e5e92" />
<rect x="2" y="954" width="71" height="1" fill="#3e5e92" />
<rect x="2" y="971" width="71" height="1" fill="#3e5e92" />
<rect x="2" y="989" width="71" height="1" fill="#3e5e92" />
<path d="M2 928 Q12 922 20 935 L52 1002" fill="none" stroke="#9db5e0" stroke-width="1.4"/>
<rect x="79.5" y="875.5" width="19" height="11" fill="#c8dbf6" stroke="#5566a8" stroke-width="1"/>
<path d="M85 884 V881 A4 4 0 0 1 93 881 V884" fill="none" stroke="#4a64a8" stroke-width="1.4"/>
<rect x="103.5" y="875.5" width="20" height="11" fill="#c8dbf6" stroke="#5566a8" stroke-width="1"/>
<rect x="108.0" y="881" width="1" height="3" fill="#334c8a" />
<rect x="110.2" y="878" width="1" height="6" fill="#334c8a" />
<rect x="112.4" y="880" width="1" height="4" fill="#334c8a" />
<rect x="114.6" y="877" width="1" height="7" fill="#334c8a" />
<rect x="116.8" y="879" width="1" height="5" fill="#334c8a" />
<rect x="119.0" y="881" width="1" height="3" fill="#334c8a" />
<rect x="79.5" y="903.5" width="44" height="11" fill="#b4cbef" stroke="#5566a8" stroke-width="1"/>
<polygon points="115,907.0 121,907.0 118,911.5" fill="#5b7bb8"/>
<rect x="79.5" y="931.5" width="44" height="11" fill="#c8dbf6" stroke="#5566a8" stroke-width="1"/>
<rect x="79.5" y="960.5" width="44" height="11" fill="#c8dbf6" stroke="#5566a8" stroke-width="1"/>
<rect x="79.5" y="989.5" width="44" height="11" fill="#b4cbef" stroke="#5566a8" stroke-width="1"/>
<rect x="79.5" y="1018.5" width="44" height="12" fill="#b4cbef" stroke="#5566a8" stroke-width="1"/>
<rect x="0.5" y="1007.5" width="21" height="11" fill="#b4cbef" stroke="#5566a8" stroke-width="1"/>
<polygon points="13,1011.0 19,1011.0 16,1015.5" fill="#1f2b45"/>
<rect x="32.5" y="1007.5" width="36" height="11" fill="#b4cbef" stroke="#5566a8" stroke-width="1"/>
<polygon points="60,1011.0 66,1011.0 63,1015.5" fill="#1f2b45"/>
<path d="M35 1011 H44 Q46 1011 46 1014 V1016" fill="none" stroke="#2c3c60" stroke-width="1"/>
<rect x="39.5" y="1023.5" width="10" height="10" fill="#c8dbf6" stroke="#5566a8" stroke-width="1"/>
<circle cx="141.4" cy="859.3" r="6.3" fill="none" stroke="#4a64a8" stroke-width="1.1"/>
<rect x="323.5" y="853.5" width="30" height="12" rx="6" fill="none" stroke="#4a64a8" stroke-width="1"/>
<rect x="358.5" y="853.5" width="25" height="12" fill="none" stroke="#4a64a8" stroke-width="1"/>
<circle cx="562.3" cy="859.5" r="6" fill="none" stroke="#5a73b8" stroke-width="1.1"/>
<path d="M559.3 860.5 A3 3 0 0 1 564.3 857.0 M565.3 858.5 A3 3 0 0 1 560.3 862.0" fill="none" stroke="#5a73b8" stroke-width="1.1"/>
<circle cx="579.4" cy="859.5" r="6" fill="none" stroke="#5a73b8" stroke-width="1.1"/>
<rect x="576.4" y="856.5" width="6" height="6" fill="#5a73b8"/><rect x="577.9" y="856.5" width="3" height="2" fill="#a9c4ec"/>
<circle cx="596.5" cy="859.5" r="6" fill="none" stroke="#5a73b8" stroke-width="1.1"/>
<circle cx="593.5" cy="859.5" r="0.9" fill="#5a73b8"/>
<circle cx="596.5" cy="859.5" r="0.9" fill="#5a73b8"/>
<circle cx="599.5" cy="859.5" r="0.9" fill="#5a73b8"/>
<path d="M592.0 859.5 H601.0" stroke="#5a73b8" stroke-width="0.6"/>
<circle cx="141.5" cy="879" r="6" fill="none" stroke="#b5caec" stroke-width="1"/>
<circle cx="141.5" cy="895" r="6" fill="none" stroke="#4a64a8" stroke-width="1"/><path d="M138 895 H145" stroke="#4a64a8" stroke-width="1.2"/>
<path d="M141.5 891.5 V898.5" stroke="#4a64a8" stroke-width="1.2"/>
<circle cx="141.5" cy="910" r="6" fill="none" stroke="#4a64a8" stroke-width="1"/><path d="M138 910 H145" stroke="#4a64a8" stroke-width="1.2"/>
<circle cx="141.5" cy="927" r="6" fill="#8ca8d6"/>
<circle cx="141.5" cy="944" r="6" fill="none" stroke="#b5caec" stroke-width="1"/>
<circle cx="141.5" cy="961.5" r="6" fill="none" stroke="#b5caec" stroke-width="1"/>
<rect x="152.9" y="872.8" width="48" height="78" rx="1.5" fill="#9cb8e2" stroke="#5f7cc0" stroke-width="1"/>
<rect x="153.4" y="873.3" width="47" height="28" fill="#9bb4da" />
<path d="M171.2 931.3 A11.5 11.5 0 1 1 182.7 931.3" fill="none" stroke="#4f6db5" stroke-width="2.2" stroke-linecap="round"/>
<path d="M171.2 931.3 A11.5 11.5 0 0 1 165.4 921.3" fill="none" stroke="#b9cdee" stroke-width="2.2" stroke-linecap="round"/>
<path d="M176.0 921.3 L165.4 921.3" stroke="#4f6db5" stroke-width="2.2" stroke-linecap="round"/>
<rect x="204.7" y="872.8" width="48" height="78" rx="1.5" fill="#9cb8e2" stroke="#5f7cc0" stroke-width="1"/>
<rect x="205.2" y="873.3" width="47" height="28" fill="#9bb4da" />
<path d="M222.9 931.3 A11.5 11.5 0 1 1 234.4 931.3" fill="none" stroke="#4f6db5" stroke-width="2.2" stroke-linecap="round"/>
<path d="M222.9 931.3 A11.5 11.5 0 0 1 219.9 913.9" fill="none" stroke="#b9cdee" stroke-width="2.2" stroke-linecap="round"/>
<path d="M228.0 920.7 L219.9 913.9" stroke="#4f6db5" stroke-width="2.2" stroke-linecap="round"/>
<rect x="256.9" y="872.8" width="48" height="78" rx="1.5" fill="#9cb8e2" stroke="#5f7cc0" stroke-width="1"/>
<rect x="257.4" y="873.3" width="47" height="28" fill="#6b88b2" />
<path d="M275.1 931.3 A11.5 11.5 0 1 1 286.6 931.3" fill="none" stroke="#4f6db5" stroke-width="2.2" stroke-linecap="round"/>
<path d="M280.5 922.1 L276.0 931.7" stroke="#4f6db5" stroke-width="2.2" stroke-linecap="round"/>
<rect x="308.9" y="872.8" width="48" height="78" rx="1.5" fill="#9cb8e2" stroke="#5f7cc0" stroke-width="1"/>
<rect x="309.4" y="873.3" width="47" height="28" fill="#6b88b2" />
<path d="M327.1 931.3 A11.5 11.5 0 1 1 338.6 931.3" fill="none" stroke="#4f6db5" stroke-width="2.2" stroke-linecap="round"/>
<path d="M327.1 931.3 A11.5 11.5 0 1 1 339.5 911.9" fill="none" stroke="#b9cdee" stroke-width="2.2" stroke-linecap="round"/>
<path d="M333.4 920.5 L339.5 911.9" stroke="#4f6db5" stroke-width="2.2" stroke-linecap="round"/>
<rect x="152.9" y="954.7" width="48" height="78" rx="1.5" fill="#9cb8e2" stroke="#5f7cc0" stroke-width="1"/>
<rect x="153.4" y="955.2" width="47" height="28" fill="#87a0c6" />
<path d="M171.2 1013.2 A11.5 11.5 0 1 1 182.7 1013.2" fill="none" stroke="#4f6db5" stroke-width="2.2" stroke-linecap="round"/>
<path d="M171.2 1013.2 A11.5 11.5 0 1 1 188.4 1002.2" fill="none" stroke="#b9cdee" stroke-width="2.2" stroke-linecap="round"/>
<path d="M177.8 1003.1 L188.4 1002.2" stroke="#4f6db5" stroke-width="2.2" stroke-linecap="round"/>
<rect x="204.7" y="954.7" width="48" height="78" rx="1.5" fill="#9cb8e2" stroke="#5f7cc0" stroke-width="1"/>
<rect x="205.2" y="955.2" width="47" height="28" fill="#87a0c6" />
<path d="M222.9 1013.2 A11.5 11.5 0 1 1 234.4 1013.2" fill="none" stroke="#4f6db5" stroke-width="2.2" stroke-linecap="round"/>
<path d="M222.9 1013.2 A11.5 11.5 0 0 1 223.8 992.8" fill="none" stroke="#b9cdee" stroke-width="2.2" stroke-linecap="round"/>
<path d="M228.3 1002.4 L223.8 992.8" stroke="#4f6db5" stroke-width="2.2" stroke-linecap="round"/>
<rect x="256.9" y="954.7" width="48" height="78" rx="1.5" fill="#9cb8e2" stroke="#5f7cc0" stroke-width="1"/>
<rect x="257.4" y="955.2" width="47" height="28" fill="#3b5a82" />
<path d="M275.1 1013.2 A11.5 11.5 0 1 1 286.6 1013.2" fill="none" stroke="#4f6db5" stroke-width="2.2" stroke-linecap="round"/>
<path d="M275.1 1013.2 A11.5 11.5 0 0 1 269.6 1001.2" fill="none" stroke="#b9cdee" stroke-width="2.2" stroke-linecap="round"/>
<path d="M280.0 1003.0 L269.6 1001.2" stroke="#4f6db5" stroke-width="2.2" stroke-linecap="round"/>
<rect x="308.9" y="954.7" width="48" height="78" rx="1.5" fill="#9cb8e2" stroke="#5f7cc0" stroke-width="1"/>
<rect x="309.4" y="955.2" width="47" height="28" fill="#3b5a82" />
<path d="M327.1 1013.2 A11.5 11.5 0 1 1 338.6 1013.2" fill="none" stroke="#4f6db5" stroke-width="2.2" stroke-linecap="round"/>
<path d="M327.1 1013.2 A11.5 11.5 0 1 1 344.0 1006.2" fill="none" stroke="#b9cdee" stroke-width="2.2" stroke-linecap="round"/>
<path d="M333.8 1003.4 L344.0 1006.2" stroke="#4f6db5" stroke-width="2.2" stroke-linecap="round"/>
<rect x="367.5" y="878.5" width="17" height="12" fill="#b0c8ee" stroke="#5566a8" stroke-width="1"/>
<polygon points="377,881 377,888 382,884.5" fill="#4a64a8"/><rect x="371" y="882" width="1" height="5" fill="#4a64a8"/><rect x="373.5" y="882" width="1" height="5" fill="#4a64a8"/>
<rect x="526.5" y="878.5" width="29" height="12" fill="#b0c8ee" stroke="#5566a8" stroke-width="1"/>
<rect x="559.5" y="878.5" width="29" height="12" fill="#b0c8ee" stroke="#5566a8" stroke-width="1"/>
<rect x="365" y="898.5" width="231.5" height="135" fill="#99b5df" stroke="#5f7bbf" stroke-width="1"/>
<rect x="365.5" y="899" width="75" height="18" fill="#6fa8ec" />
<rect x="440.5" y="899" width="155.5" height="18" fill="#9fbbe4" />
<rect x="442" y="901" width="1.6" height="14" fill="#23334f" />
<rect x="445" y="901" width="1.6" height="14" fill="#23334f" />
<rect x="450.5" y="902.5" width="37" height="11" fill="#a8c2ea" stroke="#5566a8" stroke-width="1"/>
<circle cx="452.5" cy="903" r="2" fill="#19b36b"/>
<rect x="492.5" y="902.5" width="37" height="11" fill="#a8c2ea" stroke="#5566a8" stroke-width="1"/>
<rect x="534.5" y="902.5" width="15" height="11" fill="#b7cdf0" stroke="#5566a8" stroke-width="1"/>
<path d="M539 906 H541 L544 904 V912 L541 910 H539 Z" fill="none" stroke="#222" stroke-width="0.9"/>
<rect x="554.5" y="902.5" width="15" height="11" fill="#b7cdf0" stroke="#5566a8" stroke-width="1"/>
<circle cx="580.3" cy="908" r="6" fill="none" stroke="#2c3c60" stroke-width="1.1"/>
<path d="M577.3 909 A3 3 0 0 1 582.3 905.5 M583.3 907 A3 3 0 0 1 578.3 910.5" fill="none" stroke="#2c3c60" stroke-width="1.1"/>
<rect x="590" y="901" width="1.6" height="14" fill="#23334f" />
<rect x="593" y="901" width="1.6" height="14" fill="#23334f" />
<rect x="365.5" y="918" width="75" height="18" fill="#6fa8ec" />
<rect x="440.5" y="918" width="155.5" height="18" fill="#9fbbe4" />
<rect x="442" y="920" width="1.6" height="14" fill="#23334f" />
<rect x="445" y="920" width="1.6" height="14" fill="#23334f" />
<rect x="450.5" y="921.5" width="37" height="11" fill="#a8c2ea" stroke="#5566a8" stroke-width="1"/>
<circle cx="452.5" cy="922" r="2" fill="#19b36b"/>
<rect x="492.5" y="921.5" width="37" height="11" fill="#a8c2ea" stroke="#5566a8" stroke-width="1"/>
<rect x="534.5" y="921.5" width="15" height="11" fill="#b7cdf0" stroke="#5566a8" stroke-width="1"/>
<path d="M539 925 H541 L544 923 V931 L541 929 H539 Z" fill="none" stroke="#222" stroke-width="0.9"/>
<rect x="554.5" y="921.5" width="15" height="11" fill="#b7cdf0" stroke="#5566a8" stroke-width="1"/>
<circle cx="580.3" cy="927" r="6" fill="none" stroke="#2c3c60" stroke-width="1.1"/>
<path d="M577.3 928 A3 3 0 0 1 582.3 924.5 M583.3 926 A3 3 0 0 1 578.3 929.5" fill="none" stroke="#2c3c60" stroke-width="1.1"/>
<rect x="590" y="920" width="1.6" height="14" fill="#23334f" />
<rect x="593" y="920" width="1.6" height="14" fill="#23334f" />
<rect x="365" y="936.5" width="231.5" height="1" fill="#5f7bbf" />
<circle cx="617.2" cy="859.5" r="6.3" fill="none" stroke="#4a64a8" stroke-width="1.1"/>
<circle cx="988" cy="859.5" r="6" fill="none" stroke="#5a73b8" stroke-width="1.1"/>
<path d="M985 860.5 A3 3 0 0 1 990 857.0 M991 858.5 A3 3 0 0 1 986 862.0" fill="none" stroke="#5a73b8" stroke-width="1.1"/>
<circle cx="1004" cy="859.5" r="6" fill="none" stroke="#5a73b8" stroke-width="1.1"/>
<rect x="1001" y="856.5" width="6" height="6" fill="#5a73b8"/><rect x="1002.5" y="856.5" width="3" height="2" fill="#a9c4ec"/>
<circle cx="1020.3" cy="859.5" r="6" fill="none" stroke="#5a73b8" stroke-width="1.1"/>
<circle cx="1017.3" cy="859.5" r="0.9" fill="#5a73b8"/>
<circle cx="1020.3" cy="859.5" r="0.9" fill="#5a73b8"/>
<circle cx="1023.3" cy="859.5" r="0.9" fill="#5a73b8"/>
<path d="M1015.8 859.5 H1024.8" stroke="#5a73b8" stroke-width="0.6"/>
<circle cx="617.6" cy="879.5" r="6" fill="none" stroke="#5a73b8" stroke-width="1.1"/>
<polygon points="614.1,877.5 621.1,877.5 617.6,882.5" fill="#5a73b8"/>
<circle cx="617.6" cy="1029" r="3" fill="#3a5a9a"/>
<rect x="627" y="873" width="1" height="160" fill="#7f9bd0" />
<polygon points="652,893 658,893 655,897" fill="#c0d2f0"/>
<path d="M649.5 920.4 A11.5 11.5 0 1 1 661.0 920.4" fill="none" stroke="#4f6db5" stroke-width="2.2" stroke-linecap="round"/>
<path d="M655.2 898.9 A11.5 11.5 0 0 1 661.0 920.4" fill="none" stroke="#b9cdee" stroke-width="2.2" stroke-linecap="round"/>
<path d="M655.7 911.2 L661.0 920.4" stroke="#4f6db5" stroke-width="2.2" stroke-linecap="round"/>
<path d="M649.5 970.3 A11.5 11.5 0 1 1 661.0 970.3" fill="none" stroke="#4f6db5" stroke-width="2.2" stroke-linecap="round"/>
<path d="M654.7 961.1 L649.5 970.3" stroke="#4f6db5" stroke-width="2.2" stroke-linecap="round"/>
<path d="M649.5 1020.2 A11.5 11.5 0 1 1 661.0 1020.2" fill="none" stroke="#4f6db5" stroke-width="2.2" stroke-linecap="round"/>
<path d="M649.5 1020.2 A11.5 11.5 0 0 1 654.2 998.7" fill="none" stroke="#b9cdee" stroke-width="2.2" stroke-linecap="round"/>
<path d="M655.1 1009.3 L654.2 998.7" stroke="#4f6db5" stroke-width="2.2" stroke-linecap="round"/>
<rect x="682.5" y="873" width="1" height="160" fill="#7f9bd0" />
<rect x="688" y="873" width="200" height="107" rx="2" fill="#2c4b7a"/>
<rect x="693" y="873" width="1" height="107" fill="#3e5e92" />
<rect x="701" y="873" width="1" height="107" fill="#3e5e92" />
<rect x="708" y="873" width="1" height="107" fill="#3e5e92" />
<rect x="713" y="873" width="1" height="107" fill="#3e5e92" />
<rect x="718" y="873" width="1" height="107" fill="#3e5e92" />
<rect x="722" y="873" width="1" height="107" fill="#3e5e92" />
<rect x="725" y="873" width="1" height="107" fill="#3e5e92" />
<rect x="729" y="873" width="1" height="107" fill="#3e5e92" />
<rect x="749" y="873" width="1" height="107" fill="#3e5e92" />
<rect x="762" y="873" width="1" height="107" fill="#3e5e92" />
<rect x="770" y="873" width="1" height="107" fill="#3e5e92" />
<rect x="777" y="873" width="1" height="107" fill="#3e5e92" />
<rect x="782" y="873" width="1" height="107" fill="#3e5e92" />
<rect x="787" y="873" width="1" height="107" fill="#3e5e92" />
<rect x="791" y="873" width="1" height="107" fill="#3e5e92" />
<rect x="794" y="873" width="1" height="107" fill="#3e5e92" />
<rect x="798" y="873" width="1" height="107" fill="#3e5e92" />
<rect x="818" y="873" width="1" height="107" fill="#3e5e92" />
<rect x="831" y="873" width="1" height="107" fill="#3e5e92" />
<rect x="839" y="873" width="1" height="107" fill="#3e5e92" />
<rect x="846" y="873" width="1" height="107" fill="#3e5e92" />
<rect x="851" y="873" width="1" height="107" fill="#3e5e92" />
<rect x="856" y="873" width="1" height="107" fill="#3e5e92" />
<rect x="860" y="873" width="1" height="107" fill="#3e5e92" />
<rect x="863" y="873" width="1" height="107" fill="#3e5e92" />
<rect x="867" y="873" width="1" height="107" fill="#3e5e92" />
<rect x="887" y="873" width="1" height="107" fill="#3e5e92" />
<rect x="900" y="873" width="1" height="107" fill="#3e5e92" />
<rect x="688" y="886" width="200" height="1" fill="#3e5e92" />
<rect x="688" y="899" width="200" height="1" fill="#3e5e92" />
<rect x="688" y="913" width="200" height="1" fill="#3e5e92" />
<rect x="688" y="926" width="200" height="1" fill="#3e5e92" />
<rect x="688" y="940" width="200" height="1" fill="#3e5e92" />
<rect x="688" y="955" width="200" height="1" fill="#3e5e92" />
<rect x="688" y="969" width="200" height="1" fill="#3e5e92" />
<path d="M688 927 C708 927 722 928 730 936 C737 944 741 960 743.7 980 M750.4 980 C753 962 757 952 762 946 C770 937 780 934 800 933.5 L888 933" fill="none" stroke="#9db4e2" stroke-width="1.5"/>
<circle cx="747.3" cy="942.4" r="5.6" fill="none" stroke="#9db4e2" stroke-width="1.4"/>
<rect x="688.5" y="984.5" width="17" height="12" fill="#b0c8ee" stroke="#5566a8" stroke-width="1"/>
<rect x="710.5" y="984.5" width="17" height="12" fill="#b0c8ee" stroke="#5566a8" stroke-width="1"/>
<rect x="732.5" y="984.5" width="17" height="12" fill="#b0c8ee" stroke="#5566a8" stroke-width="1"/>
<rect x="754.5" y="984.5" width="17" height="12" fill="#b0c8ee" stroke="#5566a8" stroke-width="1"/>
<rect x="776.5" y="984.5" width="17" height="12" fill="#b0c8ee" stroke="#5566a8" stroke-width="1"/>
<path d="M691 989 H700 Q703 989 703 994" fill="none" stroke="#4a64a8" stroke-width="1"/><path d="M713 994 Q713 989 717 989 H725" fill="none" stroke="#4a64a8" stroke-width="1"/><path d="M735 994 Q735 989 741 989 Q747 989 747 994" fill="none" stroke="#4a64a8" stroke-width="1"/><path d="M757 989 Q761 989 763 994 Q765 989 769 989" fill="none" stroke="#4a64a8" stroke-width="1"/><path d="M779 989 H791 M783 989 V994 M789 989 V994" fill="none" stroke="#2c3c60" stroke-width="1"/>
<rect x="800.5" y="984.5" width="40" height="12" fill="#a8c2ea" stroke="#5566a8" stroke-width="1"/>
<polygon points="832,988.5 838,988.5 835,993.0" fill="#6a86c8"/>
<rect x="847.5" y="984.5" width="18" height="12" fill="#b0c8ee" stroke="#5566a8" stroke-width="1"/>
<rect x="869.5" y="984.5" width="18" height="12" fill="#c8dbf6" stroke="#5566a8" stroke-width="1"/>
<rect x="688.5" y="1005.5" width="59" height="12" fill="#b0c8ee" stroke="#5566a8" stroke-width="1"/>
<rect x="751.5" y="1005.5" width="24" height="12" fill="#b0c8ee" stroke="#5566a8" stroke-width="1"/>
<rect x="779.5" y="1005.5" width="24" height="12" fill="#b0c8ee" stroke="#5566a8" stroke-width="1"/>
<rect x="807.5" y="1005.5" width="24" height="12" fill="#c8dbf6" stroke="#5566a8" stroke-width="1"/>
<rect x="835.5" y="1005.5" width="24" height="12" fill="#b0c8ee" stroke="#5566a8" stroke-width="1"/>
<rect x="863.5" y="1005.5" width="24" height="12" fill="#b0c8ee" stroke="#5566a8" stroke-width="1"/>
<rect x="751.5" y="1021.5" width="24" height="12" fill="#b0c8ee" stroke="#5566a8" stroke-width="1"/>
<rect x="779.5" y="1021.5" width="24" height="12" fill="#b0c8ee" stroke="#5566a8" stroke-width="1"/>
<rect x="807.5" y="1021.5" width="24" height="12" fill="#b0c8ee" stroke="#5566a8" stroke-width="1"/>
<rect x="835.5" y="1021.5" width="24" height="12" fill="#b0c8ee" stroke="#5566a8" stroke-width="1"/>
<rect x="863.5" y="1021.5" width="24" height="12" fill="#b0c8ee" stroke="#5566a8" stroke-width="1"/>
<path d="M911.2 919.0 A11.5 11.5 0 1 1 922.8 919.0" fill="none" stroke="#4f6db5" stroke-width="2.2" stroke-linecap="round"/>
<path d="M911.2 919.0 A11.5 11.5 0 0 1 907.0 903.2" fill="none" stroke="#b9cdee" stroke-width="2.2" stroke-linecap="round"/>
<path d="M916.2 908.5 L907.0 903.2" stroke="#4f6db5" stroke-width="2.2" stroke-linecap="round"/>
<circle cx="907" cy="898" r="2.3" fill="#19b36b"/>
<path d="M911.2 968.9 A11.5 11.5 0 1 1 922.8 968.9" fill="none" stroke="#4f6db5" stroke-width="2.2" stroke-linecap="round"/>
<path d="M911.2 968.9 A11.5 11.5 0 0 1 908.2 951.5" fill="none" stroke="#b9cdee" stroke-width="2.2" stroke-linecap="round"/>
<path d="M916.3 958.3 L908.2 951.5" stroke="#4f6db5" stroke-width="2.2" stroke-linecap="round"/>
<circle cx="907" cy="948" r="2.3" fill="#19b36b"/>
<path d="M911.2 1019.6 A11.5 11.5 0 1 1 922.8 1019.6" fill="none" stroke="#4f6db5" stroke-width="2.2" stroke-linecap="round"/>
<path d="M911.2 1019.6 A11.5 11.5 0 1 1 928.5 1008.6" fill="none" stroke="#b9cdee" stroke-width="2.2" stroke-linecap="round"/>
<path d="M917.9 1009.5 L928.5 1008.6" stroke="#4f6db5" stroke-width="2.2" stroke-linecap="round"/>
<circle cx="907" cy="998" r="2.3" fill="#19b36b"/>
<rect x="945.5" y="873" width="1" height="160" fill="#7f9bd0" />
<path d="M965.5 920.4 A11.5 11.5 0 1 1 977.0 920.4" fill="none" stroke="#4f6db5" stroke-width="2.2" stroke-linecap="round"/>
<path d="M965.5 920.4 A11.5 11.5 0 1 1 981.3 904.6" fill="none" stroke="#b9cdee" stroke-width="2.2" stroke-linecap="round"/>
<path d="M972.1 909.9 L981.3 904.6" stroke="#4f6db5" stroke-width="2.2" stroke-linecap="round"/>
<rect x="998.5" y="901.5" width="27" height="11" fill="#b0c8ee" stroke="#5566a8" stroke-width="1"/>
<path d="M1001 904 L1013 910" stroke="#2c3c60" stroke-width="1"/><polygon points="1016,905 1022,905 1019,909" fill="#2c3c60"/>
<path d="M965.5 970.3 A11.5 11.5 0 1 1 977.0 970.3" fill="none" stroke="#4f6db5" stroke-width="2.2" stroke-linecap="round"/>
<path d="M965.5 970.3 A11.5 11.5 0 0 1 977.0 950.3" fill="none" stroke="#b9cdee" stroke-width="2.2" stroke-linecap="round"/>
<path d="M971.8 959.5 L977.0 950.3" stroke="#4f6db5" stroke-width="2.2" stroke-linecap="round"/>
<rect x="990" y="955" width="10" height="1" fill="#7f9bd0" />
<rect x="1007.5" y="947.5" width="18" height="12" fill="#b0c8ee" stroke="#5566a8" stroke-width="1"/>
<rect x="1007.5" y="963.5" width="18" height="12" fill="#b0c8ee" stroke="#5566a8" stroke-width="1"/>
<path d="M1012 973 L1015 966 L1018 973 Z M1015 970 L1019 966" fill="none" stroke="#2c3c60" stroke-width="0.9"/>
<path d="M965.5 1020.2 A11.5 11.5 0 1 1 977.0 1020.2" fill="none" stroke="#4f6db5" stroke-width="2.2" stroke-linecap="round"/>
<path d="M965.5 1020.2 A11.5 11.5 0 0 1 971.3 998.7" fill="none" stroke="#b9cdee" stroke-width="2.2" stroke-linecap="round"/>
<path d="M971.3 1009.3 L971.3 998.7" stroke="#4f6db5" stroke-width="2.2" stroke-linecap="round"/>
<path d="M1003.8 1020.2 A11.5 11.5 0 1 1 1015.2 1020.2" fill="none" stroke="#4f6db5" stroke-width="2.2" stroke-linecap="round"/>
<path d="M1003.8 1020.2 A11.5 11.5 0 0 1 998.7 1006.3" fill="none" stroke="#b9cdee" stroke-width="2.2" stroke-linecap="round"/>
<path d="M1008.6 1009.9 L998.7 1006.3" stroke="#4f6db5" stroke-width="2.2" stroke-linecap="round"/>
<circle cx="1041.7" cy="859.7" r="6.3" fill="none" stroke="#4a64a8" stroke-width="1.1"/>
<rect x="1034" y="868.5" width="116" height="168" fill="#a2bde6" />
<path d="M1054.2 905.0 A11.5 11.5 0 1 1 1065.8 905.0" fill="none" stroke="#4f6db5" stroke-width="2.2" stroke-linecap="round"/>
<path d="M1054.2 905.0 A11.5 11.5 0 0 1 1051.2 887.6" fill="none" stroke="#b9cdee" stroke-width="2.2" stroke-linecap="round"/>
<path d="M1059.3 894.4 L1051.2 887.6" stroke="#4f6db5" stroke-width="2.2" stroke-linecap="round"/>
<path d="M1118.2 905.0 A11.5 11.5 0 1 1 1129.8 905.0" fill="none" stroke="#4f6db5" stroke-width="2.2" stroke-linecap="round"/>
<path d="M1118.2 905.0 A11.5 11.5 0 0 1 1124.0 883.5" fill="none" stroke="#b9cdee" stroke-width="2.2" stroke-linecap="round"/>
<path d="M1124.0 894.1 L1124.0 883.5" stroke="#4f6db5" stroke-width="2.2" stroke-linecap="round"/>
<rect x="1092" y="870" width="1" height="110" fill="#7f9bd0" />
<rect x="1083.5" y="890.5" width="17" height="10" fill="#c8dbf6" stroke="#5566a8" stroke-width="1"/>
<rect x="1088" y="893" width="8" height="5" fill="none" stroke="#4a64a8" stroke-width="1"/><path d="M1085 895.5 H1099" stroke="#4a64a8" stroke-width="1"/>
<rect x="1037.5" y="930.5" width="46" height="12" fill="#c8dbf6" stroke="#5566a8" stroke-width="1"/>
<rect x="1037.5" y="946.5" width="46" height="12" fill="#b0c8ee" stroke="#5566a8" stroke-width="1"/>
<polygon points="1075,950.5 1081,950.5 1078,955.0" fill="#6a86c8"/>
<rect x="1037.5" y="962.5" width="46" height="12" fill="#b0c8ee" stroke="#5566a8" stroke-width="1"/>
<rect x="1101.5" y="930.5" width="46" height="12" fill="#c8dbf6" stroke="#5566a8" stroke-width="1"/>
<rect x="1101.5" y="946.5" width="46" height="12" fill="#b0c8ee" stroke="#5566a8" stroke-width="1"/>
<polygon points="1139,950.5 1145,950.5 1142,955.0" fill="#6a86c8"/>
<rect x="1101.5" y="962.5" width="46" height="12" fill="#b0c8ee" stroke="#5566a8" stroke-width="1"/>
<path d="M1055.0 1021.7 A11.5 11.5 0 1 1 1066.5 1021.7" fill="none" stroke="#4f6db5" stroke-width="2.2" stroke-linecap="round"/>
<path d="M1055.0 1021.7 A11.5 11.5 0 0 1 1065.7 1001.3" fill="none" stroke="#b9cdee" stroke-width="2.2" stroke-linecap="round"/>
<path d="M1061.2 1010.9 L1065.7 1001.3" stroke="#4f6db5" stroke-width="2.2" stroke-linecap="round"/>
<rect x="1086.5" y="996.5" width="12" height="12" fill="#c8dbf6" stroke="#5566a8" stroke-width="1"/>
<rect x="1086.5" y="1012.5" width="12" height="12" fill="#c8dbf6" stroke="#5566a8" stroke-width="1"/>
<rect x="1077" y="1002" width="7" height="1" fill="#4a64a8" />
<rect x="1101" y="1018" width="7" height="1" fill="#4a64a8" />
<path d="M1119.7 1021.7 A11.5 11.5 0 1 1 1131.2 1021.7" fill="none" stroke="#4f6db5" stroke-width="2.2" stroke-linecap="round"/>
<path d="M1119.7 1021.7 A11.5 11.5 0 0 1 1120.5 1001.3" fill="none" stroke="#b9cdee" stroke-width="2.2" stroke-linecap="round"/>
<path d="M1125.0 1010.9 L1120.5 1001.3" stroke="#4f6db5" stroke-width="2.2" stroke-linecap="round"/>
<circle cx="1117" cy="1001" r="2.3" fill="#19b36b"/>
<rect x="1207.5" y="853" width="36" height="13" fill="#9ab6e0" />
<rect x="1246" y="853" width="69.5" height="13" fill="#9ab6e0" />
<rect x="1317" y="853" width="63" height="15" fill="#2c4b7a" />
<circle cx="1503.3" cy="859.3" r="6" fill="none" stroke="#5a73b8" stroke-width="1.1"/>
<path d="M1500.3 860.3 A3 3 0 0 1 1505.3 856.8 M1506.3 858.3 A3 3 0 0 1 1501.3 861.8" fill="none" stroke="#5a73b8" stroke-width="1.1"/>
<circle cx="1519.2" cy="859.3" r="6" fill="none" stroke="#5a73b8" stroke-width="1.1"/>
<rect x="1516.2" y="856.3" width="6" height="6" fill="#5a73b8"/><rect x="1517.7" y="856.3" width="3" height="2" fill="#a9c4ec"/>
<circle cx="1535.4" cy="859.3" r="6" fill="none" stroke="#5a73b8" stroke-width="1.1"/>
<circle cx="1532.4" cy="859.3" r="0.9" fill="#5a73b8"/>
<circle cx="1535.4" cy="859.3" r="0.9" fill="#5a73b8"/>
<circle cx="1538.4" cy="859.3" r="0.9" fill="#5a73b8"/>
<path d="M1530.9 859.3 H1539.9" stroke="#5a73b8" stroke-width="0.6"/>
<rect x="1153" y="867.5" width="278" height="169" rx="2" fill="#2c4b7a"/>
<rect x="1153" y="942" width="278" height="1" fill="#5b7bb8" />
<rect x="1292" y="870" width="1" height="70" fill="#5b7bb8" />
<rect x="1292" y="945" width="1" height="70" fill="#5b7bb8" />
<rect x="1153" y="1017" width="278" height="1" fill="#5b7bb8" />
<rect x="1158" y="873" width="9" height="9" fill="#7f9bd0" />
<rect x="1298" y="873" width="9" height="9" fill="#7f9bd0" />
<rect x="1158.5" y="948.5" width="8" height="8" fill="none" stroke="#a8c0ea" stroke-width="1"/>
<rect x="1298" y="948" width="9" height="9" fill="#7f9bd0" />
<rect x="1158" y="1023" width="9" height="9" fill="#7f9bd0" />
<circle cx="1367" cy="989" r="2.2" fill="#19b36b"/>
<rect x="1432" y="868.5" width="112" height="168" fill="#a2bde6" />
<path d="M1457.2 904.2 A11.5 11.5 0 1 1 1468.8 904.2" fill="none" stroke="#4f6db5" stroke-width="2.2" stroke-linecap="round"/>
<path d="M1462.6 895.0 L1458.1 904.6" stroke="#4f6db5" stroke-width="2.2" stroke-linecap="round"/>
<circle cx="1453" cy="883" r="2.3" fill="#19b36b"/>
<path d="M1511.5 904.2 A11.5 11.5 0 1 1 1523.0 904.2" fill="none" stroke="#4f6db5" stroke-width="2.2" stroke-linecap="round"/>
<path d="M1511.5 904.2 A11.5 11.5 0 1 1 1523.9 884.8" fill="none" stroke="#b9cdee" stroke-width="2.2" stroke-linecap="round"/>
<path d="M1517.8 893.4 L1523.9 884.8" stroke="#4f6db5" stroke-width="2.2" stroke-linecap="round"/>
<circle cx="1507" cy="883" r="2.3" fill="#19b36b"/>
<rect x="1436.5" y="931.5" width="53" height="12" fill="#b0c8ee" stroke="#5566a8" stroke-width="1"/>
<polygon points="1481,935.5 1487,935.5 1484,940.0" fill="#6a86c8"/>
<rect x="1436.5" y="959.5" width="53" height="12" fill="#b0c8ee" stroke="#5566a8" stroke-width="1"/>
<path d="M1511.5 962.0 A11.5 11.5 0 1 1 1523.0 962.0" fill="none" stroke="#4f6db5" stroke-width="2.2" stroke-linecap="round"/>
<path d="M1511.5 962.0 A11.5 11.5 0 0 1 1517.3 940.5" fill="none" stroke="#b9cdee" stroke-width="2.2" stroke-linecap="round"/>
<path d="M1517.3 951.1 L1517.3 940.5" stroke="#4f6db5" stroke-width="2.2" stroke-linecap="round"/>
<rect x="1436.5" y="988.5" width="53" height="12" fill="#c8dbf6" stroke="#5566a8" stroke-width="1"/>
<rect x="1436.5" y="1004.5" width="53" height="12" fill="#b0c8ee" stroke="#5566a8" stroke-width="1"/>
<rect x="1436.5" y="1020.5" width="53" height="12" fill="#b0c8ee" stroke="#5566a8" stroke-width="1"/>
<path d="M1511.5 1021.2 A11.5 11.5 0 1 1 1523.0 1021.2" fill="none" stroke="#4f6db5" stroke-width="2.2" stroke-linecap="round"/>
<path d="M1511.5 1021.2 A11.5 11.5 0 1 1 1528.1 1007.3" fill="none" stroke="#b9cdee" stroke-width="2.2" stroke-linecap="round"/>
<path d="M1518.2 1010.9 L1528.1 1007.3" stroke="#4f6db5" stroke-width="2.2" stroke-linecap="round"/>
<circle cx="1556.3" cy="859.3" r="6.3" fill="none" stroke="#4a64a8" stroke-width="1.1"/>
<circle cx="1556.3" cy="994.3" r="6" fill="none" stroke="#5a73b8" stroke-width="1.1"/>
<path d="M1553.3 995.3 A3 3 0 0 1 1558.3 991.8 M1559.3 993.3 A3 3 0 0 1 1554.3 996.8" fill="none" stroke="#5a73b8" stroke-width="1.1"/>
<circle cx="1556.3" cy="1011.2" r="6" fill="none" stroke="#5a73b8" stroke-width="1.1"/>
<rect x="1553.3" y="1008.2" width="6" height="6" fill="#5a73b8"/><rect x="1554.8" y="1008.2" width="3" height="2" fill="#a9c4ec"/>
<circle cx="1556.3" cy="1028" r="6" fill="none" stroke="#5a73b8" stroke-width="1.1"/>
<circle cx="1553.3" cy="1028" r="0.9" fill="#5a73b8"/>
<circle cx="1556.3" cy="1028" r="0.9" fill="#5a73b8"/>
<circle cx="1559.3" cy="1028" r="0.9" fill="#5a73b8"/>
<path d="M1551.8 1028 H1560.8" stroke="#5a73b8" stroke-width="0.6"/>
<circle cx="1597" cy="859.6" r="6.3" fill="none" stroke="#4a64a8" stroke-width="1.1"/>
<circle cx="1613.4" cy="859.6" r="6" fill="none" stroke="#5a73b8" stroke-width="1.1"/>
<polygon points="1609.9,857.6 1616.9,857.6 1613.4,862.6" fill="#5a73b8"/>
<circle cx="1629.3" cy="859.6" r="6" fill="none" stroke="#5a73b8" stroke-width="1.1"/>
<path d="M1626.3 860.6 A3 3 0 0 1 1631.3 857.1 M1632.3 858.6 A3 3 0 0 1 1627.3 862.1" fill="none" stroke="#5a73b8" stroke-width="1.1"/>
<circle cx="1712" cy="859.6" r="6" fill="none" stroke="#5a73b8" stroke-width="1.1"/>
<path d="M1709 860.6 A3 3 0 0 1 1714 857.1 M1715 858.6 A3 3 0 0 1 1710 862.1" fill="none" stroke="#5a73b8" stroke-width="1.1"/>
<circle cx="1728.5" cy="859.6" r="6" fill="none" stroke="#5a73b8" stroke-width="1.1"/>
<circle cx="1725.5" cy="859.6" r="0.9" fill="#5a73b8"/>
<circle cx="1728.5" cy="859.6" r="0.9" fill="#5a73b8"/>
<circle cx="1731.5" cy="859.6" r="0.9" fill="#5a73b8"/>
<path d="M1724.0 859.6 H1733.0" stroke="#5a73b8" stroke-width="0.6"/>
<circle cx="1599.3" cy="879.2" r="6" fill="none" stroke="#5a73b8" stroke-width="1.1"/>
<rect x="1596.3" y="876.2" width="6" height="6" fill="#5a73b8"/><rect x="1597.8" y="876.2" width="3" height="2" fill="#a9c4ec"/>
<circle cx="1616.3" cy="879.2" r="6" fill="none" stroke="#5a73b8" stroke-width="1.1"/>
<rect x="1613.3" y="876.2" width="6" height="6" fill="#5a73b8"/><rect x="1614.8" y="876.2" width="3" height="2" fill="#a9c4ec"/>
<rect x="1627.5" y="873.5" width="105" height="12" fill="#a8c2ea" stroke="#5566a8" stroke-width="1"/>
<rect x="1593" y="896" width="140" height="119" rx="2" fill="#2c4b7a"/>
<rect x="1593.5" y="1021.5" width="67" height="12" fill="#a8c2ea" stroke="#5566a8" stroke-width="1"/>
<polygon points="1652,1025.5 1658,1025.5 1655,1030.0" fill="#6a86c8"/>
<rect x="1665.5" y="1021.5" width="67" height="12" fill="#a8c2ea" stroke="#5566a8" stroke-width="1"/>
<polygon points="1724,1025.5 1730,1025.5 1727,1030.0" fill="#6a86c8"/>
<circle cx="1749.2" cy="859.6" r="6.3" fill="none" stroke="#4a64a8" stroke-width="1.1"/>
<rect x="1742" y="868" width="55" height="168" fill="#a2bde6" />
<path d="M1764.0 906.6 A11.5 11.5 0 1 1 1775.5 906.6" fill="none" stroke="#4f6db5" stroke-width="2.2" stroke-linecap="round"/>
<path d="M1764.0 906.6 A11.5 11.5 0 1 1 1780.6 892.7" fill="none" stroke="#b9cdee" stroke-width="2.2" stroke-linecap="round"/>
<path d="M1770.7 896.3 L1780.6 892.7" stroke="#4f6db5" stroke-width="2.2" stroke-linecap="round"/>
<path d="M1764.0 964.4 A11.5 11.5 0 1 1 1775.5 964.4" fill="none" stroke="#4f6db5" stroke-width="2.2" stroke-linecap="round"/>
<path d="M1764.0 964.4 A11.5 11.5 0 0 1 1759.8 960.1" fill="none" stroke="#b9cdee" stroke-width="2.2" stroke-linecap="round"/>
<path d="M1769.0 954.9 L1759.8 960.1" stroke="#4f6db5" stroke-width="2.2" stroke-linecap="round"/>
<rect x="1746.5" y="981.5" width="21" height="12" fill="#b0c8ee" stroke="#5566a8" stroke-width="1"/>
<rect x="1771.5" y="981.5" width="21" height="12" fill="#b0c8ee" stroke="#5566a8" stroke-width="1"/>
<rect x="1746.5" y="1020.5" width="46" height="12" fill="#b0c8ee" stroke="#5566a8" stroke-width="1"/>
<rect x="1799" y="868" width="105" height="112" rx="2" fill="#2c4b7a"/>
<path d="M1805 918 L1807 900 L1808 872 L1809 898 L1811 890 L1813 902 L1815 888 L1817 900 L1819 892 L1821 905 L1824 893 L1827 903 L1830 896 L1834 905 L1840 900 L1850 906 L1870 908 L1904 910 L1904 912 L1870 913 L1850 915 L1840 918 L1834 918 L1827 923 L1821 925 L1815 930 L1811 935 L1809 948 L1807 930 Z" fill="#7f9ad0"/>
<rect x="1806" y="950" width="9" height="9" fill="#7f9bd0" />
<rect x="1799" y="983" width="105" height="53" fill="#a2bde6" />
<rect x="1803.5" y="1004.5" width="102" height="12" fill="#a8c2ea" stroke="#5566a8" stroke-width="1"/>
<rect x="1803.5" y="1020.5" width="102" height="12" fill="#a8c2ea" stroke="#5566a8" stroke-width="1"/>
<circle cx="11.4" cy="1057.7" r="6.3" fill="#3d3f78"/>
<rect x="35" y="1048" width="1182" height="19" rx="3" fill="#d0d0e4"/>
<rect x="1227" y="1048" width="20" height="19" rx="3" fill="#d0d0e4"/>
<polygon points="1233,1052.5 1233,1062.5 1241,1057.5" fill="#111"/>
<rect x="1246" y="1048" width="201" height="19" rx="3" fill="#d0d0e4"/>
<rect x="1456" y="1048" width="19" height="19" fill="#fbb52e" />
<polygon points="1465.5,1052.5 1460,1061.5 1471,1061.5" fill="#111"/>
<rect x="1475" y="1048" width="202" height="19" fill="#d0d0e4" />
<rect x="1677" y="1048" width="179" height="19" fill="#d0d0e4" />
<rect x="1688" y="1052" width="7" height="12" fill="#1c1c2a" />
<rect x="1709" y="1050" width="17" height="13" fill="#1c1c2a" />
<rect x="1755" y="1050" width="9" height="11" fill="#1c1c2a" />
<rect x="1776" y="1050" width="13" height="16" fill="#1c1c2a" />
<rect x="1796.5" y="1052" width="6.5" height="12" fill="#1c1c2a" />
<rect x="1807" y="1050" width="22" height="11" fill="#1c1c2a" />
<rect x="1832" y="1050" width="21" height="11" fill="#1c1c2a" />
<rect x="1723.5" y="1046.5" width="82" height="21" rx="4" fill="none" stroke="#1c1c2a" stroke-width="1.6"/>
<rect x="1874.0" y="1058" width="2" height="8" fill="#3d3f78" />
<rect x="1877.5" y="1055" width="2" height="11" fill="#3d3f78" />
<rect x="1881.0" y="1060" width="2" height="6" fill="#3d3f78" />
<rect x="1884.5" y="1056" width="2" height="10" fill="#3d3f78" />
<polygon points="1894,1055 1901,1055 1897.5,1059.5" fill="#3d3f78"/>
</svg>
<div class="a t" style="left:1764px;top:11px;font-size:11px;color:#1b1b2e;height:17px;line-height:17px;-webkit-text-stroke:0.3px;">27 %</div>
<div class="a t" style="left:46px;top:67px;font-size:10.2px;color:#2a2a40;height:13px;line-height:13px;-webkit-text-stroke:0.2px;">27</div>
<div class="a t" style="left:172px;top:67px;font-size:10.2px;color:#2a2a40;height:13px;line-height:13px;-webkit-text-stroke:0.2px;">28</div>
<div class="a t" style="left:299px;top:67px;font-size:10.2px;color:#2a2a40;height:13px;line-height:13px;-webkit-text-stroke:0.2px;">29</div>
<div class="a t" style="left:425px;top:67px;font-size:10.2px;color:#2a2a40;height:13px;line-height:13px;-webkit-text-stroke:0.2px;">30</div>
<div class="a t" style="left:551px;top:67px;font-size:10.2px;color:#2a2a40;height:13px;line-height:13px;-webkit-text-stroke:0.2px;">31</div>
<div class="a t" style="left:678px;top:67px;font-size:10.2px;color:#2a2a40;height:13px;line-height:13px;-webkit-text-stroke:0.2px;">32</div>
<div class="a t" style="left:804px;top:67px;font-size:10.2px;color:#2a2a40;height:13px;line-height:13px;-webkit-text-stroke:0.2px;">33</div>
<div class="a t" style="left:930px;top:67px;font-size:10.2px;color:#2a2a40;height:13px;line-height:13px;-webkit-text-stroke:0.2px;">34</div>
<div class="a t" style="left:1057px;top:67px;font-size:10.2px;color:#2a2a40;height:13px;line-height:13px;-webkit-text-stroke:0.2px;">35</div>
<div class="a t" style="left:1183px;top:67px;font-size:10.2px;color:#2a2a40;height:13px;line-height:13px;-webkit-text-stroke:0.2px;">36</div>
<div class="a t" style="left:1309px;top:67px;font-size:10.2px;color:#2a2a40;height:13px;line-height:13px;-webkit-text-stroke:0.2px;">37</div>
<div class="a t" style="left:1436px;top:67px;font-size:10.2px;color:#2a2a40;height:13px;line-height:13px;-webkit-text-stroke:0.2px;">38</div>
<div class="a t" style="left:306px;top:88px;font-size:10.8px;color:#1d1d2b;height:12px;line-height:12px;-webkit-text-stroke:0.3px;">TimeFuck</div>
<div class="a t" style="left:811px;top:88px;font-size:10.8px;color:#1d1d2b;height:12px;line-height:12px;-webkit-text-stroke:0.3px;">TimeFuckX2</div>
<div class="a t" style="left:1064px;top:88px;font-size:10.8px;color:#1d1d2b;height:12px;line-height:12px;-webkit-text-stroke:0.3px;">16</div>
<div class="a t" style="left:5px;top:206px;font-size:10.5px;color:#10302a;height:14px;line-height:14px;-webkit-text-stroke:0.4px;">...</div>
<div class="a t" style="left:1502px;top:799px;font-size:15.5px;color:#8e8fab;height:18px;line-height:18px;-webkit-text-stroke:0.5px;">1/4T</div>
<div class="a t" style="left:100px;top:822px;font-size:10.5px;color:#2a2a40;height:14px;line-height:14px;-webkit-text-stroke:0.2px;">0:46</div>
<div class="a t" style="left:245px;top:822px;font-size:10.5px;color:#2a2a40;height:14px;line-height:14px;-webkit-text-stroke:0.2px;">0:48</div>
<div class="a t" style="left:384px;top:822px;font-size:10.5px;color:#2a2a40;height:14px;line-height:14px;-webkit-text-stroke:0.2px;">0:50</div>
<div class="a t" style="left:508px;top:822px;font-size:10.5px;color:#2a2a40;height:14px;line-height:14px;-webkit-text-stroke:0.2px;">0:52</div>
<div class="a t" style="left:628px;top:822px;font-size:10.5px;color:#2a2a40;height:14px;line-height:14px;-webkit-text-stroke:0.2px;">0:54</div>
<div class="a t" style="left:745px;top:822px;font-size:10.5px;color:#2a2a40;height:14px;line-height:14px;-webkit-text-stroke:0.2px;">0:56</div>
<div class="a t" style="left:866px;top:822px;font-size:10.5px;color:#2a2a40;height:14px;line-height:14px;-webkit-text-stroke:0.2px;">0:58</div>
<div class="a t" style="left:993px;top:822px;font-size:10.5px;color:#2a2a40;height:14px;line-height:14px;-webkit-text-stroke:0.2px;">1:00</div>
<div class="a t" style="left:1135px;top:822px;font-size:10.5px;color:#2a2a40;height:14px;line-height:14px;-webkit-text-stroke:0.2px;">1:02</div>
<div class="a t" style="left:1282px;top:822px;font-size:10.5px;color:#2a2a40;height:14px;line-height:14px;-webkit-text-stroke:0.2px;">1:04</div>
<div class="a t" style="left:1426px;top:822px;font-size:10.5px;color:#2a2a40;height:14px;line-height:14px;-webkit-text-stroke:0.2px;">1:06</div>
<div class="a t" style="left:1548px;top:64px;font-size:10.5px;color:#111;width:27px;height:14px;line-height:14px;text-align:center;">Set</div>
<div class="a t" style="left:1568px;top:116px;font-size:10.8px;color:#10302a;width:134px;height:17px;line-height:17px;-webkit-text-stroke:0.36px;">11 WhiteNoise_MPC60st</div>
<div class="a t" style="left:1563px;top:135.5px;font-size:10.8px;color:#1d1d2b;width:128px;height:13px;line-height:13px;-webkit-text-stroke:0.2px;">Mixer</div>
<div class="a t" style="left:1563px;top:152.5px;font-size:10.8px;color:#1d1d2b;width:128px;height:13px;line-height:13px;-webkit-text-stroke:0.2px;">Track Volume</div>
<div class="a t" style="left:1710px;top:118.5px;font-size:10.8px;color:#1d1d2b;width:58px;height:13px;line-height:13px;-webkit-text-stroke:0.2px;">Ext. In</div>
<div class="a t" style="left:1717px;top:135.5px;font-size:10.8px;color:#1d1d2b;width:51px;height:13px;line-height:13px;-webkit-text-stroke:0.2px;">1 Tempest</div>
<div class="a t" style="left:1707px;top:152.5px;font-size:10.8px;color:#1d1d2b;width:17px;height:13px;line-height:13px;text-align:center;-webkit-text-stroke:0.2px;">In</div>
<div class="a t" style="left:1727px;top:152.5px;font-size:10.8px;color:#1d1d2b;width:27px;height:13px;line-height:13px;text-align:center;-webkit-text-stroke:0.2px;">Auto</div>
<div class="a t" style="left:1757px;top:152.5px;font-size:10.8px;color:#1d1d2b;width:20px;height:13px;line-height:13px;text-align:center;-webkit-text-stroke:0.2px;">Off</div>
<div class="a t" style="left:1710px;top:169.5px;font-size:10.8px;color:#1d1d2b;width:58px;height:13px;line-height:13px;-webkit-text-stroke:0.2px;">DRUMS&amp;GROUP</div>
<div class="a t" style="left:1783px;top:118.5px;font-size:10.8px;color:#1d1d2b;width:46px;height:13px;line-height:13px;text-align:center;-webkit-text-stroke:0.2px;">11</div>
<div class="a t" style="left:1833px;top:118.5px;font-size:10.8px;color:#1d1d2b;width:21px;height:13px;line-height:13px;text-align:center;-webkit-text-stroke:0.2px;">S</div>
<div class="a t" style="left:1783px;top:135.5px;font-size:10.8px;color:#1d1d2b;width:46px;height:13px;line-height:13px;text-align:center;-webkit-text-stroke:0.2px;">-7.2</div>
<div class="a t" style="left:1833px;top:135.5px;font-size:10.8px;color:#1d1d2b;width:46px;height:13px;line-height:13px;text-align:center;-webkit-text-stroke:0.2px;">C</div>
<div class="a t" style="left:1783px;top:152.5px;font-size:10.8px;color:#1d1d2b;width:30px;height:13px;line-height:13px;text-align:center;-webkit-text-stroke:0.2px;">−∞</div>
<div class="a t" style="left:1816px;top:152.5px;font-size:10.8px;color:#1d1d2b;width:30px;height:13px;line-height:13px;text-align:center;-webkit-text-stroke:0.2px;">−∞</div>
<div class="a t" style="left:1849px;top:152.5px;font-size:10.8px;color:#1d1d2b;width:30px;height:13px;line-height:13px;text-align:center;-webkit-text-stroke:0.2px;">−∞</div>
<div class="a t" style="left:1783px;top:169.5px;font-size:10.8px;color:#1d1d2b;width:30px;height:13px;line-height:13px;text-align:center;-webkit-text-stroke:0.2px;">−∞</div>
<div class="a t" style="left:1568px;top:204px;font-size:10.8px;color:#10302a;width:134px;height:17px;line-height:17px;-webkit-text-stroke:0.36px;">12 woodblock torture</div>
<div class="a t" style="left:1563px;top:223.5px;font-size:10.8px;color:#1d1d2b;width:128px;height:13px;line-height:13px;-webkit-text-stroke:0.2px;">Mixer</div>
<div class="a t" style="left:1563px;top:240.5px;font-size:10.8px;color:#1d1d2b;width:128px;height:13px;line-height:13px;-webkit-text-stroke:0.2px;">B-echo the dubphin</div>
<div class="a t" style="left:1710px;top:206.5px;font-size:10.8px;color:#1d1d2b;width:58px;height:13px;line-height:13px;-webkit-text-stroke:0.2px;">All Ins</div>
<div class="a t" style="left:1717px;top:223.5px;font-size:10.8px;color:#1d1d2b;width:51px;height:13px;line-height:13px;-webkit-text-stroke:0.2px;">All Channels</div>
<div class="a t" style="left:1707px;top:240.5px;font-size:10.8px;color:#1d1d2b;width:17px;height:13px;line-height:13px;text-align:center;-webkit-text-stroke:0.2px;">In</div>
<div class="a t" style="left:1727px;top:240.5px;font-size:10.8px;color:#1d1d2b;width:27px;height:13px;line-height:13px;text-align:center;-webkit-text-stroke:0.2px;">Auto</div>
<div class="a t" style="left:1757px;top:240.5px;font-size:10.8px;color:#1d1d2b;width:20px;height:13px;line-height:13px;text-align:center;-webkit-text-stroke:0.2px;">Off</div>
<div class="a t" style="left:1710px;top:257.5px;font-size:10.8px;color:#1d1d2b;width:58px;height:13px;line-height:13px;-webkit-text-stroke:0.2px;">DRUMS&amp;GROUP</div>
<div class="a t" style="left:1783px;top:206.5px;font-size:10.8px;color:#1d1d2b;width:46px;height:13px;line-height:13px;text-align:center;-webkit-text-stroke:0.2px;">12</div>
<div class="a t" style="left:1833px;top:206.5px;font-size:10.8px;color:#1d1d2b;width:21px;height:13px;line-height:13px;text-align:center;-webkit-text-stroke:0.2px;">S</div>
<div class="a t" style="left:1783px;top:223.5px;font-size:10.8px;color:#1d1d2b;width:46px;height:13px;line-height:13px;text-align:center;-webkit-text-stroke:0.2px;">-17.4</div>
<div class="a t" style="left:1833px;top:223.5px;font-size:10.8px;color:#1d1d2b;width:46px;height:13px;line-height:13px;text-align:center;-webkit-text-stroke:0.2px;">C</div>
<div class="a t" style="left:1783px;top:240.5px;font-size:10.8px;color:#1d1d2b;width:30px;height:13px;line-height:13px;text-align:center;-webkit-text-stroke:0.2px;">-25.0</div>
<div class="a t" style="left:1816px;top:240.5px;font-size:10.8px;color:#1d1d2b;width:30px;height:13px;line-height:13px;text-align:center;-webkit-text-stroke:0.2px;">-6.1</div>
<div class="a t" style="left:1849px;top:240.5px;font-size:10.8px;color:#1d1d2b;width:30px;height:13px;line-height:13px;text-align:center;-webkit-text-stroke:0.2px;">−∞</div>
<div class="a t" style="left:1783px;top:257.5px;font-size:10.8px;color:#1d1d2b;width:30px;height:13px;line-height:13px;text-align:center;-webkit-text-stroke:0.2px;">−∞</div>
<div class="a t" style="left:1567px;top:292px;font-size:10.8px;color:#ececec;height:17px;line-height:17px;-webkit-text-stroke:0.36px;">=QUiKDRUM=</div>
<div class="a t" style="left:1783px;top:294.5px;font-size:10.8px;color:#1d1d2b;width:46px;height:13px;line-height:13px;text-align:center;-webkit-text-stroke:0.2px;">13</div>
<div class="a t" style="left:1833px;top:294.5px;font-size:10.8px;color:#1d1d2b;width:21px;height:13px;line-height:13px;text-align:center;-webkit-text-stroke:0.2px;">S</div>
<div class="a t" style="left:1562px;top:311px;font-size:10.8px;color:#3a0f2a;width:140px;height:17px;line-height:17px;-webkit-text-stroke:0.36px;">14 gleetch</div>
<div class="a t" style="left:1560px;top:330.5px;font-size:10.8px;color:#1d1d2b;width:131px;height:13px;line-height:13px;-webkit-text-stroke:0.2px;">Mixer</div>
<div class="a t" style="left:1560px;top:347.5px;font-size:10.8px;color:#1d1d2b;width:131px;height:13px;line-height:13px;-webkit-text-stroke:0.2px;">Track Volume</div>
<div class="a t" style="left:1548px;top:400px;font-size:10.8px;color:#f0bcd8;height:13px;line-height:13px;-webkit-text-stroke:0.3px;">Mixer</div>
<div class="a t" style="left:1548px;top:415px;font-size:10.8px;color:#f0bcd8;height:13px;line-height:13px;-webkit-text-stroke:0.3px;">Track Panning</div>
<div class="a t" style="left:1548px;top:469px;font-size:10.8px;color:#f0bcd8;height:13px;line-height:13px;-webkit-text-stroke:0.3px;">Mixer</div>
<div class="a t" style="left:1548px;top:484px;font-size:10.8px;color:#f0bcd8;height:13px;line-height:13px;-webkit-text-stroke:0.3px;">C-dub delayzeee</div>
<div class="a t" style="left:1710px;top:313.5px;font-size:10.8px;color:#1d1d2b;width:58px;height:13px;line-height:13px;-webkit-text-stroke:0.2px;">Ext. In</div>
<div class="a t" style="left:1717px;top:330.5px;font-size:10.8px;color:#1d1d2b;width:51px;height:13px;line-height:13px;-webkit-text-stroke:0.2px;">1 Tempest</div>
<div class="a t" style="left:1707px;top:347.5px;font-size:10.8px;color:#1d1d2b;width:17px;height:13px;line-height:13px;text-align:center;-webkit-text-stroke:0.2px;">In</div>
<div class="a t" style="left:1727px;top:347.5px;font-size:10.8px;color:#1d1d2b;width:27px;height:13px;line-height:13px;text-align:center;-webkit-text-stroke:0.2px;">Auto</div>
<div class="a t" style="left:1757px;top:347.5px;font-size:10.8px;color:#1d1d2b;width:20px;height:13px;line-height:13px;text-align:center;-webkit-text-stroke:0.2px;">Off</div>
<div class="a t" style="left:1710px;top:364.5px;font-size:10.8px;color:#1d1d2b;width:58px;height:13px;line-height:13px;-webkit-text-stroke:0.2px;">Main</div>
<div class="a t" style="left:1783px;top:313.5px;font-size:10.8px;color:#1d1d2b;width:46px;height:13px;line-height:13px;text-align:center;-webkit-text-stroke:0.2px;">14</div>
<div class="a t" style="left:1833px;top:313.5px;font-size:10.8px;color:#1d1d2b;width:21px;height:13px;line-height:13px;text-align:center;-webkit-text-stroke:0.2px;">S</div>
<div class="a t" style="left:1783px;top:330.5px;font-size:10.8px;color:#1d1d2b;width:46px;height:13px;line-height:13px;text-align:center;-webkit-text-stroke:0.2px;">-9.8</div>
<div class="a t" style="left:1833px;top:330.5px;font-size:10.8px;color:#1d1d2b;width:46px;height:13px;line-height:13px;text-align:center;-webkit-text-stroke:0.2px;">16L</div>
<div class="a t" style="left:1783px;top:347.5px;font-size:10.8px;color:#1d1d2b;width:30px;height:13px;line-height:13px;text-align:center;-webkit-text-stroke:0.2px;">-21.2</div>
<div class="a t" style="left:1816px;top:347.5px;font-size:10.8px;color:#1d1d2b;width:30px;height:13px;line-height:13px;text-align:center;-webkit-text-stroke:0.2px;">-22.1</div>
<div class="a t" style="left:1849px;top:347.5px;font-size:10.8px;color:#1d1d2b;width:30px;height:13px;line-height:13px;text-align:center;-webkit-text-stroke:0.2px;">-25.5</div>
<div class="a t" style="left:1783px;top:364.5px;font-size:10.8px;color:#1d1d2b;width:30px;height:13px;line-height:13px;text-align:center;-webkit-text-stroke:0.2px;">−∞</div>
<div class="a t" style="left:1562px;top:503px;font-size:10.8px;color:#0b2a28;width:140px;height:17px;line-height:17px;-webkit-text-stroke:0.36px;">15 Riser i hardly know her</div>
<div class="a t" style="left:1560px;top:522.5px;font-size:10.8px;color:#1d1d2b;width:131px;height:13px;line-height:13px;-webkit-text-stroke:0.2px;">Mixer</div>
<div class="a t" style="left:1560px;top:539.5px;font-size:10.8px;color:#1d1d2b;width:131px;height:13px;line-height:13px;-webkit-text-stroke:0.2px;">A-herb verb</div>
<div class="a t" style="left:1717px;top:505.5px;font-size:10.8px;color:#1d1d2b;width:51px;height:13px;line-height:13px;-webkit-text-stroke:0.2px;">1 Tempest</div>
<div class="a t" style="left:1707px;top:522.5px;font-size:10.8px;color:#1d1d2b;width:17px;height:13px;line-height:13px;text-align:center;-webkit-text-stroke:0.2px;">In</div>
<div class="a t" style="left:1727px;top:522.5px;font-size:10.8px;color:#1d1d2b;width:27px;height:13px;line-height:13px;text-align:center;-webkit-text-stroke:0.2px;">Auto</div>
<div class="a t" style="left:1757px;top:522.5px;font-size:10.8px;color:#1d1d2b;width:20px;height:13px;line-height:13px;text-align:center;-webkit-text-stroke:0.2px;">Off</div>
<div class="a t" style="left:1710px;top:539.5px;font-size:10.8px;color:#1d1d2b;width:58px;height:13px;line-height:13px;-webkit-text-stroke:0.2px;">Main</div>
<div class="a t" style="left:1783px;top:505.5px;font-size:10.8px;color:#1d1d2b;width:46px;height:13px;line-height:13px;text-align:center;-webkit-text-stroke:0.2px;">15</div>
<div class="a t" style="left:1833px;top:505.5px;font-size:10.8px;color:#1d1d2b;width:21px;height:13px;line-height:13px;text-align:center;-webkit-text-stroke:0.2px;">S</div>
<div class="a t" style="left:1783px;top:522.5px;font-size:10.8px;color:#1d1d2b;width:46px;height:13px;line-height:13px;text-align:center;-webkit-text-stroke:0.2px;">-8.8</div>
<div class="a t" style="left:1833px;top:522.5px;font-size:10.8px;color:#1d1d2b;width:46px;height:13px;line-height:13px;text-align:center;-webkit-text-stroke:0.2px;">C</div>
<div class="a t" style="left:1783px;top:539.5px;font-size:10.8px;color:#1d1d2b;width:30px;height:13px;line-height:13px;text-align:center;-webkit-text-stroke:0.2px;">−∞</div>
<div class="a t" style="left:1816px;top:539.5px;font-size:10.8px;color:#1d1d2b;width:30px;height:13px;line-height:13px;text-align:center;-webkit-text-stroke:0.2px;">-17.8</div>
<div class="a t" style="left:1849px;top:539.5px;font-size:10.8px;color:#1d1d2b;width:30px;height:13px;line-height:13px;text-align:center;-webkit-text-stroke:0.2px;">−∞</div>
<div class="a t" style="left:1783px;top:556.5px;font-size:10.8px;color:#1d1d2b;width:30px;height:13px;line-height:13px;text-align:center;-webkit-text-stroke:0.2px;">−∞</div>
<div class="a t" style="left:1563px;top:568px;font-size:10.8px;color:#3a1010;height:17px;line-height:17px;-webkit-text-stroke:0.36px;">A herb verb</div>
<div class="a t" style="left:1560px;top:587.5px;font-size:10.8px;color:#1d1d2b;width:131px;height:13px;line-height:13px;-webkit-text-stroke:0.2px;">Track Panning</div>
<div class="a t" style="left:1710px;top:570.5px;font-size:10.8px;color:#1d1d2b;width:58px;height:13px;line-height:13px;-webkit-text-stroke:0.2px;">Main</div>
<div class="a t" style="left:1783px;top:570.5px;font-size:10.8px;color:#1d1d2b;width:46px;height:13px;line-height:13px;text-align:center;-webkit-text-stroke:0.2px;">A</div>
<div class="a t" style="left:1833px;top:570.5px;font-size:10.8px;color:#1d1d2b;width:21px;height:13px;line-height:13px;text-align:center;-webkit-text-stroke:0.2px;">S</div>
<div class="a t" style="left:1857px;top:570.5px;font-size:9.6px;color:#1d1d2b;width:22px;height:13px;line-height:13px;text-align:center;-webkit-text-stroke:0.2px;letter-spacing:-0.45px;overflow:visible;">Post</div>
<div class="a t" style="left:1783px;top:587.5px;font-size:10.8px;color:#1d1d2b;width:46px;height:13px;line-height:13px;text-align:center;-webkit-text-stroke:0.2px;">0.9</div>
<div class="a t" style="left:1833px;top:587.5px;font-size:10.8px;color:#1d1d2b;width:46px;height:13px;line-height:13px;text-align:center;-webkit-text-stroke:0.2px;">C</div>
<div class="a t" style="left:1783px;top:604.5px;font-size:10.8px;color:#1d1d2b;width:30px;height:13px;line-height:13px;text-align:center;-webkit-text-stroke:0.2px;">−∞</div>
<div class="a t" style="left:1816px;top:604.5px;font-size:10.8px;color:#1d1d2b;width:30px;height:13px;line-height:13px;text-align:center;-webkit-text-stroke:0.2px;">−∞</div>
<div class="a t" style="left:1849px;top:604.5px;font-size:10.8px;color:#1d1d2b;width:30px;height:13px;line-height:13px;text-align:center;-webkit-text-stroke:0.2px;">−∞</div>
<div class="a t" style="left:1563px;top:623px;font-size:10.8px;color:#3a1a08;height:17px;line-height:17px;-webkit-text-stroke:0.36px;">B echo the dubphin</div>
<div class="a t" style="left:1560px;top:642.5px;font-size:10.8px;color:#1d1d2b;width:131px;height:13px;line-height:13px;-webkit-text-stroke:0.2px;">Track Panning</div>
<div class="a t" style="left:1710px;top:625.5px;font-size:10.8px;color:#1d1d2b;width:58px;height:13px;line-height:13px;-webkit-text-stroke:0.2px;">Main</div>
<div class="a t" style="left:1783px;top:625.5px;font-size:10.8px;color:#1d1d2b;width:46px;height:13px;line-height:13px;text-align:center;-webkit-text-stroke:0.2px;">B</div>
<div class="a t" style="left:1833px;top:625.5px;font-size:10.8px;color:#1d1d2b;width:21px;height:13px;line-height:13px;text-align:center;-webkit-text-stroke:0.2px;">S</div>
<div class="a t" style="left:1857px;top:625.5px;font-size:9.6px;color:#1d1d2b;width:22px;height:13px;line-height:13px;text-align:center;-webkit-text-stroke:0.2px;letter-spacing:-0.45px;overflow:visible;">Post</div>
<div class="a t" style="left:1783px;top:642.5px;font-size:10.8px;color:#1d1d2b;width:46px;height:13px;line-height:13px;text-align:center;-webkit-text-stroke:0.2px;">0</div>
<div class="a t" style="left:1833px;top:642.5px;font-size:10.8px;color:#1d1d2b;width:46px;height:13px;line-height:13px;text-align:center;-webkit-text-stroke:0.2px;">C</div>
<div class="a t" style="left:1783px;top:659.5px;font-size:10.8px;color:#1d1d2b;width:30px;height:13px;line-height:13px;text-align:center;-webkit-text-stroke:0.2px;">−∞</div>
<div class="a t" style="left:1816px;top:659.5px;font-size:10.8px;color:#1d1d2b;width:30px;height:13px;line-height:13px;text-align:center;-webkit-text-stroke:0.2px;">−∞</div>
<div class="a t" style="left:1849px;top:659.5px;font-size:10.8px;color:#1d1d2b;width:30px;height:13px;line-height:13px;text-align:center;-webkit-text-stroke:0.2px;">−∞</div>
<div class="a t" style="left:1563px;top:677px;font-size:10.8px;color:#2a3010;height:17px;line-height:17px;-webkit-text-stroke:0.36px;">C dub delayzeee</div>
<div class="a t" style="left:1560px;top:696.5px;font-size:10.8px;color:#1d1d2b;width:131px;height:13px;line-height:13px;-webkit-text-stroke:0.2px;">Track Volume</div>
<div class="a t" style="left:1710px;top:679.5px;font-size:10.8px;color:#1d1d2b;width:58px;height:13px;line-height:13px;-webkit-text-stroke:0.2px;">Main</div>
<div class="a t" style="left:1783px;top:679.5px;font-size:10.8px;color:#1d1d2b;width:46px;height:13px;line-height:13px;text-align:center;-webkit-text-stroke:0.2px;">C</div>
<div class="a t" style="left:1833px;top:679.5px;font-size:10.8px;color:#1d1d2b;width:21px;height:13px;line-height:13px;text-align:center;-webkit-text-stroke:0.2px;">S</div>
<div class="a t" style="left:1857px;top:679.5px;font-size:9.6px;color:#1d1d2b;width:22px;height:13px;line-height:13px;text-align:center;-webkit-text-stroke:0.2px;letter-spacing:-0.45px;overflow:visible;">Post</div>
<div class="a t" style="left:1783px;top:696.5px;font-size:10.8px;color:#1d1d2b;width:46px;height:13px;line-height:13px;text-align:center;-webkit-text-stroke:0.2px;">0</div>
<div class="a t" style="left:1833px;top:696.5px;font-size:10.8px;color:#1d1d2b;width:46px;height:13px;line-height:13px;text-align:center;-webkit-text-stroke:0.2px;">C</div>
<div class="a t" style="left:1783px;top:713.5px;font-size:10.8px;color:#1d1d2b;width:30px;height:13px;line-height:13px;text-align:center;-webkit-text-stroke:0.2px;">−∞</div>
<div class="a t" style="left:1816px;top:713.5px;font-size:10.8px;color:#1d1d2b;width:30px;height:13px;line-height:13px;text-align:center;-webkit-text-stroke:0.2px;">−∞</div>
<div class="a t" style="left:1849px;top:713.5px;font-size:10.8px;color:#1d1d2b;width:30px;height:13px;line-height:13px;text-align:center;-webkit-text-stroke:0.2px;">−∞</div>
<div class="a t" style="left:1563px;top:731px;font-size:10.8px;color:#153028;height:17px;line-height:17px;-webkit-text-stroke:0.36px;">D return of da ping pong</div>
<div class="a t" style="left:1783px;top:733.5px;font-size:10.8px;color:#1d1d2b;width:46px;height:13px;line-height:13px;text-align:center;-webkit-text-stroke:0.2px;">D</div>
<div class="a t" style="left:1833px;top:733.5px;font-size:10.8px;color:#1d1d2b;width:21px;height:13px;line-height:13px;text-align:center;-webkit-text-stroke:0.2px;">S</div>
<div class="a t" style="left:1857px;top:733.5px;font-size:9.6px;color:#1d1d2b;width:22px;height:13px;line-height:13px;text-align:center;-webkit-text-stroke:0.2px;letter-spacing:-0.45px;overflow:visible;">Post</div>
<div class="a t" style="left:1564px;top:750px;font-size:10.8px;color:#3a0a30;height:17px;line-height:17px;-webkit-text-stroke:0.36px;">Main</div>
<div class="a t" style="left:1560px;top:769.5px;font-size:10.8px;color:#1d1d2b;width:131px;height:13px;line-height:13px;-webkit-text-stroke:0.2px;">Song Tempo</div>
<div class="a t" style="left:1548px;top:788.5px;font-size:10.8px;color:#1d1d2b;width:69px;height:13px;line-height:13px;text-align:center;-webkit-text-stroke:0.2px;">66.0</div>
<div class="a t" style="left:1620px;top:788px;font-size:10.8px;color:#eee;height:13px;line-height:13px;">-</div>
<div class="a t" style="left:1629px;top:788.5px;font-size:10.8px;color:#1d1d2b;width:71px;height:13px;line-height:13px;text-align:center;-webkit-text-stroke:0.2px;">150</div>
<div class="a t" style="left:1717px;top:752.5px;font-size:10.8px;color:#1d1d2b;width:51px;height:13px;line-height:13px;-webkit-text-stroke:0.2px;">1/2 Main Out</div>
<div class="a t" style="left:1717px;top:769.5px;font-size:10.8px;color:#1d1d2b;width:51px;height:13px;line-height:13px;-webkit-text-stroke:0.2px;">1/2 Main Out</div>
<div class="a t" style="left:1783px;top:752.5px;font-size:10.8px;color:#1d1d2b;width:46px;height:13px;line-height:13px;text-align:center;-webkit-text-stroke:0.2px;">0</div>
<div class="a t" style="left:1833px;top:752.5px;font-size:10.8px;color:#1d1d2b;width:46px;height:13px;line-height:13px;text-align:center;-webkit-text-stroke:0.2px;">0</div>
<div class="a t" style="left:1833px;top:769.5px;font-size:10.8px;color:#1d1d2b;width:46px;height:13px;line-height:13px;text-align:center;-webkit-text-stroke:0.2px;">C</div>
<div class="a t" style="left:1563px;top:825px;font-size:10.8px;color:#111;height:14px;line-height:14px;">1.00x</div>
<div class="a t" style="left:1669px;top:825.5px;font-size:10.8px;color:#1d1d2b;width:14px;height:14px;line-height:14px;text-align:center;-webkit-text-stroke:0.2px;">H</div>
<div class="a t" style="left:1687px;top:825.5px;font-size:10.8px;color:#1d1d2b;width:14px;height:14px;line-height:14px;text-align:center;-webkit-text-stroke:0.2px;">W</div>
<div class="a t" style="left:24px;top:994px;font-size:10px;color:#8aa4d4;">10k</div>
<div class="a t" style="left:79px;top:889px;font-size:10.8px;color:#1f2b45;height:14px;line-height:14px;-webkit-text-stroke:0.35px;">Mode</div>
<div class="a t" style="left:82px;top:903px;font-size:10.8px;color:#5b7bb8;width:34px;height:12px;line-height:12px;text-align:left;">Stereo</div>
<div class="a t" style="left:79px;top:917px;font-size:10.8px;color:#1f2b45;height:14px;line-height:14px;-webkit-text-stroke:0.35px;">Edit</div>
<div class="a t" style="left:79px;top:931px;font-size:10.8px;color:#1f2b45;width:45px;height:12px;line-height:12px;text-align:center;">R</div>
<div class="a t" style="left:79px;top:946px;font-size:10.8px;color:#1f2b45;height:14px;line-height:14px;-webkit-text-stroke:0.35px;">Adapt. Q</div>
<div class="a t" style="left:79px;top:960px;font-size:10.8px;color:#1f2b45;width:45px;height:12px;line-height:12px;text-align:center;">On</div>
<div class="a t" style="left:79px;top:975px;font-size:10.8px;color:#1f2b45;height:14px;line-height:14px;-webkit-text-stroke:0.35px;">Scale</div>
<div class="a t" style="left:79px;top:989px;font-size:10.8px;color:#1f2b45;width:45px;height:12px;line-height:12px;text-align:center;">66 %</div>
<div class="a t" style="left:79px;top:1004px;font-size:10.8px;color:#1f2b45;height:14px;line-height:14px;-webkit-text-stroke:0.35px;">Gain</div>
<div class="a t" style="left:79px;top:1018px;font-size:10.8px;color:#1f2b45;width:45px;height:13px;line-height:13px;text-align:center;">0.00 dB</div>
<div class="a t" style="left:9px;top:1021px;font-size:10.8px;color:#1f2b45;height:14px;line-height:14px;">7</div>
<div class="a t" style="left:56px;top:1021px;font-size:10.8px;color:#1f2b45;height:14px;line-height:14px;">8</div>
<div class="a t" style="left:152px;top:852px;font-size:10.8px;color:#1f2b45;height:15px;line-height:15px;-webkit-text-stroke:0.35px;">Rub A Dub</div>
<div class="a t" style="left:323px;top:852px;font-size:10.8px;color:#4a64a8;width:31px;height:15px;line-height:15px;text-align:center;">Rand</div>
<div class="a t" style="left:358px;top:852px;font-size:10.8px;color:#4a64a8;width:26px;height:15px;line-height:15px;text-align:center;">Map</div>
<div class="a t" style="left:153.4px;top:875.3px;font-size:10.8px;color:#b6c7e0;width:47px;text-align:center;-webkit-text-stroke:0.35px;line-height:12px;white-space:normal;">Filter<br>Cutoff</div>
<div class="a t" style="left:152.9px;top:931.8px;font-size:10.8px;color:#1f2b45;width:48px;height:14px;line-height:14px;text-align:center;-webkit-text-stroke:0.35px;">25</div>
<div class="a t" style="left:205.2px;top:875.3px;font-size:10.8px;color:#b6c7e0;width:47px;text-align:center;-webkit-text-stroke:0.35px;line-height:12px;white-space:normal;">Filter<br>Reso</div>
<div class="a t" style="left:204.7px;top:931.8px;font-size:10.8px;color:#1f2b45;width:48px;height:14px;line-height:14px;text-align:center;-webkit-text-stroke:0.35px;">41 %</div>
<div class="a t" style="left:257.4px;top:875.3px;font-size:10.8px;color:#a9bddf;width:47px;text-align:center;-webkit-text-stroke:0.35px;line-height:12px;white-space:normal;">Reverb<br>Level</div>
<div class="a t" style="left:256.9px;top:931.8px;font-size:10.8px;color:#1f2b45;width:48px;height:14px;line-height:14px;text-align:center;-webkit-text-stroke:0.35px;">0.0 %</div>
<div class="a t" style="left:309.4px;top:875.3px;font-size:10.8px;color:#a9bddf;width:47px;text-align:center;-webkit-text-stroke:0.35px;line-height:12px;white-space:normal;">Stereo<br>Width</div>
<div class="a t" style="left:308.9px;top:931.8px;font-size:10.8px;color:#1f2b45;width:48px;height:14px;line-height:14px;text-align:center;-webkit-text-stroke:0.35px;">126 %</div>
<div class="a t" style="left:153.4px;top:957.2px;font-size:10.8px;color:#92aad0;width:47px;text-align:center;-webkit-text-stroke:0.35px;line-height:12px;white-space:normal;">Wobble<br>Morph</div>
<div class="a t" style="left:152.9px;top:1013.7px;font-size:10.8px;color:#1f2b45;width:48px;height:14px;line-height:14px;text-align:center;-webkit-text-stroke:0.35px;">79 %</div>
<div class="a t" style="left:205.2px;top:957.2px;font-size:10.8px;color:#92aad0;width:47px;text-align:center;-webkit-text-stroke:0.35px;line-height:12px;white-space:normal;">Feedbac<br>k</div>
<div class="a t" style="left:204.7px;top:1013.7px;font-size:10.8px;color:#1f2b45;width:48px;height:14px;line-height:14px;text-align:center;-webkit-text-stroke:0.35px;">61 %</div>
<div class="a t" style="left:257.4px;top:957.2px;font-size:10.8px;color:#ffffff;width:47px;text-align:center;-webkit-text-stroke:0.35px;line-height:12px;white-space:normal;">Rack<br>Dry/Wet</div>
<div class="a t" style="left:256.9px;top:1013.7px;font-size:10.8px;color:#1f2b45;width:48px;height:14px;line-height:14px;text-align:center;-webkit-text-stroke:0.35px;">29</div>
<div class="a t" style="left:309.4px;top:957.2px;font-size:10.8px;color:#ffffff;width:47px;text-align:center;-webkit-text-stroke:0.35px;line-height:12px;white-space:normal;">Chain<br>Volume</div>
<div class="a t" style="left:308.9px;top:1013.7px;font-size:10.8px;color:#1f2b45;width:48px;height:14px;line-height:14px;text-align:center;-webkit-text-stroke:0.35px;">0.0 dB</div>
<div class="a t" style="left:526px;top:878px;font-size:10.8px;color:#6a86c8;width:30px;height:13px;line-height:13px;text-align:center;">Chain</div>
<div class="a t" style="left:559px;top:878px;font-size:10.8px;color:#1f2b45;width:30px;height:13px;line-height:13px;text-align:center;">Hide</div>
<div class="a t" style="left:368px;top:900px;font-size:10.8px;color:#2a4070;height:17px;line-height:17px;">Auto Filter | ...</div>
<div class="a t" style="left:450px;top:902px;font-size:10.8px;color:#1f2b45;width:38px;height:12px;line-height:12px;text-align:center;">0.0 dB</div>
<div class="a t" style="left:492px;top:902px;font-size:10.8px;color:#1f2b45;width:38px;height:12px;line-height:12px;text-align:center;">C</div>
<div class="a t" style="left:554px;top:902px;font-size:10.8px;color:#6a86c8;width:16px;height:12px;line-height:12px;text-align:center;">S</div>
<div class="a t" style="left:368px;top:919px;font-size:10.8px;color:#2a4070;height:17px;line-height:17px;">Dry</div>
<div class="a t" style="left:450px;top:921px;font-size:10.8px;color:#1f2b45;width:38px;height:12px;line-height:12px;text-align:center;">0.0 dB</div>
<div class="a t" style="left:492px;top:921px;font-size:10.8px;color:#1f2b45;width:38px;height:12px;line-height:12px;text-align:center;">C</div>
<div class="a t" style="left:554px;top:921px;font-size:10.8px;color:#6a86c8;width:16px;height:12px;line-height:12px;text-align:center;">S</div>
<div class="a t" style="left:400.0px;top:978.6px;font-size:10.8px;color:#2a3a5e;width:160px;height:14px;line-height:14px;text-align:center;">Drop Audio Effects Here</div>
<div class="a t" style="left:628px;top:852px;font-size:10.8px;color:#1f2b45;height:15px;line-height:15px;-webkit-text-stroke:0.35px;">Auto Filter</div>
<div class="a t" style="left:560px;top:990px;font-size:10.8px;color:#3a5a9a;width:115px;height:14px;line-height:14px;text-align:center;-webkit-text-stroke:0.35px;transform:rotate(-90deg);">Sidechain</div>
<div class="a t" style="left:630px;top:871px;font-size:10.8px;color:#1f2b45;width:52px;height:14px;line-height:14px;text-align:center;-webkit-text-stroke:0.35px;">Envelope</div>
<div class="a t" style="left:615.2px;top:920px;font-size:10.8px;color:#1f2b45;width:80px;height:14px;line-height:14px;text-align:center;-webkit-text-stroke:0.15px;">127</div>
<div class="a t" style="left:615.2px;top:934.5px;font-size:10.8px;color:#1f2b45;width:80px;height:14px;line-height:14px;text-align:center;">Attack</div>
<div class="a t" style="left:615.2px;top:970.4px;font-size:10.8px;color:#1f2b45;width:80px;height:14px;line-height:14px;text-align:center;-webkit-text-stroke:0.15px;">0.34 ms</div>
<div class="a t" style="left:615.2px;top:984.5px;font-size:10.8px;color:#1f2b45;width:80px;height:14px;line-height:14px;text-align:center;">Release</div>
<div class="a t" style="left:615.2px;top:1020.3px;font-size:10.8px;color:#1f2b45;width:80px;height:14px;line-height:14px;text-align:center;-webkit-text-stroke:0.15px;">194 ms</div>
<div class="a t" style="left:713.0px;top:967px;font-size:10.5px;color:#9ab0d8;width:30px;height:14px;line-height:14px;text-align:center;-webkit-text-stroke:0.3px;">100</div>
<div class="a t" style="left:782.0px;top:967px;font-size:10.5px;color:#9ab0d8;width:30px;height:14px;line-height:14px;text-align:center;-webkit-text-stroke:0.3px;">1k</div>
<div class="a t" style="left:851.0px;top:967px;font-size:10.5px;color:#9ab0d8;width:30px;height:14px;line-height:14px;text-align:center;-webkit-text-stroke:0.3px;">10k</div>
<div class="a t" style="left:800px;top:984px;font-size:10.8px;color:#6a86c8;width:33px;height:13px;line-height:13px;text-align:center;">Clean</div>
<div class="a t" style="left:847px;top:984px;font-size:10.8px;color:#1f2b45;width:19px;height:13px;line-height:13px;text-align:center;">12</div>
<div class="a t" style="left:869px;top:984px;font-size:10.8px;color:#1f2b45;width:19px;height:13px;line-height:13px;text-align:center;">24</div>
<div class="a t" style="left:688px;top:1005px;font-size:10.8px;color:#6a86c8;width:60px;height:13px;line-height:13px;text-align:center;">Quantize</div>
<div class="a t" style="left:751px;top:1005px;font-size:10.8px;color:#6a86c8;width:25px;height:13px;line-height:13px;text-align:center;">0.5</div>
<div class="a t" style="left:779px;top:1005px;font-size:10.8px;color:#6a86c8;width:25px;height:13px;line-height:13px;text-align:center;">1</div>
<div class="a t" style="left:807px;top:1005px;font-size:10.8px;color:#1f2b45;width:25px;height:13px;line-height:13px;text-align:center;">2</div>
<div class="a t" style="left:835px;top:1005px;font-size:10.8px;color:#6a86c8;width:25px;height:13px;line-height:13px;text-align:center;">3</div>
<div class="a t" style="left:863px;top:1005px;font-size:10.8px;color:#6a86c8;width:25px;height:13px;line-height:13px;text-align:center;">4</div>
<div class="a t" style="left:751px;top:1021px;font-size:10.8px;color:#6a86c8;width:25px;height:13px;line-height:13px;text-align:center;">5</div>
<div class="a t" style="left:779px;top:1021px;font-size:10.8px;color:#6a86c8;width:25px;height:13px;line-height:13px;text-align:center;">6</div>
<div class="a t" style="left:807px;top:1021px;font-size:10.8px;color:#6a86c8;width:25px;height:13px;line-height:13px;text-align:center;">8</div>
<div class="a t" style="left:835px;top:1021px;font-size:10.8px;color:#6a86c8;width:25px;height:13px;line-height:13px;text-align:center;">12</div>
<div class="a t" style="left:863px;top:1021px;font-size:10.8px;color:#6a86c8;width:25px;height:13px;line-height:13px;text-align:center;">16</div>
<div class="a t" style="left:877.0px;top:870.6px;font-size:10.8px;color:#1f2b45;width:80px;height:14px;line-height:14px;text-align:center;-webkit-text-stroke:0.35px;">Filter</div>
<div class="a t" style="left:877.0px;top:883.5px;font-size:10.8px;color:#1f2b45;width:80px;height:14px;line-height:14px;text-align:center;">Freq</div>
<div class="a t" style="left:877.0px;top:919.6px;font-size:10.8px;color:#1f2b45;width:80px;height:14px;line-height:14px;text-align:center;-webkit-text-stroke:0.15px;">168 Hz</div>
<div class="a t" style="left:877.0px;top:933.7px;font-size:10.8px;color:#1f2b45;width:80px;height:14px;line-height:14px;text-align:center;">Res</div>
<div class="a t" style="left:877.0px;top:969.5px;font-size:10.8px;color:#1f2b45;width:80px;height:14px;line-height:14px;text-align:center;-webkit-text-stroke:0.15px;">41 %</div>
<div class="a t" style="left:877.0px;top:983.6px;font-size:10.8px;color:#1f2b45;width:80px;height:14px;line-height:14px;text-align:center;">Morph</div>
<div class="a t" style="left:877.0px;top:1019.7px;font-size:10.8px;color:#1f2b45;width:80px;height:14px;line-height:14px;text-align:center;-webkit-text-stroke:0.15px;">14 no/lp</div>
<div class="a t" style="left:951px;top:871px;font-size:10.8px;color:#1f2b45;height:14px;line-height:14px;-webkit-text-stroke:0.35px;">LFO / S&amp;H</div>
<div class="a t" style="left:931.3px;top:884.4px;font-size:10.8px;color:#1f2b45;width:80px;height:14px;line-height:14px;text-align:center;">Amount</div>
<div class="a t" style="left:931.3px;top:920.5px;font-size:10.8px;color:#1f2b45;width:80px;height:14px;line-height:14px;text-align:center;-webkit-text-stroke:0.15px;">21.0</div>
<div class="a t" style="left:971.8px;top:884.4px;font-size:10.8px;color:#1f2b45;width:80px;height:14px;line-height:14px;text-align:center;">Shape</div>
<div class="a t" style="left:931.3px;top:934.3px;font-size:10.8px;color:#1f2b45;width:80px;height:14px;line-height:14px;text-align:center;">Rate</div>
<div class="a t" style="left:931.3px;top:970.4px;font-size:10.8px;color:#1f2b45;width:80px;height:14px;line-height:14px;text-align:center;-webkit-text-stroke:0.15px;">1/2</div>
<div class="a t" style="left:1007px;top:947px;font-size:10.8px;color:#6a86c8;width:19px;height:13px;line-height:13px;text-align:center;">Hz</div>
<div class="a t" style="left:931.3px;top:984.5px;font-size:10.8px;color:#1f2b45;width:80px;height:14px;line-height:14px;text-align:center;">Phase</div>
<div class="a t" style="left:931.3px;top:1020.3px;font-size:10.8px;color:#1f2b45;width:80px;height:14px;line-height:14px;text-align:center;-webkit-text-stroke:0.15px;">180°</div>
<div class="a t" style="left:969.5px;top:984.5px;font-size:10.8px;color:#1f2b45;width:80px;height:14px;line-height:14px;text-align:center;">Offset</div>
<div class="a t" style="left:969.5px;top:1020.3px;font-size:10.8px;color:#1f2b45;width:80px;height:14px;line-height:14px;text-align:center;-webkit-text-stroke:0.15px;">94.3°</div>
<div class="a t" style="left:1052px;top:852px;font-size:10.8px;color:#1f2b45;height:15px;line-height:15px;-webkit-text-stroke:0.35px;">Echo</div>
<div class="a t" style="left:1020.0px;top:868.5px;font-size:10.8px;color:#1f2b45;width:80px;height:14px;line-height:14px;text-align:center;">Left</div>
<div class="a t" style="left:1020.0px;top:905px;font-size:10.8px;color:#1f2b45;width:80px;height:14px;line-height:14px;text-align:center;-webkit-text-stroke:0.15px;">1/16</div>
<div class="a t" style="left:1084.0px;top:868.5px;font-size:10.8px;color:#1f2b45;width:80px;height:14px;line-height:14px;text-align:center;">Right</div>
<div class="a t" style="left:1084.0px;top:905px;font-size:10.8px;color:#1f2b45;width:80px;height:14px;line-height:14px;text-align:center;-webkit-text-stroke:0.15px;">1/8</div>
<div class="a t" style="left:1037px;top:930px;font-size:10.8px;color:#1f2b45;width:47px;height:13px;line-height:13px;text-align:center;">Sync</div>
<div class="a t" style="left:1037px;top:946px;font-size:10.8px;color:#6a86c8;width:39px;height:13px;line-height:13px;text-align:center;">Dotted</div>
<div class="a t" style="left:1037px;top:962px;font-size:10.8px;color:#1f2b45;width:47px;height:13px;line-height:13px;text-align:center;">0.0 %</div>
<div class="a t" style="left:1101px;top:930px;font-size:10.8px;color:#1f2b45;width:47px;height:13px;line-height:13px;text-align:center;">Sync</div>
<div class="a t" style="left:1101px;top:946px;font-size:10.8px;color:#6a86c8;width:39px;height:13px;line-height:13px;text-align:center;">Dotted</div>
<div class="a t" style="left:1101px;top:962px;font-size:10.8px;color:#1f2b45;width:47px;height:13px;line-height:13px;text-align:center;">0.0 %</div>
<div class="a t" style="left:1020.8px;top:985.6px;font-size:10.8px;color:#1f2b45;width:80px;height:14px;line-height:14px;text-align:center;">Input</div>
<div class="a t" style="left:1020.8px;top:1021.4000000000001px;font-size:10.8px;color:#1f2b45;width:80px;height:14px;line-height:14px;text-align:center;-webkit-text-stroke:0.15px;">6.3 dB</div>
<div class="a t" style="left:1086px;top:996px;font-size:10.8px;color:#1f2b45;width:13px;height:13px;line-height:13px;text-align:center;">D</div>
<div class="a t" style="left:1086px;top:1012px;font-size:10.8px;color:#1f2b45;width:13px;height:13px;line-height:13px;text-align:center;">Ø</div>
<div class="a t" style="left:1085.4px;top:985.6px;font-size:10.8px;color:#1f2b45;width:80px;height:14px;line-height:14px;text-align:center;">Feedback</div>
<div class="a t" style="left:1085.4px;top:1021.4000000000001px;font-size:10.8px;color:#1f2b45;width:80px;height:14px;line-height:14px;text-align:center;-webkit-text-stroke:0.15px;">61 %</div>
<div class="a t" style="left:1207.5px;top:852px;font-size:10.8px;color:#1f2b45;width:36px;height:15px;line-height:15px;text-align:center;">Echo</div>
<div class="a t" style="left:1246px;top:852px;font-size:10.8px;color:#1f2b45;width:69.5px;height:15px;line-height:15px;text-align:center;">Modulation</div>
<div class="a t" style="left:1317px;top:852px;font-size:10.8px;color:#c5d5f0;width:63px;height:15px;line-height:15px;text-align:center;">Character</div>
<div class="a t" style="left:1171px;top:871px;font-size:10.8px;color:#a8c0ea;height:13px;line-height:13px;-webkit-text-stroke:0.35px;">Gate</div>
<div class="a t" style="left:1311px;top:871px;font-size:10.8px;color:#a8c0ea;height:13px;line-height:13px;-webkit-text-stroke:0.35px;">Ducking</div>
<div class="a t" style="left:1171px;top:946px;font-size:10.8px;color:#a8c0ea;height:13px;line-height:13px;-webkit-text-stroke:0.35px;">Noise</div>
<div class="a t" style="left:1311px;top:946px;font-size:10.8px;color:#a8c0ea;height:13px;line-height:13px;-webkit-text-stroke:0.35px;">Wobble</div>
<div class="a t" style="left:1171px;top:1021px;font-size:10.8px;color:#a8c0ea;height:13px;line-height:13px;-webkit-text-stroke:0.35px;">Repitch</div>
<div class="a t" style="left:1171px;top:896px;font-size:10.8px;color:#a8c0ea;height:13px;line-height:13px;-webkit-text-stroke:0.35px;">Threshold</div>
<div class="a t" style="left:1224px;top:896px;font-size:10.8px;color:#a8c0ea;height:13px;line-height:13px;-webkit-text-stroke:0.35px;">Release</div>
<div class="a t" style="left:1311px;top:896px;font-size:10.8px;color:#a8c0ea;height:13px;line-height:13px;-webkit-text-stroke:0.35px;">Threshold</div>
<div class="a t" style="left:1365px;top:896px;font-size:10.8px;color:#a8c0ea;height:13px;line-height:13px;-webkit-text-stroke:0.35px;">Release</div>
<div class="a t" style="left:1173px;top:911px;font-size:10.8px;color:#a8c0ea;height:13px;line-height:13px;-webkit-text-stroke:0.35px;">-25 dB</div>
<div class="a t" style="left:1226px;top:911px;font-size:10.8px;color:#a8c0ea;height:13px;line-height:13px;-webkit-text-stroke:0.35px;">50.0 ms</div>
<div class="a t" style="left:1313px;top:911px;font-size:10.8px;color:#a8c0ea;height:13px;line-height:13px;-webkit-text-stroke:0.35px;">-12 dB</div>
<div class="a t" style="left:1367px;top:911px;font-size:10.8px;color:#a8c0ea;height:13px;line-height:13px;-webkit-text-stroke:0.35px;">25.3 ms</div>
<div class="a t" style="left:1171px;top:971px;font-size:10.8px;color:#a8c0ea;height:13px;line-height:13px;-webkit-text-stroke:0.35px;">Amount</div>
<div class="a t" style="left:1224px;top:971px;font-size:10.8px;color:#a8c0ea;height:13px;line-height:13px;-webkit-text-stroke:0.35px;">Morph</div>
<div class="a t" style="left:1311px;top:971px;font-size:10.8px;color:#a8c0ea;height:13px;line-height:13px;-webkit-text-stroke:0.35px;">Amount</div>
<div class="a t" style="left:1365px;top:971px;font-size:10.8px;color:#a8c0ea;height:13px;line-height:13px;-webkit-text-stroke:0.35px;">Morph</div>
<div class="a t" style="left:1173px;top:986px;font-size:10.8px;color:#a8c0ea;height:13px;line-height:13px;-webkit-text-stroke:0.35px;">0.0 %</div>
<div class="a t" style="left:1226px;top:986px;font-size:10.8px;color:#a8c0ea;height:13px;line-height:13px;-webkit-text-stroke:0.35px;">0.0 %</div>
<div class="a t" style="left:1313px;top:986px;font-size:10.8px;color:#a8c0ea;height:13px;line-height:13px;-webkit-text-stroke:0.35px;">12 %</div>
<div class="a t" style="left:1367px;top:986px;font-size:10.8px;color:#a8c0ea;height:13px;line-height:13px;-webkit-text-stroke:0.35px;">79 %</div>
<div class="a t" style="left:1224px;top:1021px;font-size:10.8px;color:#a8c0ea;height:13px;line-height:13px;-webkit-text-stroke:0.35px;">Smoothing Time&nbsp;&nbsp;400 ms</div>
<div class="a t" style="left:1423.0px;top:868.7px;font-size:10.8px;color:#1f2b45;width:80px;height:14px;line-height:14px;text-align:center;">Reverb</div>
<div class="a t" style="left:1423.0px;top:904.6px;font-size:10.8px;color:#1f2b45;width:80px;height:14px;line-height:14px;text-align:center;-webkit-text-stroke:0.15px;">0.0 %</div>
<div class="a t" style="left:1477.3px;top:868.7px;font-size:10.8px;color:#1f2b45;width:80px;height:14px;line-height:14px;text-align:center;">Stereo</div>
<div class="a t" style="left:1477.3px;top:904.6px;font-size:10.8px;color:#1f2b45;width:80px;height:14px;line-height:14px;text-align:center;-webkit-text-stroke:0.15px;">126 %</div>
<div class="a t" style="left:1439px;top:931px;font-size:10.8px;color:#6a86c8;width:43px;height:13px;line-height:13px;text-align:left;">Pre</div>
<div class="a t" style="left:1436px;top:945px;font-size:10.8px;color:#1f2b45;height:14px;line-height:14px;-webkit-text-stroke:0.35px;">Decay</div>
<div class="a t" style="left:1436px;top:959px;font-size:10.8px;color:#1f2b45;width:54px;height:13px;line-height:13px;text-align:center;">30 %</div>
<div class="a t" style="left:1477.3px;top:926.5px;font-size:10.8px;color:#1f2b45;width:80px;height:14px;line-height:14px;text-align:center;">Output</div>
<div class="a t" style="left:1477.3px;top:962.7px;font-size:10.8px;color:#1f2b45;width:80px;height:14px;line-height:14px;text-align:center;-webkit-text-stroke:0.15px;">0.0 dB</div>
<div class="a t" style="left:1436px;top:988px;font-size:10.8px;color:#1f2b45;width:54px;height:13px;line-height:13px;text-align:center;">Stereo</div>
<div class="a t" style="left:1436px;top:1004px;font-size:10.8px;color:#6a86c8;width:54px;height:13px;line-height:13px;text-align:center;">Ping Pong</div>
<div class="a t" style="left:1436px;top:1020px;font-size:10.8px;color:#6a86c8;width:54px;height:13px;line-height:13px;text-align:center;">Mid/Side</div>
<div class="a t" style="left:1477.3px;top:985.6px;font-size:10.8px;color:#1f2b45;width:80px;height:14px;line-height:14px;text-align:center;">Dry/Wet</div>
<div class="a t" style="left:1477.3px;top:1021px;font-size:10.8px;color:#1f2b45;width:80px;height:14px;line-height:14px;text-align:center;-webkit-text-stroke:0.15px;">72 %</div>
<div class="a t" style="left:1498px;top:948px;font-size:10.8px;color:#1f2b45;width:116px;height:14px;line-height:14px;text-align:center;-webkit-text-stroke:0.35px;transform:rotate(-90deg);">Compressor</div>
<div class="a t" style="left:1640px;top:852px;font-size:10.8px;color:#1f2b45;height:15px;line-height:15px;-webkit-text-stroke:0.35px;">Gatekeeper</div>
<div class="a t" style="left:1595px;top:1021px;font-size:10.8px;color:#6a86c8;width:58px;height:13px;line-height:13px;text-align:left;">none</div>
<div class="a t" style="left:1667px;top:1021px;font-size:10.8px;color:#6a86c8;width:58px;height:13px;line-height:13px;text-align:left;">none</div>
<div class="a t" style="left:1760px;top:852px;font-size:10.8px;color:#1f2b45;height:15px;line-height:15px;-webkit-text-stroke:0.35px;">Filtered Dub Tech</div>
<div class="a t" style="left:1729.8px;top:870.5px;font-size:10.8px;color:#1f2b45;width:80px;height:14px;line-height:14px;text-align:center;">Send</div>
<div class="a t" style="left:1729.8px;top:906.6px;font-size:10.8px;color:#1f2b45;width:80px;height:14px;line-height:14px;text-align:center;-webkit-text-stroke:0.15px;">-2.8 dB</div>
<div class="a t" style="left:1729.8px;top:928.4px;font-size:10.8px;color:#1f2b45;width:80px;height:14px;line-height:14px;text-align:center;">Predelay</div>
<div class="a t" style="left:1729.8px;top:964.4px;font-size:10.8px;color:#1f2b45;width:80px;height:14px;line-height:14px;text-align:center;-webkit-text-stroke:0.15px;">2.08 ms</div>
<div class="a t" style="left:1746px;top:981px;font-size:10.8px;color:#1f2b45;width:22px;height:13px;line-height:13px;text-align:center;">ms</div>
<div class="a t" style="left:1729.8px;top:1006.6px;font-size:10.8px;color:#1f2b45;width:80px;height:14px;line-height:14px;text-align:center;">Feedback</div>
<div class="a t" style="left:1746px;top:1020px;font-size:10.8px;color:#1f2b45;width:47px;height:13px;line-height:13px;text-align:center;">16 %</div>
<div class="a t" style="left:1822px;top:948px;font-size:10.8px;color:#a8c0ea;height:13px;line-height:13px;-webkit-text-stroke:0.35px;">Attack</div>
<div class="a t" style="left:1874px;top:948px;font-size:10.8px;color:#a8c0ea;height:13px;line-height:13px;-webkit-text-stroke:0.35px;">Decay</div>
<div class="a t" style="left:1821px;top:964px;font-size:10.8px;color:#a8c0ea;height:13px;line-height:13px;-webkit-text-stroke:0.35px;">0.19 ms</div>
<div class="a t" style="left:1875px;top:964px;font-size:10.8px;color:#a8c0ea;height:13px;line-height:13px;-webkit-text-stroke:0.35px;">5.13 s</div>
<div class="a t" style="left:1804px;top:987px;font-size:10.8px;color:#1f2b45;height:14px;line-height:14px;-webkit-text-stroke:0.35px;">Convolution IR</div>
<div class="a t" style="left:1805px;top:1004px;font-size:10.8px;color:#6a86c8;width:101px;height:13px;line-height:13px;text-align:left;">Springs</div>
<div class="a t" style="left:1805px;top:1020px;font-size:10.8px;color:#6a86c8;width:101px;height:13px;line-height:13px;text-align:left;">Awesome Stereo Springs</div>
<div class="a t" style="left:8px;top:1051px;font-size:10px;color:#6668a2;width:7px;height:13px;line-height:13px;text-align:center;-webkit-text-stroke:0.35px;">i</div>
<div class="a t" style="left:1481px;top:1050px;font-size:10.8px;color:#111;height:15px;line-height:15px;-webkit-text-stroke:0.35px;">18-(World Theories) Talking Bass W...</div>
<div class="a t" style="left:1697px;top:1050px;font-size:9px;color:#222;height:13px;line-height:13px;letter-spacing:-0.5px;">LFO</div>
</body></html>
